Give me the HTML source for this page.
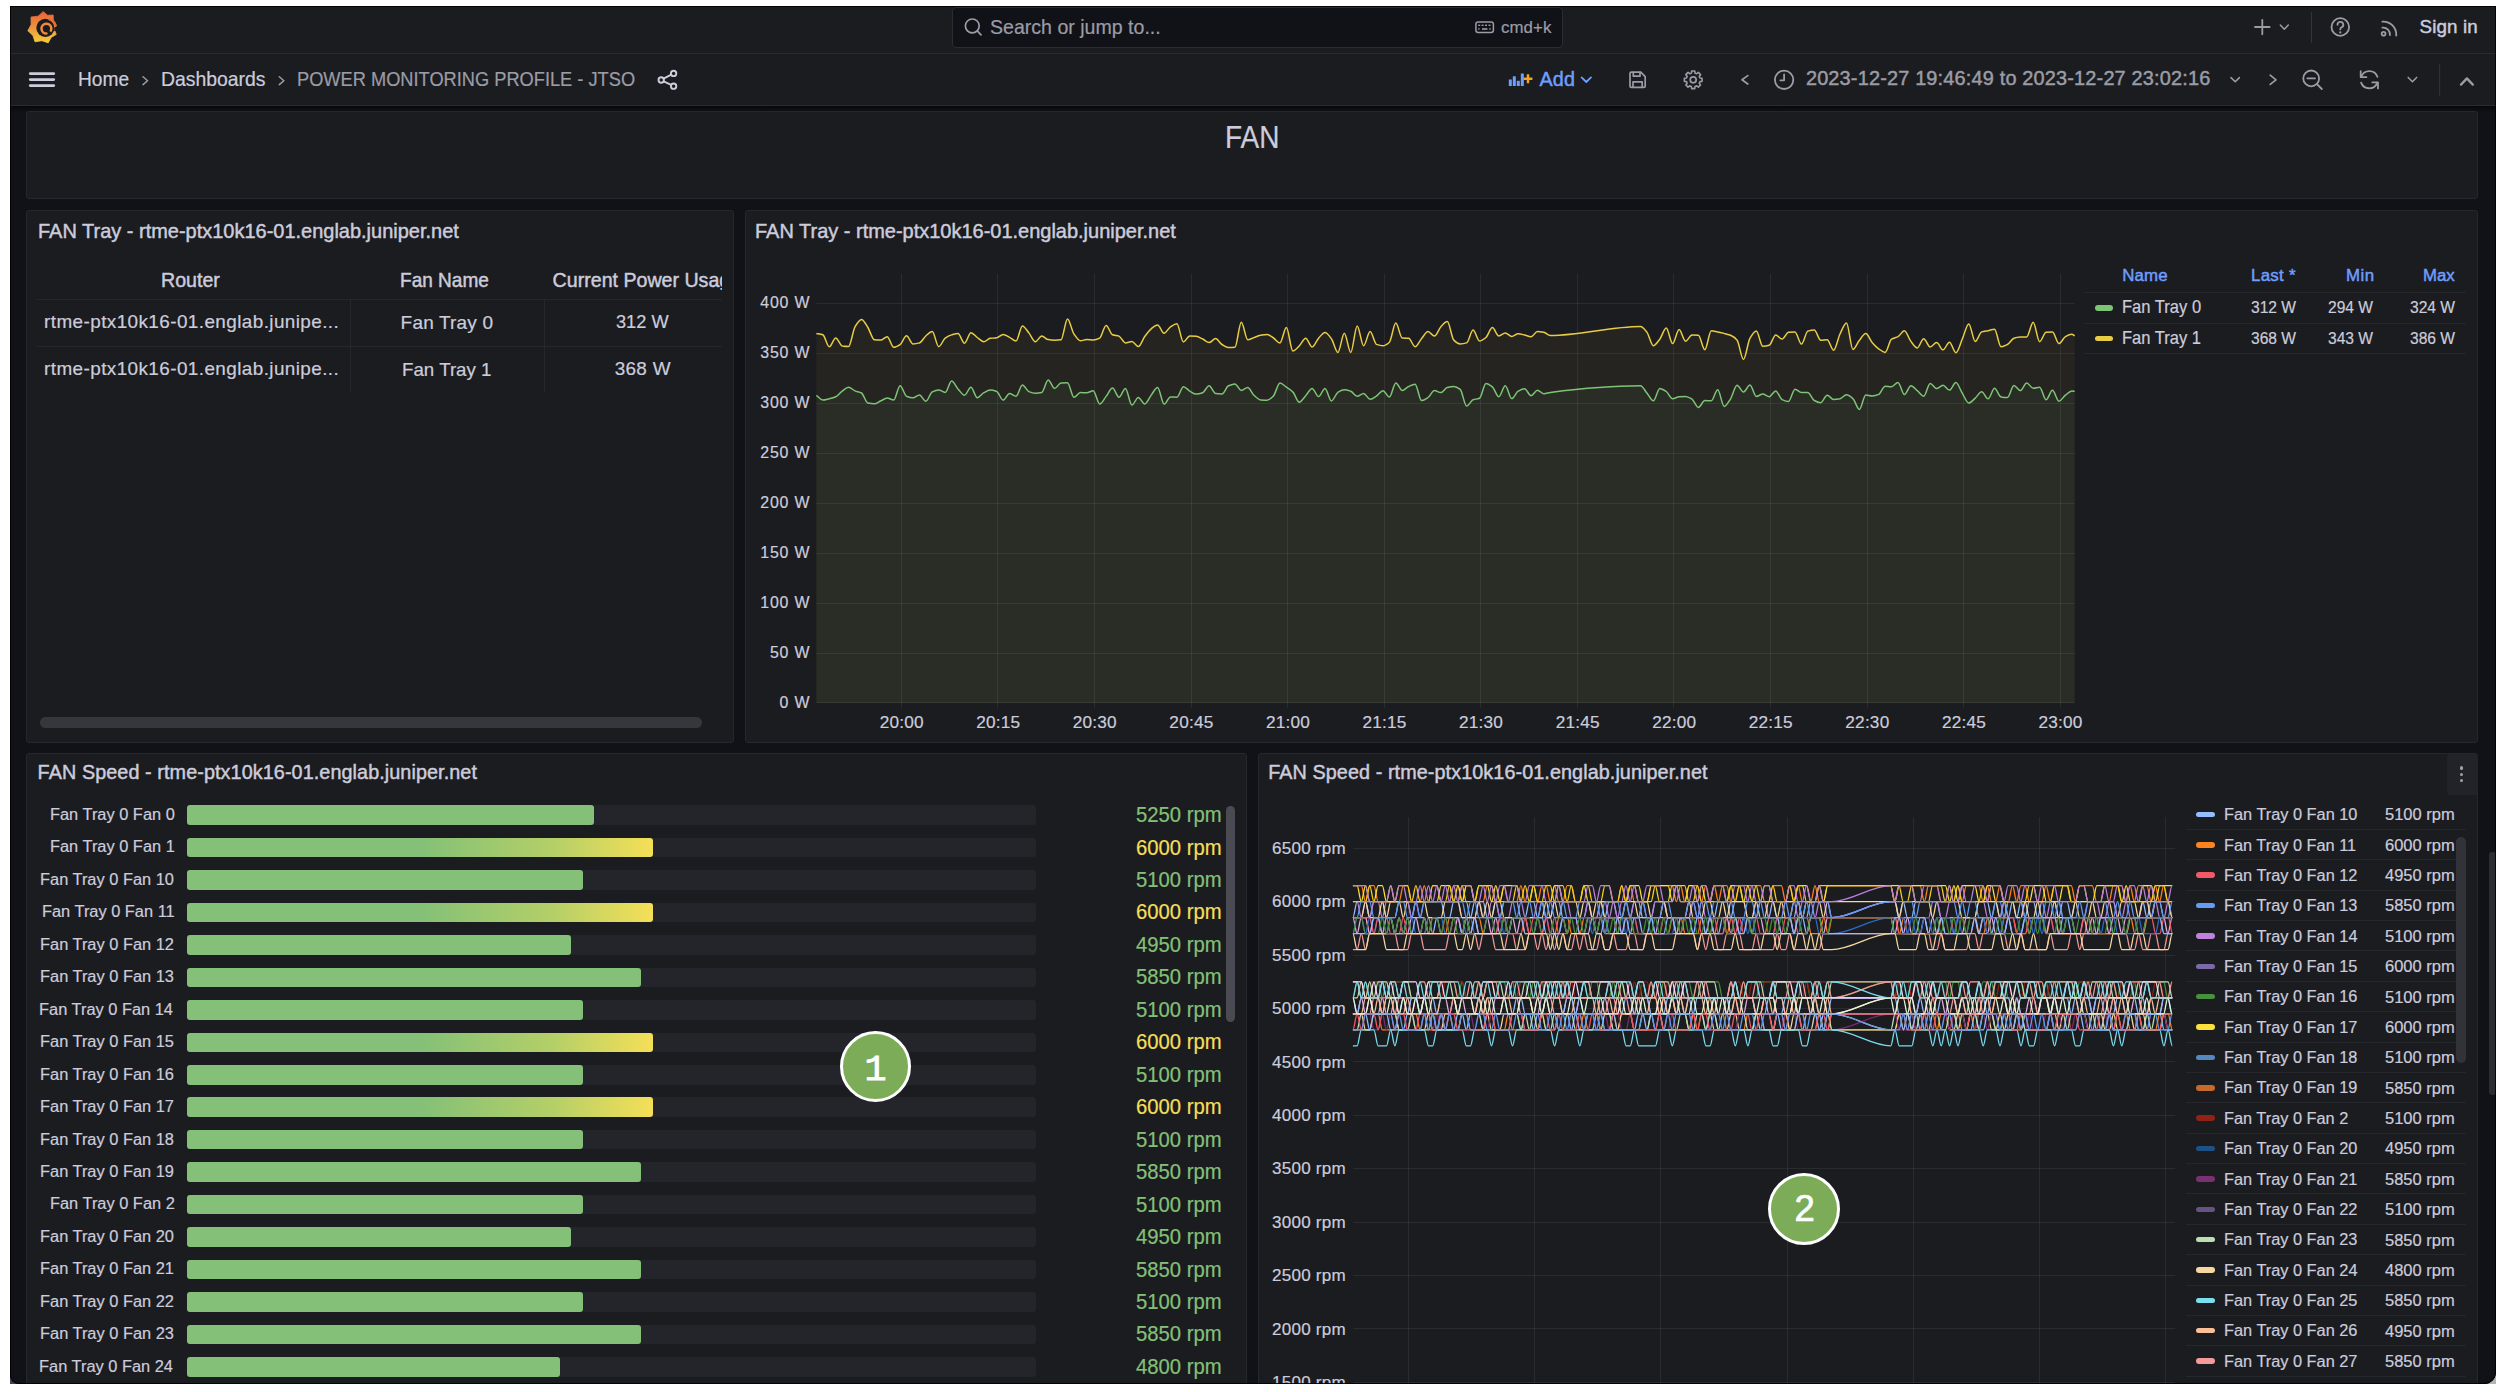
<!DOCTYPE html>
<html><head><meta charset="utf-8"><title>Grafana - FAN</title>
<style>
html,body{margin:0;padding:0;background:#fff;width:2507px;height:1392px;overflow:hidden}
body{position:relative;font-family:"Liberation Sans",sans-serif}
.t{position:absolute;white-space:nowrap;line-height:1}
svg{position:absolute;overflow:visible}
</style></head><body>
<div style="position:absolute;left:10px;top:1368px;width:16px;height:16px;background:#3b4055"></div><div style="position:absolute;left:2480px;top:1368px;width:16px;height:16px;background:#b4b4b4"></div>
<div style="position:absolute;left:10px;top:6px;width:2486px;height:1378px;overflow:hidden;border-radius:0 0 12px 9px"><div style="position:absolute;left:-10px;top:-6px;width:2507px;height:1392px">
<div style="position:absolute;left:10px;top:6px;width:2486px;height:1378px;background:#111217;border-radius:0 0 12px 9px;box-shadow:0 0 0 1px #000"></div>
<div style="position:absolute;left:10px;top:6px;width:2486px;height:47px;background:#1b1c20;"></div>
<div style="position:absolute;left:10px;top:53px;width:2486px;height:1px;background:#2a2b30;"></div>
<div style="position:absolute;left:10px;top:54px;width:2486px;height:51px;background:#1b1c20;"></div>
<div style="position:absolute;left:10px;top:105px;width:2486px;height:1px;background:#2a2b30;"></div>
<div style="position:absolute;left:10px;top:106px;width:2486px;height:6px;background:linear-gradient(#07080b,#111217)"></div>
<div style="position:absolute;left:952px;top:7px;width:611px;height:41px;box-sizing:border-box;background:#111217;border:1px solid #2b2c31;border-radius:4px"></div>
<div class="t" style="left:989.70px;top:17.98px;font-size:19.62px;color:#9b9ca6;transform:scaleX(0.9978);transform-origin:0 0;-webkit-text-stroke:0.2px #9b9ca6">Search or jump to...</div>
<div class="t" style="left:1501.00px;top:19.64px;font-size:16.84px;color:#9b9ca6;letter-spacing:0.095px;-webkit-text-stroke:0.2px #9b9ca6">cmd+k</div>
<div class="t" style="left:2419.50px;top:17.52px;font-size:18.75px;color:#ccccdc;letter-spacing:0.133px;-webkit-text-stroke:0.45px #ccccdc">Sign in</div>
<div class="t" style="left:78.05px;top:69.09px;font-size:20.20px;color:#ccccdc;transform:scaleX(0.9502);transform-origin:0 0;-webkit-text-stroke:0.2px #ccccdc">Home</div>
<div class="t" style="left:160.54px;top:69.09px;font-size:20.20px;color:#ccccdc;transform:scaleX(0.9605);transform-origin:0 0;-webkit-text-stroke:0.2px #ccccdc">Dashboards</div>
<div class="t" style="left:296.70px;top:69.16px;font-size:20.35px;color:#9b9ca6;transform:scaleX(0.8965);transform-origin:0 0;-webkit-text-stroke:0.2px #9b9ca6">POWER MONITORING PROFILE - JTSO</div>
<div class="t" style="left:1539.50px;top:69.56px;font-size:19.77px;color:#6e9fff;letter-spacing:0.171px;-webkit-text-stroke:0.45px #6e9fff">Add</div>
<div class="t" style="left:1805.90px;top:69.43px;font-size:19.91px;color:#9b9ca6;letter-spacing:0.171px;-webkit-text-stroke:0.45px #9b9ca6">2023-12-27 19:46:49 to 2023-12-27 23:02:16</div>
<div style="position:absolute;left:26px;top:111px;width:2452px;height:88px;box-sizing:border-box;background:#1b1c20;border:1px solid #26272c;border-radius:3px"></div>
<div class="t" style="left:1224.91px;top:121.63px;font-size:31.25px;color:#ccccdc;transform:scaleX(0.8967);transform-origin:0 0;-webkit-text-stroke:0.2px #ccccdc">FAN</div>
<div style="position:absolute;left:26px;top:210px;width:708px;height:533px;box-sizing:border-box;background:#1b1c20;border:1px solid #26272c;border-radius:3px"></div>
<div style="position:absolute;left:745px;top:210px;width:1733px;height:533px;box-sizing:border-box;background:#1b1c20;border:1px solid #26272c;border-radius:3px"></div>
<div style="position:absolute;left:26px;top:753px;width:1221px;height:700px;box-sizing:border-box;background:#1b1c20;border:1px solid #26272c;border-radius:3px"></div>
<div style="position:absolute;left:1258px;top:753px;width:1220px;height:700px;box-sizing:border-box;background:#1b1c20;border:1px solid #26272c;border-radius:3px"></div>
<div class="t" style="left:37.60px;top:221.21px;font-size:20.06px;color:#ccccdc;transform:scaleX(0.9964);transform-origin:0 0;-webkit-text-stroke:0.45px #ccccdc">FAN Tray - rtme-ptx10k16-01.englab.juniper.net</div>
<div class="t" style="left:754.80px;top:221.21px;font-size:20.06px;color:#ccccdc;transform:scaleX(0.9964);transform-origin:0 0;-webkit-text-stroke:0.45px #ccccdc">FAN Tray - rtme-ptx10k16-01.englab.juniper.net</div>
<div class="t" style="left:37.60px;top:763.16px;font-size:19.77px;color:#ccccdc;letter-spacing:0.092px;-webkit-text-stroke:0.45px #ccccdc">FAN Speed - rtme-ptx10k16-01.englab.juniper.net</div>
<div class="t" style="left:1268.20px;top:763.16px;font-size:19.77px;color:#ccccdc;letter-spacing:0.092px;-webkit-text-stroke:0.45px #ccccdc">FAN Speed - rtme-ptx10k16-01.englab.juniper.net</div>
<div class="t" style="left:161.21px;top:270.56px;font-size:19.77px;color:#ccccdc;transform:scaleX(0.9914);transform-origin:0 0;-webkit-text-stroke:0.45px #ccccdc">Router</div>
<div class="t" style="left:400.13px;top:270.58px;font-size:19.62px;color:#ccccdc;transform:scaleX(0.9709);transform-origin:0 0;-webkit-text-stroke:0.45px #ccccdc">Fan Name</div>
<div class="t" style="left:552.60px;top:270.58px;font-size:19.62px;color:#ccccdc;-webkit-text-stroke:0.45px #ccccdc;width:169.40px;overflow:hidden">Current Power Usage</div>
<div style="position:absolute;left:37px;top:299px;width:685px;height:1px;background:#26272c;"></div>
<div style="position:absolute;left:37px;top:346px;width:685px;height:1px;background:#26272c;"></div>
<div style="position:absolute;left:350px;top:299px;width:1px;height:93px;background:#26272c;"></div>
<div style="position:absolute;left:544px;top:299px;width:1px;height:93px;background:#26272c;"></div>
<div class="t" style="left:44.10px;top:312.98px;font-size:18.91px;color:#ccccdc;letter-spacing:0.406px;-webkit-text-stroke:0.2px #ccccdc">rtme-ptx10k16-01.englab.junipe...</div>
<div class="t" style="left:400.60px;top:312.97px;font-size:19.04px;color:#ccccdc;letter-spacing:0.164px;-webkit-text-stroke:0.2px #ccccdc">Fan Tray 0</div>
<div class="t" style="left:616.40px;top:313.08px;font-size:18.91px;color:#ccccdc;transform:scaleX(0.9617);transform-origin:0 0;-webkit-text-stroke:0.2px #ccccdc">312 W</div>
<div class="t" style="left:44.10px;top:359.98px;font-size:18.91px;color:#ccccdc;letter-spacing:0.406px;-webkit-text-stroke:0.2px #ccccdc">rtme-ptx10k16-01.englab.junipe...</div>
<div class="t" style="left:402.32px;top:359.87px;font-size:19.04px;color:#ccccdc;transform:scaleX(0.9841);transform-origin:0 0;-webkit-text-stroke:0.2px #ccccdc">Fan Tray 1</div>
<div class="t" style="left:614.70px;top:359.98px;font-size:18.91px;color:#ccccdc;letter-spacing:0.326px;-webkit-text-stroke:0.2px #ccccdc">368 W</div>
<div style="position:absolute;left:40px;top:717px;width:662px;height:11px;background:#36373c;border-radius:6px"></div>
<svg style="left:0;top:0" width="2507" height="1392" viewBox="0 0 2507 1392"><path d="M816.4,333.5C818.5,333.9 820.7,334.0 822.8,334.8C825.0,335.6 827.1,346.8 829.3,346.8C831.4,346.8 833.6,337.9 835.7,337.9C837.9,337.9 840.0,345.6 842.2,346.0C844.3,346.3 846.4,346.5 848.6,346.5C850.7,346.5 852.9,330.3 855.0,326.8C857.2,323.2 859.3,319.4 861.5,319.4C863.6,319.4 865.8,324.3 867.9,327.5C870.0,330.8 872.2,339.4 874.3,339.7C876.5,340.0 878.6,340.1 880.8,340.1C882.9,340.1 885.1,336.7 887.2,336.7C889.4,336.7 891.5,347.3 893.7,347.3C895.8,347.3 897.9,346.0 900.1,344.6C902.2,343.2 904.4,335.8 906.5,335.8C908.7,335.8 910.8,343.9 913.0,343.9C915.1,343.9 917.3,343.5 919.4,342.9C921.6,342.4 923.7,337.8 925.8,336.0C928.0,334.2 930.1,331.6 932.3,331.6C934.4,331.6 936.6,346.7 938.7,346.7C940.9,346.7 943.0,339.7 945.2,338.1C947.3,336.6 949.5,335.5 951.6,334.9C953.7,334.3 955.9,333.5 958.0,333.5C960.2,333.5 962.3,343.2 964.5,343.2C966.6,343.2 968.8,332.7 970.9,332.7C973.1,332.7 975.2,336.0 977.3,337.5C979.5,339.0 981.6,341.7 983.8,341.7C985.9,341.7 988.1,338.6 990.2,338.3C992.4,338.1 994.5,338.1 996.7,337.8C998.8,337.6 1001.0,334.5 1003.1,334.5C1005.2,334.5 1007.4,336.2 1009.5,337.3C1011.7,338.4 1013.8,341.0 1016.0,341.0C1018.1,341.0 1020.3,325.9 1022.4,325.9C1024.6,325.9 1026.7,330.3 1028.9,332.9C1031.0,335.5 1033.1,341.8 1035.3,341.8C1037.4,341.8 1039.6,336.0 1041.7,336.0C1043.9,336.0 1046.0,339.3 1048.2,339.6C1050.3,340.0 1052.5,340.2 1054.6,340.2C1056.8,340.2 1058.9,340.1 1061.0,339.8C1063.2,339.5 1065.3,319.0 1067.5,319.0C1069.6,319.0 1071.8,330.8 1073.9,333.9C1076.1,337.0 1078.2,340.7 1080.4,340.7C1082.5,340.7 1084.6,339.5 1086.8,339.5C1088.9,339.5 1091.1,340.0 1093.2,340.0C1095.4,340.0 1097.5,339.2 1099.7,338.1C1101.8,337.0 1104.0,325.5 1106.1,325.5C1108.3,325.5 1110.4,334.0 1112.5,334.8C1114.7,335.6 1116.8,335.4 1119.0,336.1C1121.1,336.9 1123.3,342.9 1125.4,342.9C1127.6,342.9 1129.7,341.5 1131.9,341.5C1134.0,341.5 1136.2,346.6 1138.3,346.6C1140.4,346.6 1142.6,339.5 1144.7,336.5C1146.9,333.6 1149.0,330.6 1151.2,328.8C1153.3,327.1 1155.5,324.9 1157.6,324.9C1159.8,324.9 1161.9,333.2 1164.1,333.2C1166.2,333.2 1168.3,328.2 1170.5,326.8C1172.6,325.4 1174.8,323.7 1176.9,323.7C1179.1,323.7 1181.2,341.9 1183.4,341.9C1185.5,341.9 1187.7,335.9 1189.8,335.9C1191.9,335.9 1194.1,336.1 1196.2,336.3C1198.4,336.5 1200.5,338.0 1202.7,339.0C1204.8,340.0 1207.0,342.6 1209.1,342.6C1211.3,342.6 1213.4,338.6 1215.6,338.6C1217.7,338.6 1219.8,343.1 1222.0,344.5C1224.1,345.8 1226.3,347.6 1228.4,347.6C1230.6,347.6 1232.7,347.5 1234.9,347.3C1237.0,347.2 1239.2,322.2 1241.3,322.2C1243.5,322.2 1245.6,339.8 1247.7,339.8C1249.9,339.8 1252.0,338.2 1254.2,337.5C1256.3,336.7 1258.5,335.7 1260.6,335.3C1262.8,334.9 1264.9,334.4 1267.1,334.4C1269.2,334.4 1271.3,336.6 1273.5,338.0C1275.6,339.4 1277.8,343.0 1279.9,343.0C1282.1,343.0 1284.2,327.6 1286.4,327.6C1288.5,327.6 1290.7,350.9 1292.8,350.9C1295.0,350.9 1297.1,348.0 1299.2,346.0C1301.4,344.0 1303.5,338.2 1305.7,338.2C1307.8,338.2 1310.0,347.0 1312.1,347.0C1314.3,347.0 1316.4,340.6 1318.6,338.2C1320.7,335.9 1322.9,332.4 1325.0,332.4C1327.1,332.4 1329.3,335.8 1331.4,338.7C1333.6,341.6 1335.7,352.4 1337.9,352.4C1340.0,352.4 1342.2,333.3 1344.3,333.3C1346.5,333.3 1348.6,352.4 1350.8,352.4C1352.9,352.4 1355.0,326.0 1357.2,326.0C1359.3,326.0 1361.5,345.7 1363.6,345.7C1365.8,345.7 1367.9,331.5 1370.1,331.5C1372.2,331.5 1374.4,343.5 1376.5,344.4C1378.6,345.2 1380.8,345.8 1382.9,345.8C1385.1,345.8 1387.2,344.2 1389.4,342.2C1391.5,340.2 1393.7,323.1 1395.8,323.1C1398.0,323.1 1400.1,337.9 1402.3,338.1C1404.4,338.3 1406.5,338.2 1408.7,338.3C1410.8,338.5 1413.0,346.7 1415.1,346.7C1417.3,346.7 1419.4,341.1 1421.6,338.6C1423.7,336.1 1425.9,331.6 1428.0,331.6C1430.2,331.6 1432.3,336.1 1434.4,336.1C1436.6,336.1 1438.7,329.0 1440.9,326.7C1443.0,324.5 1445.2,321.6 1447.3,321.6C1449.5,321.6 1451.6,337.9 1453.8,340.1C1455.9,342.2 1458.1,343.9 1460.2,343.9C1462.3,343.9 1464.5,343.5 1466.6,342.9C1468.8,342.3 1470.9,330.0 1473.1,330.0C1475.2,330.0 1477.4,341.0 1479.5,341.0C1481.7,341.0 1483.8,339.2 1485.9,337.5C1488.1,335.8 1490.2,327.6 1492.4,327.6C1494.5,327.6 1496.7,336.0 1498.8,336.0C1501.0,336.0 1503.1,332.9 1505.3,332.9C1507.4,332.9 1509.6,336.5 1511.7,336.5C1513.8,336.5 1516.0,333.8 1518.1,333.8C1520.3,333.8 1522.4,334.5 1524.6,335.0C1526.7,335.5 1528.9,336.8 1531.0,336.8C1533.2,336.8 1535.3,331.5 1537.5,331.5C1539.6,331.5 1541.7,331.9 1543.9,332.3C1546.0,332.8 1548.2,335.5 1550.3,335.5C1580.4,335.5 1610.4,326.5 1640.5,326.5C1642.6,326.5 1644.8,329.5 1646.9,332.1C1649.0,334.8 1651.2,345.7 1653.3,345.7C1655.5,345.7 1657.6,341.9 1659.8,339.2C1661.9,336.4 1664.1,328.1 1666.2,328.1C1668.4,328.1 1670.5,343.6 1672.6,343.6C1674.8,343.6 1676.9,329.4 1679.1,329.4C1681.2,329.4 1683.4,341.2 1685.5,341.2C1687.7,341.2 1689.8,334.9 1692.0,334.9C1694.1,334.9 1696.3,335.0 1698.4,335.2C1700.5,335.4 1702.7,349.7 1704.8,349.7C1707.0,349.7 1709.1,330.8 1711.3,330.8C1713.4,330.8 1715.6,331.6 1717.7,332.0C1719.9,332.4 1722.0,332.8 1724.2,333.4C1726.3,333.9 1728.4,334.4 1730.6,335.3C1732.7,336.2 1734.9,337.5 1737.0,340.1C1739.2,342.7 1741.3,359.4 1743.5,359.4C1745.6,359.4 1747.8,342.0 1749.9,338.4C1752.1,334.8 1754.2,331.1 1756.3,331.1C1758.5,331.1 1760.6,346.3 1762.8,346.3C1764.9,346.3 1767.1,345.9 1769.2,345.2C1771.4,344.6 1773.5,335.0 1775.7,335.0C1777.8,335.0 1779.9,339.1 1782.1,339.1C1784.2,339.1 1786.4,332.4 1788.5,332.2C1790.7,332.0 1792.8,331.9 1795.0,331.9C1797.1,331.9 1799.3,344.0 1801.4,344.0C1803.6,344.0 1805.7,331.8 1807.8,331.1C1810.0,330.5 1812.1,330.1 1814.3,330.1C1816.4,330.1 1818.6,340.2 1820.7,340.2C1822.9,340.2 1825.0,339.7 1827.2,339.7C1829.3,339.7 1831.5,350.2 1833.6,350.2C1835.7,350.2 1837.9,338.4 1840.0,334.0C1842.2,329.6 1844.3,322.9 1846.5,322.9C1848.6,322.9 1850.8,349.5 1852.9,349.5C1855.1,349.5 1857.2,342.9 1859.4,340.3C1861.5,337.7 1863.6,333.5 1865.8,333.5C1867.9,333.5 1870.1,340.1 1872.2,342.6C1874.4,345.0 1876.5,347.3 1878.7,348.8C1880.8,350.3 1883.0,352.4 1885.1,352.4C1887.2,352.4 1889.4,340.6 1891.5,339.2C1893.7,337.8 1895.8,337.8 1898.0,336.7C1900.1,335.5 1902.3,330.7 1904.4,330.7C1906.6,330.7 1908.7,338.7 1910.9,341.4C1913.0,344.1 1915.1,347.9 1917.3,347.9C1919.4,347.9 1921.6,338.7 1923.7,338.7C1925.9,338.7 1928.0,346.9 1930.2,346.9C1932.3,346.9 1934.5,342.6 1936.6,342.6C1938.8,342.6 1940.9,349.8 1943.0,349.8C1945.2,349.8 1947.3,342.2 1949.5,342.2C1951.6,342.2 1953.8,352.7 1955.9,352.7C1958.1,352.7 1960.2,343.6 1962.4,338.8C1964.5,334.1 1966.6,323.9 1968.8,323.9C1970.9,323.9 1973.1,341.4 1975.2,341.4C1977.4,341.4 1979.5,332.7 1981.7,331.9C1983.8,331.2 1986.0,331.1 1988.1,330.7C1990.3,330.2 1992.4,329.2 1994.5,329.2C1996.7,329.2 1998.8,346.8 2001.0,346.8C2003.1,346.8 2005.3,345.6 2007.4,344.5C2009.6,343.4 2011.7,338.9 2013.9,338.2C2016.0,337.5 2018.2,337.1 2020.3,337.0C2022.4,336.9 2024.6,336.9 2026.7,336.9C2028.9,336.8 2031.0,322.2 2033.2,322.2C2035.3,322.2 2037.5,341.7 2039.6,341.7C2041.8,341.7 2043.9,332.4 2046.1,332.3C2048.2,332.2 2050.3,332.1 2052.5,332.1C2054.6,332.1 2056.8,343.5 2058.9,343.5C2061.1,343.5 2063.2,337.8 2065.4,336.6C2067.5,335.4 2069.7,334.2 2071.8,334.2C2072.8,334.2 2073.7,335.3 2074.7,335.9 L2074.7,703 L816.4,703 Z" fill="#e8cc44" fill-opacity="0.05" stroke="none"/><path d="M816.4,395.4C818.5,396.9 820.7,400.0 822.8,400.0C825.0,400.0 827.1,399.2 829.3,398.7C831.4,398.1 833.6,397.8 835.7,396.8C837.9,395.9 840.0,392.6 842.2,391.1C844.3,389.6 846.4,387.3 848.6,387.3C850.7,387.3 852.9,390.0 855.0,390.9C857.2,391.8 859.3,391.8 861.5,393.0C863.6,394.2 865.8,402.7 867.9,403.1C870.0,403.5 872.2,403.8 874.3,403.8C876.5,403.8 878.6,401.8 880.8,400.8C882.9,399.9 885.1,398.1 887.2,398.1C889.4,398.1 891.5,400.0 893.7,400.0C895.8,400.0 897.9,385.7 900.1,385.7C902.2,385.7 904.4,395.2 906.5,396.2C908.7,397.1 910.8,397.8 913.0,397.8C915.1,397.8 917.3,395.0 919.4,395.0C921.6,395.0 923.7,401.2 925.8,401.2C928.0,401.2 930.1,392.9 932.3,391.8C934.4,390.8 936.6,390.0 938.7,390.0C940.9,390.0 943.0,392.4 945.2,392.4C947.3,392.4 949.5,381.0 951.6,381.0C953.7,381.0 955.9,386.5 958.0,388.9C960.2,391.2 962.3,395.2 964.5,395.2C966.6,395.2 968.8,387.3 970.9,387.3C973.1,387.3 975.2,397.8 977.3,397.8C979.5,397.8 981.6,393.9 983.8,392.7C985.9,391.6 988.1,390.1 990.2,390.1C992.4,390.1 994.5,390.7 996.7,391.5C998.8,392.3 1001.0,400.1 1003.1,400.1C1005.2,400.1 1007.4,393.5 1009.5,393.5C1011.7,393.5 1013.8,396.2 1016.0,396.2C1018.1,396.2 1020.3,385.1 1022.4,385.1C1024.6,385.1 1026.7,390.8 1028.9,391.6C1031.0,392.5 1033.1,393.3 1035.3,393.3C1037.4,393.3 1039.6,393.0 1041.7,392.5C1043.9,392.0 1046.0,379.9 1048.2,379.9C1050.3,379.9 1052.5,388.4 1054.6,388.4C1056.8,388.4 1058.9,383.0 1061.0,382.9C1063.2,382.8 1065.3,382.8 1067.5,382.8C1069.6,382.8 1071.8,397.3 1073.9,397.3C1076.1,397.3 1078.2,392.6 1080.4,392.6C1082.5,392.6 1084.6,392.8 1086.8,392.8C1088.9,392.8 1091.1,390.7 1093.2,390.7C1095.4,390.7 1097.5,404.0 1099.7,404.0C1101.8,404.0 1104.0,399.0 1106.1,396.4C1108.3,393.7 1110.4,388.1 1112.5,388.1C1114.7,388.1 1116.8,397.2 1119.0,397.2C1121.1,397.2 1123.3,388.4 1125.4,388.4C1127.6,388.4 1129.7,405.1 1131.9,405.1C1134.0,405.1 1136.2,397.4 1138.3,397.4C1140.4,397.4 1142.6,404.0 1144.7,404.0C1146.9,404.0 1149.0,397.9 1151.2,395.1C1153.3,392.4 1155.5,387.5 1157.6,387.5C1159.8,387.5 1161.9,404.1 1164.1,404.1C1166.2,404.1 1168.3,396.9 1170.5,396.9C1172.6,396.9 1174.8,397.2 1176.9,397.2C1179.1,397.2 1181.2,386.7 1183.4,386.7C1185.5,386.7 1187.7,389.9 1189.8,391.1C1191.9,392.3 1194.1,394.1 1196.2,394.1C1198.4,394.1 1200.5,393.5 1202.7,392.7C1204.8,391.9 1207.0,385.7 1209.1,385.7C1211.3,385.7 1213.4,393.2 1215.6,393.5C1217.7,393.8 1219.8,393.9 1222.0,393.9C1224.1,393.9 1226.3,386.8 1228.4,385.8C1230.6,384.9 1232.7,384.0 1234.9,384.0C1237.0,384.0 1239.2,390.4 1241.3,390.4C1243.5,390.4 1245.6,387.6 1247.7,387.6C1249.9,387.6 1252.0,393.7 1254.2,395.5C1256.3,397.4 1258.5,399.7 1260.6,399.9C1262.8,400.1 1264.9,400.3 1267.1,400.3C1269.2,400.3 1271.3,398.1 1273.5,395.9C1275.6,393.7 1277.8,382.9 1279.9,382.9C1282.1,382.9 1284.2,385.6 1286.4,387.1C1288.5,388.6 1290.7,389.7 1292.8,391.9C1295.0,394.1 1297.1,402.2 1299.2,402.2C1301.4,402.2 1303.5,398.1 1305.7,395.8C1307.8,393.5 1310.0,388.4 1312.1,388.4C1314.3,388.4 1316.4,396.6 1318.6,396.6C1320.7,396.6 1322.9,388.4 1325.0,388.4C1327.1,388.4 1329.3,400.9 1331.4,400.9C1333.6,400.9 1335.7,393.6 1337.9,392.3C1340.0,391.1 1342.2,389.8 1344.3,389.8C1346.5,389.8 1348.6,390.5 1350.8,391.2C1352.9,391.9 1355.0,396.3 1357.2,396.3C1359.3,396.3 1361.5,393.4 1363.6,393.4C1365.8,393.4 1367.9,399.3 1370.1,399.3C1372.2,399.3 1374.4,397.4 1376.5,396.0C1378.6,394.7 1380.8,390.7 1382.9,390.7C1385.1,390.7 1387.2,397.0 1389.4,397.0C1391.5,397.0 1393.7,382.9 1395.8,382.9C1398.0,382.9 1400.1,390.5 1402.3,390.5C1404.4,390.5 1406.5,387.4 1408.7,386.5C1410.8,385.5 1413.0,384.3 1415.1,384.3C1417.3,384.3 1419.4,400.6 1421.6,400.6C1423.7,400.6 1425.9,398.9 1428.0,397.5C1430.2,396.1 1432.3,390.5 1434.4,390.5C1436.6,390.5 1438.7,392.6 1440.9,392.6C1443.0,392.6 1445.2,388.0 1447.3,387.4C1449.5,386.9 1451.6,386.5 1453.8,386.5C1455.9,386.5 1458.1,387.8 1460.2,389.4C1462.3,391.0 1464.5,406.0 1466.6,406.0C1468.8,406.0 1470.9,400.6 1473.1,399.8C1475.2,399.0 1477.4,399.2 1479.5,398.2C1481.7,397.3 1483.8,383.5 1485.9,383.5C1488.1,383.5 1490.2,385.2 1492.4,386.9C1494.5,388.6 1496.7,396.8 1498.8,396.8C1501.0,396.8 1503.1,385.8 1505.3,385.8C1507.4,385.8 1509.6,398.6 1511.7,398.6C1513.8,398.6 1516.0,392.4 1518.1,391.2C1520.3,390.0 1522.4,388.8 1524.6,388.8C1526.7,388.8 1528.9,395.7 1531.0,395.7C1533.2,395.7 1535.3,390.3 1537.5,390.3C1539.6,390.3 1541.7,393.8 1543.9,393.8C1546.0,393.8 1548.2,392.7 1550.3,392.4C1580.4,388.6 1610.4,385.8 1640.5,385.8C1642.6,385.8 1644.8,390.5 1646.9,393.0C1649.0,395.5 1651.2,400.8 1653.3,400.8C1655.5,400.8 1657.6,388.5 1659.8,388.5C1661.9,388.5 1664.1,390.1 1666.2,391.5C1668.4,392.9 1670.5,398.7 1672.6,398.7C1674.8,398.7 1676.9,396.8 1679.1,396.7C1681.2,396.6 1683.4,396.5 1685.5,396.5C1687.7,396.5 1689.8,397.8 1692.0,399.1C1694.1,400.4 1696.3,407.4 1698.4,407.4C1700.5,407.4 1702.7,400.6 1704.8,400.6C1707.0,400.6 1709.1,400.8 1711.3,400.8C1713.4,400.8 1715.6,389.8 1717.7,389.8C1719.9,389.8 1722.0,406.4 1724.2,406.4C1726.3,406.4 1728.4,402.0 1730.6,398.8C1732.7,395.6 1734.9,385.3 1737.0,385.3C1739.2,385.3 1741.3,392.0 1743.5,392.0C1745.6,392.0 1747.8,385.0 1749.9,385.0C1752.1,385.0 1754.2,396.5 1756.3,396.5C1758.5,396.5 1760.6,394.0 1762.8,394.0C1764.9,394.0 1767.1,396.7 1769.2,396.7C1771.4,396.7 1773.5,390.9 1775.7,390.9C1777.8,390.9 1779.9,398.6 1782.1,399.6C1784.2,400.6 1786.4,401.5 1788.5,401.5C1790.7,401.5 1792.8,389.2 1795.0,389.2C1797.1,389.2 1799.3,392.5 1801.4,392.6C1803.6,392.6 1805.7,392.6 1807.8,392.6C1810.0,392.7 1812.1,399.4 1814.3,400.5C1816.4,401.7 1818.6,402.7 1820.7,402.7C1822.9,402.7 1825.0,395.2 1827.2,395.2C1829.3,395.2 1831.5,399.5 1833.6,399.5C1835.7,399.5 1837.9,399.1 1840.0,398.7C1842.2,398.2 1844.3,394.8 1846.5,394.8C1848.6,394.8 1850.8,396.7 1852.9,398.6C1855.1,400.4 1857.2,409.4 1859.4,409.4C1861.5,409.4 1863.6,394.9 1865.8,394.9C1867.9,394.9 1870.1,395.9 1872.2,395.9C1874.4,395.9 1876.5,395.3 1878.7,394.4C1880.8,393.5 1883.0,386.2 1885.1,386.2C1887.2,386.2 1889.4,386.7 1891.5,386.7C1893.7,386.7 1895.8,382.4 1898.0,382.4C1900.1,382.4 1902.3,394.5 1904.4,394.5C1906.6,394.5 1908.7,385.7 1910.9,385.7C1913.0,385.7 1915.1,388.8 1917.3,390.6C1919.4,392.3 1921.6,396.2 1923.7,396.2C1925.9,396.2 1928.0,383.4 1930.2,383.4C1932.3,383.4 1934.5,388.6 1936.6,388.6C1938.8,388.6 1940.9,385.2 1943.0,385.2C1945.2,385.2 1947.3,390.1 1949.5,390.1C1951.6,390.1 1953.8,382.5 1955.9,382.5C1958.1,382.5 1960.2,390.0 1962.4,393.4C1964.5,396.8 1966.6,403.0 1968.8,403.0C1970.9,403.0 1973.1,399.9 1975.2,398.1C1977.4,396.2 1979.5,391.8 1981.7,391.8C1983.8,391.8 1986.0,398.8 1988.1,398.8C1990.3,398.8 1992.4,388.3 1994.5,388.3C1996.7,388.3 1998.8,396.5 2001.0,396.9C2003.1,397.3 2005.3,397.5 2007.4,397.5C2009.6,397.5 2011.7,385.5 2013.9,385.5C2016.0,385.5 2018.2,390.6 2020.3,390.6C2022.4,390.6 2024.6,383.0 2026.7,383.0C2028.9,383.0 2031.0,388.3 2033.2,388.3C2035.3,388.3 2037.5,387.3 2039.6,387.3C2041.8,387.3 2043.9,399.8 2046.1,399.8C2048.2,399.8 2050.3,390.3 2052.5,390.3C2054.6,390.3 2056.8,401.2 2058.9,401.2C2061.1,401.2 2063.2,396.9 2065.4,395.2C2067.5,393.6 2069.7,390.9 2071.8,390.9C2072.8,390.9 2073.7,391.2 2074.7,391.4 L2074.7,703 L816.4,703 Z" fill="#7ec475" fill-opacity="0.06" stroke="none"/><line x1="816.4" y1="303.5" x2="2074.7" y2="303.5" stroke="rgba(204,204,220,0.085)" stroke-width="1"/><line x1="816.4" y1="353.5" x2="2074.7" y2="353.5" stroke="rgba(204,204,220,0.085)" stroke-width="1"/><line x1="816.4" y1="403.5" x2="2074.7" y2="403.5" stroke="rgba(204,204,220,0.085)" stroke-width="1"/><line x1="816.4" y1="453.5" x2="2074.7" y2="453.5" stroke="rgba(204,204,220,0.085)" stroke-width="1"/><line x1="816.4" y1="503.5" x2="2074.7" y2="503.5" stroke="rgba(204,204,220,0.085)" stroke-width="1"/><line x1="816.4" y1="553.5" x2="2074.7" y2="553.5" stroke="rgba(204,204,220,0.085)" stroke-width="1"/><line x1="816.4" y1="603.5" x2="2074.7" y2="603.5" stroke="rgba(204,204,220,0.085)" stroke-width="1"/><line x1="816.4" y1="653.5" x2="2074.7" y2="653.5" stroke="rgba(204,204,220,0.085)" stroke-width="1"/><line x1="816.4" y1="702.5" x2="2074.7" y2="702.5" stroke="rgba(204,204,220,0.085)" stroke-width="1"/><line x1="901.5" y1="273.8" x2="901.5" y2="708" stroke="rgba(204,204,220,0.085)" stroke-width="1"/><line x1="997.5" y1="273.8" x2="997.5" y2="708" stroke="rgba(204,204,220,0.085)" stroke-width="1"/><line x1="1094.5" y1="273.8" x2="1094.5" y2="708" stroke="rgba(204,204,220,0.085)" stroke-width="1"/><line x1="1191.5" y1="273.8" x2="1191.5" y2="708" stroke="rgba(204,204,220,0.085)" stroke-width="1"/><line x1="1287.5" y1="273.8" x2="1287.5" y2="708" stroke="rgba(204,204,220,0.085)" stroke-width="1"/><line x1="1384.5" y1="273.8" x2="1384.5" y2="708" stroke="rgba(204,204,220,0.085)" stroke-width="1"/><line x1="1480.5" y1="273.8" x2="1480.5" y2="708" stroke="rgba(204,204,220,0.085)" stroke-width="1"/><line x1="1577.5" y1="273.8" x2="1577.5" y2="708" stroke="rgba(204,204,220,0.085)" stroke-width="1"/><line x1="1673.5" y1="273.8" x2="1673.5" y2="708" stroke="rgba(204,204,220,0.085)" stroke-width="1"/><line x1="1770.5" y1="273.8" x2="1770.5" y2="708" stroke="rgba(204,204,220,0.085)" stroke-width="1"/><line x1="1867.5" y1="273.8" x2="1867.5" y2="708" stroke="rgba(204,204,220,0.085)" stroke-width="1"/><line x1="1963.5" y1="273.8" x2="1963.5" y2="708" stroke="rgba(204,204,220,0.085)" stroke-width="1"/><line x1="2060.5" y1="273.8" x2="2060.5" y2="708" stroke="rgba(204,204,220,0.085)" stroke-width="1"/><path d="M816.4,395.4C818.5,396.9 820.7,400.0 822.8,400.0C825.0,400.0 827.1,399.2 829.3,398.7C831.4,398.1 833.6,397.8 835.7,396.8C837.9,395.9 840.0,392.6 842.2,391.1C844.3,389.6 846.4,387.3 848.6,387.3C850.7,387.3 852.9,390.0 855.0,390.9C857.2,391.8 859.3,391.8 861.5,393.0C863.6,394.2 865.8,402.7 867.9,403.1C870.0,403.5 872.2,403.8 874.3,403.8C876.5,403.8 878.6,401.8 880.8,400.8C882.9,399.9 885.1,398.1 887.2,398.1C889.4,398.1 891.5,400.0 893.7,400.0C895.8,400.0 897.9,385.7 900.1,385.7C902.2,385.7 904.4,395.2 906.5,396.2C908.7,397.1 910.8,397.8 913.0,397.8C915.1,397.8 917.3,395.0 919.4,395.0C921.6,395.0 923.7,401.2 925.8,401.2C928.0,401.2 930.1,392.9 932.3,391.8C934.4,390.8 936.6,390.0 938.7,390.0C940.9,390.0 943.0,392.4 945.2,392.4C947.3,392.4 949.5,381.0 951.6,381.0C953.7,381.0 955.9,386.5 958.0,388.9C960.2,391.2 962.3,395.2 964.5,395.2C966.6,395.2 968.8,387.3 970.9,387.3C973.1,387.3 975.2,397.8 977.3,397.8C979.5,397.8 981.6,393.9 983.8,392.7C985.9,391.6 988.1,390.1 990.2,390.1C992.4,390.1 994.5,390.7 996.7,391.5C998.8,392.3 1001.0,400.1 1003.1,400.1C1005.2,400.1 1007.4,393.5 1009.5,393.5C1011.7,393.5 1013.8,396.2 1016.0,396.2C1018.1,396.2 1020.3,385.1 1022.4,385.1C1024.6,385.1 1026.7,390.8 1028.9,391.6C1031.0,392.5 1033.1,393.3 1035.3,393.3C1037.4,393.3 1039.6,393.0 1041.7,392.5C1043.9,392.0 1046.0,379.9 1048.2,379.9C1050.3,379.9 1052.5,388.4 1054.6,388.4C1056.8,388.4 1058.9,383.0 1061.0,382.9C1063.2,382.8 1065.3,382.8 1067.5,382.8C1069.6,382.8 1071.8,397.3 1073.9,397.3C1076.1,397.3 1078.2,392.6 1080.4,392.6C1082.5,392.6 1084.6,392.8 1086.8,392.8C1088.9,392.8 1091.1,390.7 1093.2,390.7C1095.4,390.7 1097.5,404.0 1099.7,404.0C1101.8,404.0 1104.0,399.0 1106.1,396.4C1108.3,393.7 1110.4,388.1 1112.5,388.1C1114.7,388.1 1116.8,397.2 1119.0,397.2C1121.1,397.2 1123.3,388.4 1125.4,388.4C1127.6,388.4 1129.7,405.1 1131.9,405.1C1134.0,405.1 1136.2,397.4 1138.3,397.4C1140.4,397.4 1142.6,404.0 1144.7,404.0C1146.9,404.0 1149.0,397.9 1151.2,395.1C1153.3,392.4 1155.5,387.5 1157.6,387.5C1159.8,387.5 1161.9,404.1 1164.1,404.1C1166.2,404.1 1168.3,396.9 1170.5,396.9C1172.6,396.9 1174.8,397.2 1176.9,397.2C1179.1,397.2 1181.2,386.7 1183.4,386.7C1185.5,386.7 1187.7,389.9 1189.8,391.1C1191.9,392.3 1194.1,394.1 1196.2,394.1C1198.4,394.1 1200.5,393.5 1202.7,392.7C1204.8,391.9 1207.0,385.7 1209.1,385.7C1211.3,385.7 1213.4,393.2 1215.6,393.5C1217.7,393.8 1219.8,393.9 1222.0,393.9C1224.1,393.9 1226.3,386.8 1228.4,385.8C1230.6,384.9 1232.7,384.0 1234.9,384.0C1237.0,384.0 1239.2,390.4 1241.3,390.4C1243.5,390.4 1245.6,387.6 1247.7,387.6C1249.9,387.6 1252.0,393.7 1254.2,395.5C1256.3,397.4 1258.5,399.7 1260.6,399.9C1262.8,400.1 1264.9,400.3 1267.1,400.3C1269.2,400.3 1271.3,398.1 1273.5,395.9C1275.6,393.7 1277.8,382.9 1279.9,382.9C1282.1,382.9 1284.2,385.6 1286.4,387.1C1288.5,388.6 1290.7,389.7 1292.8,391.9C1295.0,394.1 1297.1,402.2 1299.2,402.2C1301.4,402.2 1303.5,398.1 1305.7,395.8C1307.8,393.5 1310.0,388.4 1312.1,388.4C1314.3,388.4 1316.4,396.6 1318.6,396.6C1320.7,396.6 1322.9,388.4 1325.0,388.4C1327.1,388.4 1329.3,400.9 1331.4,400.9C1333.6,400.9 1335.7,393.6 1337.9,392.3C1340.0,391.1 1342.2,389.8 1344.3,389.8C1346.5,389.8 1348.6,390.5 1350.8,391.2C1352.9,391.9 1355.0,396.3 1357.2,396.3C1359.3,396.3 1361.5,393.4 1363.6,393.4C1365.8,393.4 1367.9,399.3 1370.1,399.3C1372.2,399.3 1374.4,397.4 1376.5,396.0C1378.6,394.7 1380.8,390.7 1382.9,390.7C1385.1,390.7 1387.2,397.0 1389.4,397.0C1391.5,397.0 1393.7,382.9 1395.8,382.9C1398.0,382.9 1400.1,390.5 1402.3,390.5C1404.4,390.5 1406.5,387.4 1408.7,386.5C1410.8,385.5 1413.0,384.3 1415.1,384.3C1417.3,384.3 1419.4,400.6 1421.6,400.6C1423.7,400.6 1425.9,398.9 1428.0,397.5C1430.2,396.1 1432.3,390.5 1434.4,390.5C1436.6,390.5 1438.7,392.6 1440.9,392.6C1443.0,392.6 1445.2,388.0 1447.3,387.4C1449.5,386.9 1451.6,386.5 1453.8,386.5C1455.9,386.5 1458.1,387.8 1460.2,389.4C1462.3,391.0 1464.5,406.0 1466.6,406.0C1468.8,406.0 1470.9,400.6 1473.1,399.8C1475.2,399.0 1477.4,399.2 1479.5,398.2C1481.7,397.3 1483.8,383.5 1485.9,383.5C1488.1,383.5 1490.2,385.2 1492.4,386.9C1494.5,388.6 1496.7,396.8 1498.8,396.8C1501.0,396.8 1503.1,385.8 1505.3,385.8C1507.4,385.8 1509.6,398.6 1511.7,398.6C1513.8,398.6 1516.0,392.4 1518.1,391.2C1520.3,390.0 1522.4,388.8 1524.6,388.8C1526.7,388.8 1528.9,395.7 1531.0,395.7C1533.2,395.7 1535.3,390.3 1537.5,390.3C1539.6,390.3 1541.7,393.8 1543.9,393.8C1546.0,393.8 1548.2,392.7 1550.3,392.4C1580.4,388.6 1610.4,385.8 1640.5,385.8C1642.6,385.8 1644.8,390.5 1646.9,393.0C1649.0,395.5 1651.2,400.8 1653.3,400.8C1655.5,400.8 1657.6,388.5 1659.8,388.5C1661.9,388.5 1664.1,390.1 1666.2,391.5C1668.4,392.9 1670.5,398.7 1672.6,398.7C1674.8,398.7 1676.9,396.8 1679.1,396.7C1681.2,396.6 1683.4,396.5 1685.5,396.5C1687.7,396.5 1689.8,397.8 1692.0,399.1C1694.1,400.4 1696.3,407.4 1698.4,407.4C1700.5,407.4 1702.7,400.6 1704.8,400.6C1707.0,400.6 1709.1,400.8 1711.3,400.8C1713.4,400.8 1715.6,389.8 1717.7,389.8C1719.9,389.8 1722.0,406.4 1724.2,406.4C1726.3,406.4 1728.4,402.0 1730.6,398.8C1732.7,395.6 1734.9,385.3 1737.0,385.3C1739.2,385.3 1741.3,392.0 1743.5,392.0C1745.6,392.0 1747.8,385.0 1749.9,385.0C1752.1,385.0 1754.2,396.5 1756.3,396.5C1758.5,396.5 1760.6,394.0 1762.8,394.0C1764.9,394.0 1767.1,396.7 1769.2,396.7C1771.4,396.7 1773.5,390.9 1775.7,390.9C1777.8,390.9 1779.9,398.6 1782.1,399.6C1784.2,400.6 1786.4,401.5 1788.5,401.5C1790.7,401.5 1792.8,389.2 1795.0,389.2C1797.1,389.2 1799.3,392.5 1801.4,392.6C1803.6,392.6 1805.7,392.6 1807.8,392.6C1810.0,392.7 1812.1,399.4 1814.3,400.5C1816.4,401.7 1818.6,402.7 1820.7,402.7C1822.9,402.7 1825.0,395.2 1827.2,395.2C1829.3,395.2 1831.5,399.5 1833.6,399.5C1835.7,399.5 1837.9,399.1 1840.0,398.7C1842.2,398.2 1844.3,394.8 1846.5,394.8C1848.6,394.8 1850.8,396.7 1852.9,398.6C1855.1,400.4 1857.2,409.4 1859.4,409.4C1861.5,409.4 1863.6,394.9 1865.8,394.9C1867.9,394.9 1870.1,395.9 1872.2,395.9C1874.4,395.9 1876.5,395.3 1878.7,394.4C1880.8,393.5 1883.0,386.2 1885.1,386.2C1887.2,386.2 1889.4,386.7 1891.5,386.7C1893.7,386.7 1895.8,382.4 1898.0,382.4C1900.1,382.4 1902.3,394.5 1904.4,394.5C1906.6,394.5 1908.7,385.7 1910.9,385.7C1913.0,385.7 1915.1,388.8 1917.3,390.6C1919.4,392.3 1921.6,396.2 1923.7,396.2C1925.9,396.2 1928.0,383.4 1930.2,383.4C1932.3,383.4 1934.5,388.6 1936.6,388.6C1938.8,388.6 1940.9,385.2 1943.0,385.2C1945.2,385.2 1947.3,390.1 1949.5,390.1C1951.6,390.1 1953.8,382.5 1955.9,382.5C1958.1,382.5 1960.2,390.0 1962.4,393.4C1964.5,396.8 1966.6,403.0 1968.8,403.0C1970.9,403.0 1973.1,399.9 1975.2,398.1C1977.4,396.2 1979.5,391.8 1981.7,391.8C1983.8,391.8 1986.0,398.8 1988.1,398.8C1990.3,398.8 1992.4,388.3 1994.5,388.3C1996.7,388.3 1998.8,396.5 2001.0,396.9C2003.1,397.3 2005.3,397.5 2007.4,397.5C2009.6,397.5 2011.7,385.5 2013.9,385.5C2016.0,385.5 2018.2,390.6 2020.3,390.6C2022.4,390.6 2024.6,383.0 2026.7,383.0C2028.9,383.0 2031.0,388.3 2033.2,388.3C2035.3,388.3 2037.5,387.3 2039.6,387.3C2041.8,387.3 2043.9,399.8 2046.1,399.8C2048.2,399.8 2050.3,390.3 2052.5,390.3C2054.6,390.3 2056.8,401.2 2058.9,401.2C2061.1,401.2 2063.2,396.9 2065.4,395.2C2067.5,393.6 2069.7,390.9 2071.8,390.9C2072.8,390.9 2073.7,391.2 2074.7,391.4" fill="none" stroke="#7ec475" stroke-width="1.5" stroke-linejoin="round"/><path d="M816.4,333.5C818.5,333.9 820.7,334.0 822.8,334.8C825.0,335.6 827.1,346.8 829.3,346.8C831.4,346.8 833.6,337.9 835.7,337.9C837.9,337.9 840.0,345.6 842.2,346.0C844.3,346.3 846.4,346.5 848.6,346.5C850.7,346.5 852.9,330.3 855.0,326.8C857.2,323.2 859.3,319.4 861.5,319.4C863.6,319.4 865.8,324.3 867.9,327.5C870.0,330.8 872.2,339.4 874.3,339.7C876.5,340.0 878.6,340.1 880.8,340.1C882.9,340.1 885.1,336.7 887.2,336.7C889.4,336.7 891.5,347.3 893.7,347.3C895.8,347.3 897.9,346.0 900.1,344.6C902.2,343.2 904.4,335.8 906.5,335.8C908.7,335.8 910.8,343.9 913.0,343.9C915.1,343.9 917.3,343.5 919.4,342.9C921.6,342.4 923.7,337.8 925.8,336.0C928.0,334.2 930.1,331.6 932.3,331.6C934.4,331.6 936.6,346.7 938.7,346.7C940.9,346.7 943.0,339.7 945.2,338.1C947.3,336.6 949.5,335.5 951.6,334.9C953.7,334.3 955.9,333.5 958.0,333.5C960.2,333.5 962.3,343.2 964.5,343.2C966.6,343.2 968.8,332.7 970.9,332.7C973.1,332.7 975.2,336.0 977.3,337.5C979.5,339.0 981.6,341.7 983.8,341.7C985.9,341.7 988.1,338.6 990.2,338.3C992.4,338.1 994.5,338.1 996.7,337.8C998.8,337.6 1001.0,334.5 1003.1,334.5C1005.2,334.5 1007.4,336.2 1009.5,337.3C1011.7,338.4 1013.8,341.0 1016.0,341.0C1018.1,341.0 1020.3,325.9 1022.4,325.9C1024.6,325.9 1026.7,330.3 1028.9,332.9C1031.0,335.5 1033.1,341.8 1035.3,341.8C1037.4,341.8 1039.6,336.0 1041.7,336.0C1043.9,336.0 1046.0,339.3 1048.2,339.6C1050.3,340.0 1052.5,340.2 1054.6,340.2C1056.8,340.2 1058.9,340.1 1061.0,339.8C1063.2,339.5 1065.3,319.0 1067.5,319.0C1069.6,319.0 1071.8,330.8 1073.9,333.9C1076.1,337.0 1078.2,340.7 1080.4,340.7C1082.5,340.7 1084.6,339.5 1086.8,339.5C1088.9,339.5 1091.1,340.0 1093.2,340.0C1095.4,340.0 1097.5,339.2 1099.7,338.1C1101.8,337.0 1104.0,325.5 1106.1,325.5C1108.3,325.5 1110.4,334.0 1112.5,334.8C1114.7,335.6 1116.8,335.4 1119.0,336.1C1121.1,336.9 1123.3,342.9 1125.4,342.9C1127.6,342.9 1129.7,341.5 1131.9,341.5C1134.0,341.5 1136.2,346.6 1138.3,346.6C1140.4,346.6 1142.6,339.5 1144.7,336.5C1146.9,333.6 1149.0,330.6 1151.2,328.8C1153.3,327.1 1155.5,324.9 1157.6,324.9C1159.8,324.9 1161.9,333.2 1164.1,333.2C1166.2,333.2 1168.3,328.2 1170.5,326.8C1172.6,325.4 1174.8,323.7 1176.9,323.7C1179.1,323.7 1181.2,341.9 1183.4,341.9C1185.5,341.9 1187.7,335.9 1189.8,335.9C1191.9,335.9 1194.1,336.1 1196.2,336.3C1198.4,336.5 1200.5,338.0 1202.7,339.0C1204.8,340.0 1207.0,342.6 1209.1,342.6C1211.3,342.6 1213.4,338.6 1215.6,338.6C1217.7,338.6 1219.8,343.1 1222.0,344.5C1224.1,345.8 1226.3,347.6 1228.4,347.6C1230.6,347.6 1232.7,347.5 1234.9,347.3C1237.0,347.2 1239.2,322.2 1241.3,322.2C1243.5,322.2 1245.6,339.8 1247.7,339.8C1249.9,339.8 1252.0,338.2 1254.2,337.5C1256.3,336.7 1258.5,335.7 1260.6,335.3C1262.8,334.9 1264.9,334.4 1267.1,334.4C1269.2,334.4 1271.3,336.6 1273.5,338.0C1275.6,339.4 1277.8,343.0 1279.9,343.0C1282.1,343.0 1284.2,327.6 1286.4,327.6C1288.5,327.6 1290.7,350.9 1292.8,350.9C1295.0,350.9 1297.1,348.0 1299.2,346.0C1301.4,344.0 1303.5,338.2 1305.7,338.2C1307.8,338.2 1310.0,347.0 1312.1,347.0C1314.3,347.0 1316.4,340.6 1318.6,338.2C1320.7,335.9 1322.9,332.4 1325.0,332.4C1327.1,332.4 1329.3,335.8 1331.4,338.7C1333.6,341.6 1335.7,352.4 1337.9,352.4C1340.0,352.4 1342.2,333.3 1344.3,333.3C1346.5,333.3 1348.6,352.4 1350.8,352.4C1352.9,352.4 1355.0,326.0 1357.2,326.0C1359.3,326.0 1361.5,345.7 1363.6,345.7C1365.8,345.7 1367.9,331.5 1370.1,331.5C1372.2,331.5 1374.4,343.5 1376.5,344.4C1378.6,345.2 1380.8,345.8 1382.9,345.8C1385.1,345.8 1387.2,344.2 1389.4,342.2C1391.5,340.2 1393.7,323.1 1395.8,323.1C1398.0,323.1 1400.1,337.9 1402.3,338.1C1404.4,338.3 1406.5,338.2 1408.7,338.3C1410.8,338.5 1413.0,346.7 1415.1,346.7C1417.3,346.7 1419.4,341.1 1421.6,338.6C1423.7,336.1 1425.9,331.6 1428.0,331.6C1430.2,331.6 1432.3,336.1 1434.4,336.1C1436.6,336.1 1438.7,329.0 1440.9,326.7C1443.0,324.5 1445.2,321.6 1447.3,321.6C1449.5,321.6 1451.6,337.9 1453.8,340.1C1455.9,342.2 1458.1,343.9 1460.2,343.9C1462.3,343.9 1464.5,343.5 1466.6,342.9C1468.8,342.3 1470.9,330.0 1473.1,330.0C1475.2,330.0 1477.4,341.0 1479.5,341.0C1481.7,341.0 1483.8,339.2 1485.9,337.5C1488.1,335.8 1490.2,327.6 1492.4,327.6C1494.5,327.6 1496.7,336.0 1498.8,336.0C1501.0,336.0 1503.1,332.9 1505.3,332.9C1507.4,332.9 1509.6,336.5 1511.7,336.5C1513.8,336.5 1516.0,333.8 1518.1,333.8C1520.3,333.8 1522.4,334.5 1524.6,335.0C1526.7,335.5 1528.9,336.8 1531.0,336.8C1533.2,336.8 1535.3,331.5 1537.5,331.5C1539.6,331.5 1541.7,331.9 1543.9,332.3C1546.0,332.8 1548.2,335.5 1550.3,335.5C1580.4,335.5 1610.4,326.5 1640.5,326.5C1642.6,326.5 1644.8,329.5 1646.9,332.1C1649.0,334.8 1651.2,345.7 1653.3,345.7C1655.5,345.7 1657.6,341.9 1659.8,339.2C1661.9,336.4 1664.1,328.1 1666.2,328.1C1668.4,328.1 1670.5,343.6 1672.6,343.6C1674.8,343.6 1676.9,329.4 1679.1,329.4C1681.2,329.4 1683.4,341.2 1685.5,341.2C1687.7,341.2 1689.8,334.9 1692.0,334.9C1694.1,334.9 1696.3,335.0 1698.4,335.2C1700.5,335.4 1702.7,349.7 1704.8,349.7C1707.0,349.7 1709.1,330.8 1711.3,330.8C1713.4,330.8 1715.6,331.6 1717.7,332.0C1719.9,332.4 1722.0,332.8 1724.2,333.4C1726.3,333.9 1728.4,334.4 1730.6,335.3C1732.7,336.2 1734.9,337.5 1737.0,340.1C1739.2,342.7 1741.3,359.4 1743.5,359.4C1745.6,359.4 1747.8,342.0 1749.9,338.4C1752.1,334.8 1754.2,331.1 1756.3,331.1C1758.5,331.1 1760.6,346.3 1762.8,346.3C1764.9,346.3 1767.1,345.9 1769.2,345.2C1771.4,344.6 1773.5,335.0 1775.7,335.0C1777.8,335.0 1779.9,339.1 1782.1,339.1C1784.2,339.1 1786.4,332.4 1788.5,332.2C1790.7,332.0 1792.8,331.9 1795.0,331.9C1797.1,331.9 1799.3,344.0 1801.4,344.0C1803.6,344.0 1805.7,331.8 1807.8,331.1C1810.0,330.5 1812.1,330.1 1814.3,330.1C1816.4,330.1 1818.6,340.2 1820.7,340.2C1822.9,340.2 1825.0,339.7 1827.2,339.7C1829.3,339.7 1831.5,350.2 1833.6,350.2C1835.7,350.2 1837.9,338.4 1840.0,334.0C1842.2,329.6 1844.3,322.9 1846.5,322.9C1848.6,322.9 1850.8,349.5 1852.9,349.5C1855.1,349.5 1857.2,342.9 1859.4,340.3C1861.5,337.7 1863.6,333.5 1865.8,333.5C1867.9,333.5 1870.1,340.1 1872.2,342.6C1874.4,345.0 1876.5,347.3 1878.7,348.8C1880.8,350.3 1883.0,352.4 1885.1,352.4C1887.2,352.4 1889.4,340.6 1891.5,339.2C1893.7,337.8 1895.8,337.8 1898.0,336.7C1900.1,335.5 1902.3,330.7 1904.4,330.7C1906.6,330.7 1908.7,338.7 1910.9,341.4C1913.0,344.1 1915.1,347.9 1917.3,347.9C1919.4,347.9 1921.6,338.7 1923.7,338.7C1925.9,338.7 1928.0,346.9 1930.2,346.9C1932.3,346.9 1934.5,342.6 1936.6,342.6C1938.8,342.6 1940.9,349.8 1943.0,349.8C1945.2,349.8 1947.3,342.2 1949.5,342.2C1951.6,342.2 1953.8,352.7 1955.9,352.7C1958.1,352.7 1960.2,343.6 1962.4,338.8C1964.5,334.1 1966.6,323.9 1968.8,323.9C1970.9,323.9 1973.1,341.4 1975.2,341.4C1977.4,341.4 1979.5,332.7 1981.7,331.9C1983.8,331.2 1986.0,331.1 1988.1,330.7C1990.3,330.2 1992.4,329.2 1994.5,329.2C1996.7,329.2 1998.8,346.8 2001.0,346.8C2003.1,346.8 2005.3,345.6 2007.4,344.5C2009.6,343.4 2011.7,338.9 2013.9,338.2C2016.0,337.5 2018.2,337.1 2020.3,337.0C2022.4,336.9 2024.6,336.9 2026.7,336.9C2028.9,336.8 2031.0,322.2 2033.2,322.2C2035.3,322.2 2037.5,341.7 2039.6,341.7C2041.8,341.7 2043.9,332.4 2046.1,332.3C2048.2,332.2 2050.3,332.1 2052.5,332.1C2054.6,332.1 2056.8,343.5 2058.9,343.5C2061.1,343.5 2063.2,337.8 2065.4,336.6C2067.5,335.4 2069.7,334.2 2071.8,334.2C2072.8,334.2 2073.7,335.3 2074.7,335.9" fill="none" stroke="#e8cc44" stroke-width="1.5" stroke-linejoin="round"/></svg>
<div class="t" style="left:760.20px;top:295.43px;font-size:15.90px;color:#ccccdc;letter-spacing:0.868px;-webkit-text-stroke:0.2px #ccccdc">400 W</div>
<div class="t" style="left:760.20px;top:345.39px;font-size:15.90px;color:#ccccdc;letter-spacing:0.868px;-webkit-text-stroke:0.2px #ccccdc">350 W</div>
<div class="t" style="left:760.20px;top:395.35px;font-size:15.90px;color:#ccccdc;letter-spacing:0.868px;-webkit-text-stroke:0.2px #ccccdc">300 W</div>
<div class="t" style="left:760.20px;top:445.31px;font-size:15.90px;color:#ccccdc;letter-spacing:0.868px;-webkit-text-stroke:0.2px #ccccdc">250 W</div>
<div class="t" style="left:760.20px;top:495.27px;font-size:15.90px;color:#ccccdc;letter-spacing:0.868px;-webkit-text-stroke:0.2px #ccccdc">200 W</div>
<div class="t" style="left:760.20px;top:545.23px;font-size:15.90px;color:#ccccdc;letter-spacing:0.868px;-webkit-text-stroke:0.2px #ccccdc">150 W</div>
<div class="t" style="left:760.20px;top:595.19px;font-size:15.90px;color:#ccccdc;letter-spacing:0.868px;-webkit-text-stroke:0.2px #ccccdc">100 W</div>
<div class="t" style="left:769.91px;top:645.15px;font-size:15.90px;color:#ccccdc;letter-spacing:0.868px;-webkit-text-stroke:0.2px #ccccdc">50 W</div>
<div class="t" style="left:779.61px;top:695.11px;font-size:15.90px;color:#ccccdc;letter-spacing:0.868px;-webkit-text-stroke:0.2px #ccccdc">0 W</div>
<div class="t" style="left:879.65px;top:713.64px;font-size:17.19px;color:#ccccdc;letter-spacing:0.212px;-webkit-text-stroke:0.2px #ccccdc">20:00</div>
<div class="t" style="left:976.22px;top:713.64px;font-size:17.19px;color:#ccccdc;letter-spacing:0.212px;-webkit-text-stroke:0.2px #ccccdc">20:15</div>
<div class="t" style="left:1072.79px;top:713.64px;font-size:17.19px;color:#ccccdc;letter-spacing:0.212px;-webkit-text-stroke:0.2px #ccccdc">20:30</div>
<div class="t" style="left:1169.36px;top:713.64px;font-size:17.19px;color:#ccccdc;letter-spacing:0.212px;-webkit-text-stroke:0.2px #ccccdc">20:45</div>
<div class="t" style="left:1265.93px;top:713.64px;font-size:17.19px;color:#ccccdc;letter-spacing:0.212px;-webkit-text-stroke:0.2px #ccccdc">21:00</div>
<div class="t" style="left:1362.50px;top:713.64px;font-size:17.19px;color:#ccccdc;letter-spacing:0.212px;-webkit-text-stroke:0.2px #ccccdc">21:15</div>
<div class="t" style="left:1459.07px;top:713.64px;font-size:17.19px;color:#ccccdc;letter-spacing:0.212px;-webkit-text-stroke:0.2px #ccccdc">21:30</div>
<div class="t" style="left:1555.64px;top:713.64px;font-size:17.19px;color:#ccccdc;letter-spacing:0.212px;-webkit-text-stroke:0.2px #ccccdc">21:45</div>
<div class="t" style="left:1652.21px;top:713.64px;font-size:17.19px;color:#ccccdc;letter-spacing:0.212px;-webkit-text-stroke:0.2px #ccccdc">22:00</div>
<div class="t" style="left:1748.78px;top:713.64px;font-size:17.19px;color:#ccccdc;letter-spacing:0.212px;-webkit-text-stroke:0.2px #ccccdc">22:15</div>
<div class="t" style="left:1845.35px;top:713.64px;font-size:17.19px;color:#ccccdc;letter-spacing:0.212px;-webkit-text-stroke:0.2px #ccccdc">22:30</div>
<div class="t" style="left:1941.92px;top:713.64px;font-size:17.19px;color:#ccccdc;letter-spacing:0.212px;-webkit-text-stroke:0.2px #ccccdc">22:45</div>
<div class="t" style="left:2038.49px;top:713.64px;font-size:17.19px;color:#ccccdc;letter-spacing:0.212px;-webkit-text-stroke:0.2px #ccccdc">23:00</div>
<div style="position:absolute;left:2084px;top:292px;width:382px;height:1px;background:#26272c;"></div>
<div style="position:absolute;left:2084px;top:323px;width:382px;height:1px;background:#26272c;"></div>
<div style="position:absolute;left:2084px;top:353px;width:382px;height:1px;background:#26272c;"></div>
<div class="t" style="left:2122.30px;top:268.42px;font-size:16.86px;color:#6e9fff;letter-spacing:0.101px;-webkit-text-stroke:0.45px #6e9fff">Name</div>
<div class="t" style="left:2251.00px;top:268.42px;font-size:16.86px;color:#6e9fff;letter-spacing:0.290px;-webkit-text-stroke:0.45px #6e9fff">Last *</div>
<div class="t" style="left:2346.00px;top:268.42px;font-size:16.86px;color:#6e9fff;letter-spacing:0.505px;-webkit-text-stroke:0.45px #6e9fff">Min</div>
<div class="t" style="left:2423.00px;top:268.42px;font-size:16.86px;color:#6e9fff;transform:scaleX(0.9962);transform-origin:0 0;-webkit-text-stroke:0.45px #6e9fff">Max</div>
<div style="position:absolute;left:2095px;top:305.1px;width:18px;height:5.5px;border-radius:3px;background:#7ec475"></div>
<div class="t" style="left:2122.36px;top:298.80px;font-size:17.59px;color:#ccccdc;transform:scaleX(0.9418);transform-origin:0 0;-webkit-text-stroke:0.2px #ccccdc">Fan Tray 0</div>
<div class="t" style="left:2251.20px;top:299.02px;font-size:17.34px;color:#ccccdc;transform:scaleX(0.8990);transform-origin:0 0;-webkit-text-stroke:0.2px #ccccdc">312 W</div>
<div class="t" style="left:2328.30px;top:299.02px;font-size:17.34px;color:#ccccdc;transform:scaleX(0.8990);transform-origin:0 0;-webkit-text-stroke:0.2px #ccccdc">294 W</div>
<div class="t" style="left:2409.70px;top:299.02px;font-size:17.34px;color:#ccccdc;transform:scaleX(0.8990);transform-origin:0 0;-webkit-text-stroke:0.2px #ccccdc">324 W</div>
<div style="position:absolute;left:2095px;top:335.8px;width:18px;height:5.5px;border-radius:3px;background:#e8cc44"></div>
<div class="t" style="left:2122.36px;top:329.50px;font-size:17.59px;color:#ccccdc;transform:scaleX(0.9411);transform-origin:0 0;-webkit-text-stroke:0.2px #ccccdc">Fan Tray 1</div>
<div class="t" style="left:2251.20px;top:329.72px;font-size:17.34px;color:#ccccdc;transform:scaleX(0.8990);transform-origin:0 0;-webkit-text-stroke:0.2px #ccccdc">368 W</div>
<div class="t" style="left:2328.30px;top:329.72px;font-size:17.34px;color:#ccccdc;transform:scaleX(0.8990);transform-origin:0 0;-webkit-text-stroke:0.2px #ccccdc">343 W</div>
<div class="t" style="left:2409.70px;top:329.72px;font-size:17.34px;color:#ccccdc;transform:scaleX(0.8990);transform-origin:0 0;-webkit-text-stroke:0.2px #ccccdc">386 W</div>
<div style="position:absolute;left:187.2px;top:805.3px;width:848.4px;height:19.5px;background:#24252a;border-radius:3px"></div>
<div style="position:absolute;left:187.2px;top:805.3px;width:407.3px;height:19.5px;background:#84c077;border-radius:3px"></div>
<div class="t" style="left:49.51px;top:805.95px;font-size:17.30px;color:#ccccdc;transform:scaleX(0.9482);transform-origin:0 0;-webkit-text-stroke:0.2px #ccccdc">Fan Tray 0 Fan 0</div>
<div class="t" style="left:1136.20px;top:805.10px;font-size:21.49px;color:#84c077;transform:scaleX(0.9436);transform-origin:0 0;-webkit-text-stroke:0.2px #84c077">5250 rpm</div>
<div style="position:absolute;left:187.2px;top:837.8px;width:848.4px;height:19.5px;background:#24252a;border-radius:3px"></div>
<div style="position:absolute;left:187.2px;top:837.8px;width:465.5px;height:19.5px;background:linear-gradient(90deg,#84c077 0%,#84c077 50%,#b3cf68 78%,#f5df57 100%);border-radius:3px"></div>
<div class="t" style="left:49.51px;top:838.41px;font-size:17.30px;color:#ccccdc;transform:scaleX(0.9482);transform-origin:0 0;-webkit-text-stroke:0.2px #ccccdc">Fan Tray 0 Fan 1</div>
<div class="t" style="left:1136.26px;top:837.56px;font-size:21.49px;color:#f5df57;transform:scaleX(0.9430);transform-origin:0 0;-webkit-text-stroke:0.2px #f5df57">6000 rpm</div>
<div style="position:absolute;left:187.2px;top:870.2px;width:848.4px;height:19.5px;background:#24252a;border-radius:3px"></div>
<div style="position:absolute;left:187.2px;top:870.2px;width:395.7px;height:19.5px;background:#84c077;border-radius:3px"></div>
<div class="t" style="left:40.35px;top:870.87px;font-size:17.30px;color:#ccccdc;transform:scaleX(0.9485);transform-origin:0 0;-webkit-text-stroke:0.2px #ccccdc">Fan Tray 0 Fan 10</div>
<div class="t" style="left:1136.20px;top:870.02px;font-size:21.49px;color:#84c077;transform:scaleX(0.9436);transform-origin:0 0;-webkit-text-stroke:0.2px #84c077">5100 rpm</div>
<div style="position:absolute;left:187.2px;top:902.7px;width:848.4px;height:19.5px;background:#24252a;border-radius:3px"></div>
<div style="position:absolute;left:187.2px;top:902.7px;width:465.5px;height:19.5px;background:linear-gradient(90deg,#84c077 0%,#84c077 50%,#b3cf68 78%,#f5df57 100%);border-radius:3px"></div>
<div class="t" style="left:41.64px;top:903.33px;font-size:17.30px;color:#ccccdc;transform:scaleX(0.9480);transform-origin:0 0;-webkit-text-stroke:0.2px #ccccdc">Fan Tray 0 Fan 11</div>
<div class="t" style="left:1136.26px;top:902.48px;font-size:21.49px;color:#f5df57;transform:scaleX(0.9430);transform-origin:0 0;-webkit-text-stroke:0.2px #f5df57">6000 rpm</div>
<div style="position:absolute;left:187.2px;top:935.1px;width:848.4px;height:19.5px;background:#24252a;border-radius:3px"></div>
<div style="position:absolute;left:187.2px;top:935.1px;width:384.0px;height:19.5px;background:#84c077;border-radius:3px"></div>
<div class="t" style="left:40.35px;top:935.79px;font-size:17.30px;color:#ccccdc;transform:scaleX(0.9485);transform-origin:0 0;-webkit-text-stroke:0.2px #ccccdc">Fan Tray 0 Fan 12</div>
<div class="t" style="left:1136.20px;top:934.94px;font-size:21.49px;color:#84c077;transform:scaleX(0.9436);transform-origin:0 0;-webkit-text-stroke:0.2px #84c077">4950 rpm</div>
<div style="position:absolute;left:187.2px;top:967.6px;width:848.4px;height:19.5px;background:#24252a;border-radius:3px"></div>
<div style="position:absolute;left:187.2px;top:967.6px;width:453.9px;height:19.5px;background:#84c077;border-radius:3px"></div>
<div class="t" style="left:40.35px;top:968.25px;font-size:17.30px;color:#ccccdc;transform:scaleX(0.9485);transform-origin:0 0;-webkit-text-stroke:0.2px #ccccdc">Fan Tray 0 Fan 13</div>
<div class="t" style="left:1136.20px;top:967.40px;font-size:21.49px;color:#84c077;transform:scaleX(0.9436);transform-origin:0 0;-webkit-text-stroke:0.2px #84c077">5850 rpm</div>
<div style="position:absolute;left:187.2px;top:1000.1px;width:848.4px;height:19.5px;background:#24252a;border-radius:3px"></div>
<div style="position:absolute;left:187.2px;top:1000.1px;width:395.7px;height:19.5px;background:#84c077;border-radius:3px"></div>
<div class="t" style="left:39.35px;top:1000.71px;font-size:17.30px;color:#ccccdc;transform:scaleX(0.9489);transform-origin:0 0;-webkit-text-stroke:0.2px #ccccdc">Fan Tray 0 Fan 14</div>
<div class="t" style="left:1136.20px;top:999.86px;font-size:21.49px;color:#84c077;transform:scaleX(0.9436);transform-origin:0 0;-webkit-text-stroke:0.2px #84c077">5100 rpm</div>
<div style="position:absolute;left:187.2px;top:1032.5px;width:848.4px;height:19.5px;background:#24252a;border-radius:3px"></div>
<div style="position:absolute;left:187.2px;top:1032.5px;width:465.5px;height:19.5px;background:linear-gradient(90deg,#84c077 0%,#84c077 50%,#b3cf68 78%,#f5df57 100%);border-radius:3px"></div>
<div class="t" style="left:40.35px;top:1033.17px;font-size:17.30px;color:#ccccdc;transform:scaleX(0.9485);transform-origin:0 0;-webkit-text-stroke:0.2px #ccccdc">Fan Tray 0 Fan 15</div>
<div class="t" style="left:1136.26px;top:1032.32px;font-size:21.49px;color:#f5df57;transform:scaleX(0.9430);transform-origin:0 0;-webkit-text-stroke:0.2px #f5df57">6000 rpm</div>
<div style="position:absolute;left:187.2px;top:1065.0px;width:848.4px;height:19.5px;background:#24252a;border-radius:3px"></div>
<div style="position:absolute;left:187.2px;top:1065.0px;width:395.7px;height:19.5px;background:#84c077;border-radius:3px"></div>
<div class="t" style="left:40.35px;top:1065.63px;font-size:17.30px;color:#ccccdc;transform:scaleX(0.9485);transform-origin:0 0;-webkit-text-stroke:0.2px #ccccdc">Fan Tray 0 Fan 16</div>
<div class="t" style="left:1136.20px;top:1064.78px;font-size:21.49px;color:#84c077;transform:scaleX(0.9436);transform-origin:0 0;-webkit-text-stroke:0.2px #84c077">5100 rpm</div>
<div style="position:absolute;left:187.2px;top:1097.4px;width:848.4px;height:19.5px;background:#24252a;border-radius:3px"></div>
<div style="position:absolute;left:187.2px;top:1097.4px;width:465.5px;height:19.5px;background:linear-gradient(90deg,#84c077 0%,#84c077 50%,#b3cf68 78%,#f5df57 100%);border-radius:3px"></div>
<div class="t" style="left:40.35px;top:1098.09px;font-size:17.30px;color:#ccccdc;transform:scaleX(0.9485);transform-origin:0 0;-webkit-text-stroke:0.2px #ccccdc">Fan Tray 0 Fan 17</div>
<div class="t" style="left:1136.26px;top:1097.24px;font-size:21.49px;color:#f5df57;transform:scaleX(0.9430);transform-origin:0 0;-webkit-text-stroke:0.2px #f5df57">6000 rpm</div>
<div style="position:absolute;left:187.2px;top:1129.9px;width:848.4px;height:19.5px;background:#24252a;border-radius:3px"></div>
<div style="position:absolute;left:187.2px;top:1129.9px;width:395.7px;height:19.5px;background:#84c077;border-radius:3px"></div>
<div class="t" style="left:40.35px;top:1130.55px;font-size:17.30px;color:#ccccdc;transform:scaleX(0.9485);transform-origin:0 0;-webkit-text-stroke:0.2px #ccccdc">Fan Tray 0 Fan 18</div>
<div class="t" style="left:1136.20px;top:1129.70px;font-size:21.49px;color:#84c077;transform:scaleX(0.9436);transform-origin:0 0;-webkit-text-stroke:0.2px #84c077">5100 rpm</div>
<div style="position:absolute;left:187.2px;top:1162.4px;width:848.4px;height:19.5px;background:#24252a;border-radius:3px"></div>
<div style="position:absolute;left:187.2px;top:1162.4px;width:453.9px;height:19.5px;background:#84c077;border-radius:3px"></div>
<div class="t" style="left:40.35px;top:1163.01px;font-size:17.30px;color:#ccccdc;transform:scaleX(0.9485);transform-origin:0 0;-webkit-text-stroke:0.2px #ccccdc">Fan Tray 0 Fan 19</div>
<div class="t" style="left:1136.20px;top:1162.16px;font-size:21.49px;color:#84c077;transform:scaleX(0.9436);transform-origin:0 0;-webkit-text-stroke:0.2px #84c077">5850 rpm</div>
<div style="position:absolute;left:187.2px;top:1194.8px;width:848.4px;height:19.5px;background:#24252a;border-radius:3px"></div>
<div style="position:absolute;left:187.2px;top:1194.8px;width:395.7px;height:19.5px;background:#84c077;border-radius:3px"></div>
<div class="t" style="left:49.51px;top:1195.47px;font-size:17.30px;color:#ccccdc;transform:scaleX(0.9482);transform-origin:0 0;-webkit-text-stroke:0.2px #ccccdc">Fan Tray 0 Fan 2</div>
<div class="t" style="left:1136.20px;top:1194.62px;font-size:21.49px;color:#84c077;transform:scaleX(0.9436);transform-origin:0 0;-webkit-text-stroke:0.2px #84c077">5100 rpm</div>
<div style="position:absolute;left:187.2px;top:1227.3px;width:848.4px;height:19.5px;background:#24252a;border-radius:3px"></div>
<div style="position:absolute;left:187.2px;top:1227.3px;width:384.0px;height:19.5px;background:#84c077;border-radius:3px"></div>
<div class="t" style="left:40.35px;top:1227.93px;font-size:17.30px;color:#ccccdc;transform:scaleX(0.9485);transform-origin:0 0;-webkit-text-stroke:0.2px #ccccdc">Fan Tray 0 Fan 20</div>
<div class="t" style="left:1136.20px;top:1227.08px;font-size:21.49px;color:#84c077;transform:scaleX(0.9436);transform-origin:0 0;-webkit-text-stroke:0.2px #84c077">4950 rpm</div>
<div style="position:absolute;left:187.2px;top:1259.7px;width:848.4px;height:19.5px;background:#24252a;border-radius:3px"></div>
<div style="position:absolute;left:187.2px;top:1259.7px;width:453.9px;height:19.5px;background:#84c077;border-radius:3px"></div>
<div class="t" style="left:40.35px;top:1260.39px;font-size:17.30px;color:#ccccdc;transform:scaleX(0.9485);transform-origin:0 0;-webkit-text-stroke:0.2px #ccccdc">Fan Tray 0 Fan 21</div>
<div class="t" style="left:1136.20px;top:1259.54px;font-size:21.49px;color:#84c077;transform:scaleX(0.9436);transform-origin:0 0;-webkit-text-stroke:0.2px #84c077">5850 rpm</div>
<div style="position:absolute;left:187.2px;top:1292.2px;width:848.4px;height:19.5px;background:#24252a;border-radius:3px"></div>
<div style="position:absolute;left:187.2px;top:1292.2px;width:395.7px;height:19.5px;background:#84c077;border-radius:3px"></div>
<div class="t" style="left:40.35px;top:1292.85px;font-size:17.30px;color:#ccccdc;transform:scaleX(0.9485);transform-origin:0 0;-webkit-text-stroke:0.2px #ccccdc">Fan Tray 0 Fan 22</div>
<div class="t" style="left:1136.20px;top:1292.00px;font-size:21.49px;color:#84c077;transform:scaleX(0.9436);transform-origin:0 0;-webkit-text-stroke:0.2px #84c077">5100 rpm</div>
<div style="position:absolute;left:187.2px;top:1324.7px;width:848.4px;height:19.5px;background:#24252a;border-radius:3px"></div>
<div style="position:absolute;left:187.2px;top:1324.7px;width:453.9px;height:19.5px;background:#84c077;border-radius:3px"></div>
<div class="t" style="left:40.35px;top:1325.31px;font-size:17.30px;color:#ccccdc;transform:scaleX(0.9485);transform-origin:0 0;-webkit-text-stroke:0.2px #ccccdc">Fan Tray 0 Fan 23</div>
<div class="t" style="left:1136.20px;top:1324.46px;font-size:21.49px;color:#84c077;transform:scaleX(0.9436);transform-origin:0 0;-webkit-text-stroke:0.2px #84c077">5850 rpm</div>
<div style="position:absolute;left:187.2px;top:1357.1px;width:848.4px;height:19.5px;background:#24252a;border-radius:3px"></div>
<div style="position:absolute;left:187.2px;top:1357.1px;width:372.4px;height:19.5px;background:#84c077;border-radius:3px"></div>
<div class="t" style="left:39.35px;top:1357.77px;font-size:17.30px;color:#ccccdc;transform:scaleX(0.9489);transform-origin:0 0;-webkit-text-stroke:0.2px #ccccdc">Fan Tray 0 Fan 24</div>
<div class="t" style="left:1136.20px;top:1356.92px;font-size:21.49px;color:#84c077;transform:scaleX(0.9436);transform-origin:0 0;-webkit-text-stroke:0.2px #84c077">4800 rpm</div>
<div style="position:absolute;left:1226px;top:806px;width:9px;height:216px;background:#4a4b52;border-radius:5px"></div>
<svg style="left:0;top:0" width="2507" height="1392" viewBox="0 0 2507 1392"><line x1="1352.9" y1="848.5" x2="2175.2" y2="848.5" stroke="rgba(204,204,220,0.085)" stroke-width="1"/><line x1="1352.9" y1="901.5" x2="2175.2" y2="901.5" stroke="rgba(204,204,220,0.085)" stroke-width="1"/><line x1="1352.9" y1="955.5" x2="2175.2" y2="955.5" stroke="rgba(204,204,220,0.085)" stroke-width="1"/><line x1="1352.9" y1="1008.5" x2="2175.2" y2="1008.5" stroke="rgba(204,204,220,0.085)" stroke-width="1"/><line x1="1352.9" y1="1061.5" x2="2175.2" y2="1061.5" stroke="rgba(204,204,220,0.085)" stroke-width="1"/><line x1="1352.9" y1="1115.5" x2="2175.2" y2="1115.5" stroke="rgba(204,204,220,0.085)" stroke-width="1"/><line x1="1352.9" y1="1168.5" x2="2175.2" y2="1168.5" stroke="rgba(204,204,220,0.085)" stroke-width="1"/><line x1="1352.9" y1="1222.5" x2="2175.2" y2="1222.5" stroke="rgba(204,204,220,0.085)" stroke-width="1"/><line x1="1352.9" y1="1275.5" x2="2175.2" y2="1275.5" stroke="rgba(204,204,220,0.085)" stroke-width="1"/><line x1="1352.9" y1="1328.5" x2="2175.2" y2="1328.5" stroke="rgba(204,204,220,0.085)" stroke-width="1"/><line x1="1352.9" y1="1382.5" x2="2175.2" y2="1382.5" stroke="rgba(204,204,220,0.085)" stroke-width="1"/><line x1="1408.5" y1="816.9" x2="1408.5" y2="1400" stroke="rgba(204,204,220,0.085)" stroke-width="1"/><line x1="1534.5" y1="816.9" x2="1534.5" y2="1400" stroke="rgba(204,204,220,0.085)" stroke-width="1"/><line x1="1660.5" y1="816.9" x2="1660.5" y2="1400" stroke="rgba(204,204,220,0.085)" stroke-width="1"/><line x1="1787.5" y1="816.9" x2="1787.5" y2="1400" stroke="rgba(204,204,220,0.085)" stroke-width="1"/><line x1="1913.5" y1="816.9" x2="1913.5" y2="1400" stroke="rgba(204,204,220,0.085)" stroke-width="1"/><line x1="2039.5" y1="816.9" x2="2039.5" y2="1400" stroke="rgba(204,204,220,0.085)" stroke-width="1"/><line x1="2165.5" y1="816.9" x2="2165.5" y2="1400" stroke="rgba(204,204,220,0.085)" stroke-width="1"/><path d="M1352.9,949.7h4.2c1.4,0 2.8,-16.0 4.2,-16.0c1.4,0 2.8,16.0 4.2,16.0c1.4,0 2.8,-16.0 4.2,-16.0h25.2c1.4,0 2.8,16.0 4.2,16.0h8.4c1.4,0 2.8,-16.0 4.2,-16.0h8.4c1.4,0 2.8,16.0 4.2,16.0h21.0c1.4,0 2.8,-16.0 4.2,-16.0h25.2c1.4,0 2.8,16.0 4.2,16.0c1.4,0 2.8,-16.0 4.2,-16.0h8.4c1.4,0 2.8,16.0 4.2,16.0h8.4c1.4,0 2.8,-16.0 4.2,-16.0h4.2c1.4,0 2.8,16.0 4.2,16.0h8.4c1.4,0 2.8,-16.0 4.2,-16.0h4.2c1.4,0 2.8,16.0 4.2,16.0c1.4,0 2.8,-16.0 4.2,-16.0c1.4,0 2.8,16.0 4.2,16.0c1.4,0 2.8,-16.0 4.2,-16.0c1.4,0 2.8,16.0 4.2,16.0c1.4,0 2.8,-16.0 4.2,-16.0h4.2c1.4,0 2.8,16.0 4.2,16.0h4.2c1.4,0 2.8,-16.0 4.2,-16.0c1.4,0 2.8,16.0 4.2,16.0c1.4,0 2.8,-16.0 4.2,-16.0c1.4,0 2.8,16.0 4.2,16.0h8.4c1.4,0 2.8,-16.0 4.2,-16.0c1.4,0 2.8,16.0 4.2,16.0h4.2c1.4,0 2.8,-16.0 4.2,-16.0c1.4,0 2.8,16.0 4.2,16.0h8.4c1.4,0 2.8,-16.0 4.2,-16.0h4.2c1.4,0 2.8,16.0 4.2,16.0h4.2c1.4,0 2.8,-16.0 4.2,-16.0h46.3c1.4,0 2.8,16.0 4.2,16.0c1.4,0 2.8,-16.0 4.2,-16.0c1.4,0 2.8,16.0 4.2,16.0c1.4,0 2.8,-16.0 4.2,-16.0h4.2c1.4,0 2.8,16.0 4.2,16.0h4.2c1.4,0 2.8,-16.0 4.2,-16.0h12.6c1.4,0 2.8,16.0 4.2,16.0h8.4c1.4,0 2.8,-16.0 4.2,-16.0c1.4,0 2.8,16.0 4.2,16.0h12.6c1.4,0 2.8,-16.0 4.2,-16.0c1.4,0 2.8,16.0 4.2,16.0h4.2c1.4,0 2.8,-16.0 4.2,-16.0c1.4,0 2.8,16.0 4.2,16.0h25.2c1.4,0 2.8,-16.0 4.2,-16.0h105.2c1.4,0 2.8,16.0 4.2,16.0h4.2c1.4,0 2.8,-16.0 4.2,-16.0c1.4,0 2.8,16.0 4.2,16.0h21.0c1.4,0 2.8,-16.0 4.2,-16.0h4.2c1.4,0 2.8,16.0 4.2,16.0c1.4,0 2.8,-16.0 4.2,-16.0h21.0c1.4,0 2.8,16.0 4.2,16.0h8.4c1.4,0 2.8,-16.0 4.2,-16.0c1.4,0 2.8,16.0 4.2,16.0h21.0c1.4,0 2.8,-16.0 4.2,-16.0c1.4,0 2.8,16.0 4.2,16.0h12.6c1.4,0 2.8,-16.0 4.2,-16.0h4.2c1.4,0 2.8,16.0 4.2,16.0c1.4,0 2.8,-16.0 4.2,-16.0h42.1c1.4,0 2.8,16.0 4.2,16.0h4.2c1.4,0 2.8,-16.0 4.2,-16.0c1.4,0 2.8,16.0 4.2,16.0h4.2c1.4,0 2.8,-16.0 4.2,-16.0h4.2c1.4,0 2.8,16.0 4.2,16.0h4.2c1.4,0 2.8,-16.0 4.2,-16.0h4.2" fill="none" stroke="#f39898" stroke-width="1.3"/><path d="M1352.9,885.6h8.4c1.4,0 2.8,16.0 4.2,16.0c1.4,0 2.8,-16.0 4.2,-16.0h4.2c1.4,0 2.8,16.0 4.2,16.0h21.0c1.4,0 2.8,-16.0 4.2,-16.0h4.2c1.4,0 2.8,16.0 4.2,16.0h8.4c1.4,0 2.8,-16.0 4.2,-16.0c1.4,0 2.8,16.0 4.2,16.0c1.4,0 2.8,-16.0 4.2,-16.0h4.2c1.4,0 2.8,16.0 4.2,16.0h8.4c1.4,0 2.8,-16.0 4.2,-16.0h4.2c1.4,0 2.8,16.0 4.2,16.0c1.4,0 2.8,-16.0 4.2,-16.0h4.2c1.4,0 2.8,16.0 4.2,16.0h8.4c1.4,0 2.8,-16.0 4.2,-16.0h4.2c1.4,0 2.8,16.0 4.2,16.0h4.2c1.4,0 2.8,-16.0 4.2,-16.0c1.4,0 2.8,16.0 4.2,16.0h8.4c1.4,0 2.8,-16.0 4.2,-16.0c1.4,0 2.8,16.0 4.2,16.0h12.6c1.4,0 2.8,-16.0 4.2,-16.0h4.2c1.4,0 2.8,16.0 4.2,16.0c1.4,0 2.8,-16.0 4.2,-16.0c1.4,0 2.8,16.0 4.2,16.0h4.2c1.4,0 2.8,-16.0 4.2,-16.0h4.2c1.4,0 2.8,16.0 4.2,16.0h42.1c1.4,0 2.8,-16.0 4.2,-16.0c1.4,0 2.8,16.0 4.2,16.0c1.4,0 2.8,-16.0 4.2,-16.0c1.4,0 2.8,16.0 4.2,16.0h12.6c1.4,0 2.8,-16.0 4.2,-16.0h21.0c1.4,0 2.8,16.0 4.2,16.0c1.4,0 2.8,-16.0 4.2,-16.0c1.4,0 2.8,16.0 4.2,16.0c1.4,0 2.8,-16.0 4.2,-16.0h8.4c1.4,0 2.8,16.0 4.2,16.0c1.4,0 2.8,-16.0 4.2,-16.0c1.4,0 2.8,16.0 4.2,16.0c1.4,0 2.8,-16.0 4.2,-16.0c1.4,0 2.8,16.0 4.2,16.0c1.4,0 2.8,-16.0 4.2,-16.0h4.2c1.4,0 2.8,16.0 4.2,16.0h4.2c1.4,0 2.8,-16.0 4.2,-16.0h21.0c1.4,0 2.8,16.0 4.2,16.0h4.2c1.4,0 2.8,-16.0 4.2,-16.0h8.4c1.4,0 2.8,16.0 4.2,16.0c1.4,0 2.8,-16.0 4.2,-16.0c1.4,0 2.8,16.0 4.2,16.0c1.4,0 2.8,-16.0 4.2,-16.0c1.4,0 2.8,16.0 4.2,16.0h8.4c1.4,0 2.8,-16.0 4.2,-16.0c1.4,0 2.8,16.0 4.2,16.0h4.2c1.4,0 2.8,-16.0 4.2,-16.0h63.1c1.4,0 2.8,16.0 4.2,16.0c1.4,0 2.8,-16.0 4.2,-16.0h21.0c1.4,0 2.8,16.0 4.2,16.0c1.4,0 2.8,-16.0 4.2,-16.0h8.4c1.4,0 2.8,16.0 4.2,16.0h12.6c1.4,0 2.8,-16.0 4.2,-16.0c1.4,0 2.8,16.0 4.2,16.0c1.4,0 2.8,-16.0 4.2,-16.0h12.6c1.4,0 2.8,16.0 4.2,16.0c1.4,0 2.8,-16.0 4.2,-16.0c1.4,0 2.8,16.0 4.2,16.0h4.2c1.4,0 2.8,-16.0 4.2,-16.0c1.4,0 2.8,16.0 4.2,16.0h4.2c1.4,0 2.8,-16.0 4.2,-16.0c1.4,0 2.8,16.0 4.2,16.0c1.4,0 2.8,-16.0 4.2,-16.0h4.2c1.4,0 2.8,16.0 4.2,16.0h12.6c1.4,0 2.8,-16.0 4.2,-16.0c1.4,0 2.8,16.0 4.2,16.0c1.4,0 2.8,-16.0 4.2,-16.0h16.8c1.4,0 2.8,16.0 4.2,16.0c1.4,0 2.8,-16.0 4.2,-16.0h12.6c1.4,0 2.8,16.0 4.2,16.0h12.6c1.4,0 2.8,-16.0 4.2,-16.0h8.4c1.4,0 2.8,16.0 4.2,16.0c1.4,0 2.8,-16.0 4.2,-16.0c1.4,0 2.8,16.0 4.2,16.0c1.4,0 2.8,-16.0 4.2,-16.0h8.4c1.4,0 2.8,16.0 4.2,16.0c1.4,0 2.8,-16.0 4.2,-16.0c1.4,0 2.8,16.0 4.2,16.0c1.4,0 2.8,-16.0 4.2,-16.0c1.4,0 2.8,16.0 4.2,16.0h4.2" fill="none" stroke="#ff8019" stroke-width="1.3"/><path d="M1352.9,1013.8h4.2c1.4,0 2.8,-16.0 4.2,-16.0c1.4,0 2.8,16.0 4.2,16.0c1.4,0 2.8,-16.0 4.2,-16.0c1.4,0 2.8,16.0 4.2,16.0h4.2c1.4,0 2.8,-16.0 4.2,-16.0c1.4,0 2.8,16.0 4.2,16.0h4.2c1.4,0 2.8,-16.0 4.2,-16.0c1.4,0 2.8,16.0 4.2,16.0h8.4c1.4,0 2.8,-16.0 4.2,-16.0h4.2c1.4,0 2.8,16.0 4.2,16.0c1.4,0 2.8,-16.0 4.2,-16.0h21.0c1.4,0 2.8,16.0 4.2,16.0c1.4,0 2.8,-16.0 4.2,-16.0h8.4c1.4,0 2.8,16.0 4.2,16.0h25.2c1.4,0 2.8,-16.0 4.2,-16.0h21.0c1.4,0 2.8,16.0 4.2,16.0h16.8c1.4,0 2.8,-16.0 4.2,-16.0h8.4c1.4,0 2.8,16.0 4.2,16.0h8.4c1.4,0 2.8,-16.0 4.2,-16.0h4.2c1.4,0 2.8,16.0 4.2,16.0c1.4,0 2.8,-16.0 4.2,-16.0h16.8c1.4,0 2.8,16.0 4.2,16.0c1.4,0 2.8,-16.0 4.2,-16.0c1.4,0 2.8,16.0 4.2,16.0h4.2c1.4,0 2.8,-16.0 4.2,-16.0h12.6c1.4,0 2.8,16.0 4.2,16.0c1.4,0 2.8,-16.0 4.2,-16.0h8.4c1.4,0 2.8,16.0 4.2,16.0h4.2c1.4,0 2.8,-16.0 4.2,-16.0h4.2c1.4,0 2.8,16.0 4.2,16.0c1.4,0 2.8,-16.0 4.2,-16.0c1.4,0 2.8,16.0 4.2,16.0c1.4,0 2.8,-16.0 4.2,-16.0h33.7c1.4,0 2.8,16.0 4.2,16.0h4.2c1.4,0 2.8,-16.0 4.2,-16.0c1.4,0 2.8,16.0 4.2,16.0h12.6c1.4,0 2.8,-16.0 4.2,-16.0h4.2c1.4,0 2.8,16.0 4.2,16.0h4.2c1.4,0 2.8,-16.0 4.2,-16.0c1.4,0 2.8,16.0 4.2,16.0h4.2c1.4,0 2.8,-16.0 4.2,-16.0h4.2c1.4,0 2.8,16.0 4.2,16.0h4.2c1.4,0 2.8,-16.0 4.2,-16.0c1.4,0 2.8,16.0 4.2,16.0h12.6c1.4,0 2.8,-16.0 4.2,-16.0h96.8c1.4,0 2.8,16.0 4.2,16.0c1.4,0 2.8,-16.0 4.2,-16.0h4.2c1.4,0 2.8,16.0 4.2,16.0c1.4,0 2.8,-16.0 4.2,-16.0h8.4c1.4,0 2.8,16.0 4.2,16.0c1.4,0 2.8,-16.0 4.2,-16.0h21.0c1.4,0 2.8,16.0 4.2,16.0c1.4,0 2.8,-16.0 4.2,-16.0h29.5c1.4,0 2.8,16.0 4.2,16.0c1.4,0 2.8,-16.0 4.2,-16.0c1.4,0 2.8,16.0 4.2,16.0h4.2c1.4,0 2.8,-16.0 4.2,-16.0h4.2c1.4,0 2.8,16.0 4.2,16.0c1.4,0 2.8,-16.0 4.2,-16.0h4.2c1.4,0 2.8,16.0 4.2,16.0c1.4,0 2.8,-16.0 4.2,-16.0c1.4,0 2.8,16.0 4.2,16.0h21.0c1.4,0 2.8,-16.0 4.2,-16.0h4.2c1.4,0 2.8,16.0 4.2,16.0c1.4,0 2.8,-16.0 4.2,-16.0h8.4c1.4,0 2.8,16.0 4.2,16.0c1.4,0 2.8,-16.0 4.2,-16.0c1.4,0 2.8,16.0 4.2,16.0h12.6c1.4,0 2.8,-16.0 4.2,-16.0h4.2c1.4,0 2.8,16.0 4.2,16.0h16.8c1.4,0 2.8,-16.0 4.2,-16.0h8.4" fill="none" stroke="#e7ade4" stroke-width="1.3"/><path d="M1352.9,917.6h12.6c1.4,0 2.8,16.0 4.2,16.0h33.7c1.4,0 2.8,-16.0 4.2,-16.0c1.4,0 2.8,16.0 4.2,16.0h12.6c1.4,0 2.8,-16.0 4.2,-16.0c1.4,0 2.8,16.0 4.2,16.0h12.6c1.4,0 2.8,-16.0 4.2,-16.0h29.5c1.4,0 2.8,16.0 4.2,16.0h12.6c1.4,0 2.8,-16.0 4.2,-16.0h21.0c1.4,0 2.8,16.0 4.2,16.0h29.5c1.4,0 2.8,-16.0 4.2,-16.0h8.4c1.4,0 2.8,16.0 4.2,16.0h8.4c1.4,0 2.8,-16.0 4.2,-16.0h16.8c1.4,0 2.8,16.0 4.2,16.0h8.4c1.4,0 2.8,-16.0 4.2,-16.0h12.6c1.4,0 2.8,16.0 4.2,16.0h33.7c1.4,0 2.8,-16.0 4.2,-16.0c1.4,0 2.8,16.0 4.2,16.0c1.4,0 2.8,-16.0 4.2,-16.0c1.4,0 2.8,16.0 4.2,16.0h12.6c1.4,0 2.8,-16.0 4.2,-16.0h8.4c1.4,0 2.8,16.0 4.2,16.0c1.4,0 2.8,-16.0 4.2,-16.0h4.2c1.4,0 2.8,16.0 4.2,16.0c1.4,0 2.8,-16.0 4.2,-16.0h4.2c1.4,0 2.8,16.0 4.2,16.0c1.4,0 2.8,-16.0 4.2,-16.0h4.2c1.4,0 2.8,16.0 4.2,16.0h12.6c1.4,0 2.8,-16.0 4.2,-16.0h37.9c1.4,0 2.8,16.0 4.2,16.0h8.4c1.4,0 2.8,-16.0 4.2,-16.0c1.4,0 2.8,16.0 4.2,16.0c1.4,0 2.8,-16.0 4.2,-16.0h63.1c1.4,0 2.8,16.0 4.2,16.0c1.4,0 2.8,-16.0 4.2,-16.0c1.4,0 2.8,16.0 4.2,16.0h29.5c1.4,0 2.8,-16.0 4.2,-16.0h8.4c1.4,0 2.8,16.0 4.2,16.0c1.4,0 2.8,-16.0 4.2,-16.0h16.8c1.4,0 2.8,16.0 4.2,16.0h4.2c1.4,0 2.8,-16.0 4.2,-16.0c1.4,0 2.8,16.0 4.2,16.0h8.4c1.4,0 2.8,-16.0 4.2,-16.0h8.4c1.4,0 2.8,16.0 4.2,16.0h8.4c1.4,0 2.8,-16.0 4.2,-16.0h12.6c1.4,0 2.8,16.0 4.2,16.0c1.4,0 2.8,-16.0 4.2,-16.0h4.2c1.4,0 2.8,16.0 4.2,16.0h25.2c1.4,0 2.8,-16.0 4.2,-16.0c1.4,0 2.8,16.0 4.2,16.0h33.7c1.4,0 2.8,-16.0 4.2,-16.0c1.4,0 2.8,16.0 4.2,16.0h8.4c1.4,0 2.8,-16.0 4.2,-16.0h25.2" fill="none" stroke="#ff8019" stroke-width="1.3"/><path d="M1352.9,997.8c1.4,0 2.8,-16.0 4.2,-16.0c1.4,0 2.8,16.0 4.2,16.0c1.4,0 2.8,-16.0 4.2,-16.0c1.4,0 2.8,16.0 4.2,16.0c1.4,0 2.8,-16.0 4.2,-16.0h4.2c1.4,0 2.8,16.0 4.2,16.0c1.4,0 2.8,-16.0 4.2,-16.0c1.4,0 2.8,16.0 4.2,16.0c1.4,0 2.8,-16.0 4.2,-16.0h12.6c1.4,0 2.8,16.0 4.2,16.0h4.2c1.4,0 2.8,-16.0 4.2,-16.0h4.2c1.4,0 2.8,16.0 4.2,16.0c1.4,0 2.8,-16.0 4.2,-16.0h4.2c1.4,0 2.8,16.0 4.2,16.0h4.2c1.4,0 2.8,-16.0 4.2,-16.0h4.2c1.4,0 2.8,16.0 4.2,16.0c1.4,0 2.8,-16.0 4.2,-16.0c1.4,0 2.8,16.0 4.2,16.0h8.4c1.4,0 2.8,-16.0 4.2,-16.0c1.4,0 2.8,16.0 4.2,16.0c1.4,0 2.8,-16.0 4.2,-16.0h4.2c1.4,0 2.8,16.0 4.2,16.0c1.4,0 2.8,-16.0 4.2,-16.0h4.2c1.4,0 2.8,16.0 4.2,16.0c1.4,0 2.8,-16.0 4.2,-16.0c1.4,0 2.8,16.0 4.2,16.0c1.4,0 2.8,-16.0 4.2,-16.0h4.2c1.4,0 2.8,16.0 4.2,16.0c1.4,0 2.8,-16.0 4.2,-16.0h8.4c1.4,0 2.8,16.0 4.2,16.0c1.4,0 2.8,-16.0 4.2,-16.0c1.4,0 2.8,16.0 4.2,16.0c1.4,0 2.8,-16.0 4.2,-16.0h8.4c1.4,0 2.8,16.0 4.2,16.0h8.4c1.4,0 2.8,-16.0 4.2,-16.0c1.4,0 2.8,16.0 4.2,16.0c1.4,0 2.8,-16.0 4.2,-16.0h4.2c1.4,0 2.8,16.0 4.2,16.0h8.4c1.4,0 2.8,-16.0 4.2,-16.0c1.4,0 2.8,16.0 4.2,16.0c1.4,0 2.8,-16.0 4.2,-16.0c1.4,0 2.8,16.0 4.2,16.0h8.4c1.4,0 2.8,-16.0 4.2,-16.0c1.4,0 2.8,16.0 4.2,16.0h4.2c1.4,0 2.8,-16.0 4.2,-16.0c1.4,0 2.8,16.0 4.2,16.0h4.2c1.4,0 2.8,-16.0 4.2,-16.0c1.4,0 2.8,16.0 4.2,16.0h8.4c1.4,0 2.8,-16.0 4.2,-16.0h8.4c1.4,0 2.8,16.0 4.2,16.0c1.4,0 2.8,-16.0 4.2,-16.0c1.4,0 2.8,16.0 4.2,16.0c1.4,0 2.8,-16.0 4.2,-16.0h12.6c1.4,0 2.8,16.0 4.2,16.0h8.4c1.4,0 2.8,-16.0 4.2,-16.0c1.4,0 2.8,16.0 4.2,16.0c1.4,0 2.8,-16.0 4.2,-16.0c1.4,0 2.8,16.0 4.2,16.0h8.4c1.4,0 2.8,-16.0 4.2,-16.0h25.2c1.4,0 2.8,16.0 4.2,16.0h8.4c1.4,0 2.8,-16.0 4.2,-16.0h4.2c1.4,0 2.8,16.0 4.2,16.0h12.6c1.4,0 2.8,-16.0 4.2,-16.0c1.4,0 2.8,16.0 4.2,16.0c19.6,0 39.3,-16.0 58.9,-16.0c1.4,0 2.8,16.0 4.2,16.0c1.4,0 2.8,-16.0 4.2,-16.0c1.4,0 2.8,16.0 4.2,16.0h4.2c1.4,0 2.8,-16.0 4.2,-16.0h8.4c1.4,0 2.8,16.0 4.2,16.0c1.4,0 2.8,-16.0 4.2,-16.0h4.2c1.4,0 2.8,16.0 4.2,16.0c1.4,0 2.8,-16.0 4.2,-16.0h4.2c1.4,0 2.8,16.0 4.2,16.0c1.4,0 2.8,-16.0 4.2,-16.0h4.2c1.4,0 2.8,16.0 4.2,16.0h16.8c1.4,0 2.8,-16.0 4.2,-16.0h8.4c1.4,0 2.8,16.0 4.2,16.0h4.2c1.4,0 2.8,-16.0 4.2,-16.0c1.4,0 2.8,16.0 4.2,16.0h4.2c1.4,0 2.8,-16.0 4.2,-16.0h4.2c1.4,0 2.8,16.0 4.2,16.0c1.4,0 2.8,-16.0 4.2,-16.0c1.4,0 2.8,16.0 4.2,16.0h8.4c1.4,0 2.8,-16.0 4.2,-16.0c1.4,0 2.8,16.0 4.2,16.0h4.2c1.4,0 2.8,-16.0 4.2,-16.0h12.6c1.4,0 2.8,16.0 4.2,16.0c1.4,0 2.8,-16.0 4.2,-16.0h21.0c1.4,0 2.8,16.0 4.2,16.0h4.2c1.4,0 2.8,-16.0 4.2,-16.0c1.4,0 2.8,16.0 4.2,16.0c1.4,0 2.8,-16.0 4.2,-16.0c1.4,0 2.8,16.0 4.2,16.0h4.2c1.4,0 2.8,-16.0 4.2,-16.0c1.4,0 2.8,16.0 4.2,16.0h4.2c1.4,0 2.8,-16.0 4.2,-16.0h16.8c1.4,0 2.8,16.0 4.2,16.0h4.2" fill="none" stroke="#438e3a" stroke-width="1.3"/><path d="M1352.9,1029.8h16.8c1.4,0 2.8,-16.0 4.2,-16.0h4.2c1.4,0 2.8,16.0 4.2,16.0h12.6c1.4,0 2.8,-16.0 4.2,-16.0h16.8c1.4,0 2.8,16.0 4.2,16.0c1.4,0 2.8,-16.0 4.2,-16.0c1.4,0 2.8,16.0 4.2,16.0h16.8c1.4,0 2.8,-16.0 4.2,-16.0c1.4,0 2.8,16.0 4.2,16.0h4.2c1.4,0 2.8,-16.0 4.2,-16.0h29.5c1.4,0 2.8,16.0 4.2,16.0h8.4c1.4,0 2.8,-16.0 4.2,-16.0c1.4,0 2.8,16.0 4.2,16.0h25.2c1.4,0 2.8,-16.0 4.2,-16.0c1.4,0 2.8,16.0 4.2,16.0h8.4c1.4,0 2.8,-16.0 4.2,-16.0h16.8c1.4,0 2.8,16.0 4.2,16.0c1.4,0 2.8,-16.0 4.2,-16.0c1.4,0 2.8,16.0 4.2,16.0h4.2c1.4,0 2.8,-16.0 4.2,-16.0c1.4,0 2.8,16.0 4.2,16.0h8.4c1.4,0 2.8,-16.0 4.2,-16.0c1.4,0 2.8,16.0 4.2,16.0c1.4,0 2.8,-16.0 4.2,-16.0h8.4c1.4,0 2.8,16.0 4.2,16.0h54.7c1.4,0 2.8,-16.0 4.2,-16.0c1.4,0 2.8,16.0 4.2,16.0c1.4,0 2.8,-16.0 4.2,-16.0h21.0c1.4,0 2.8,16.0 4.2,16.0h16.8c1.4,0 2.8,-16.0 4.2,-16.0h12.6c1.4,0 2.8,16.0 4.2,16.0h16.8c1.4,0 2.8,-16.0 4.2,-16.0c1.4,0 2.8,16.0 4.2,16.0h4.2c1.4,0 2.8,-16.0 4.2,-16.0h4.2c1.4,0 2.8,16.0 4.2,16.0h8.4c1.4,0 2.8,-16.0 4.2,-16.0c1.4,0 2.8,16.0 4.2,16.0c1.4,0 2.8,-16.0 4.2,-16.0c1.4,0 2.8,16.0 4.2,16.0h63.1c1.4,0 2.8,-16.0 4.2,-16.0c1.4,0 2.8,16.0 4.2,16.0c1.4,0 2.8,-16.0 4.2,-16.0h4.2c1.4,0 2.8,16.0 4.2,16.0h8.4c1.4,0 2.8,-16.0 4.2,-16.0h4.2c1.4,0 2.8,16.0 4.2,16.0c1.4,0 2.8,-16.0 4.2,-16.0h4.2c1.4,0 2.8,16.0 4.2,16.0c1.4,0 2.8,-16.0 4.2,-16.0h4.2c1.4,0 2.8,16.0 4.2,16.0h4.2c1.4,0 2.8,-16.0 4.2,-16.0c1.4,0 2.8,16.0 4.2,16.0c1.4,0 2.8,-16.0 4.2,-16.0h12.6c1.4,0 2.8,16.0 4.2,16.0h25.2c1.4,0 2.8,-16.0 4.2,-16.0h42.1c1.4,0 2.8,16.0 4.2,16.0h4.2c1.4,0 2.8,-16.0 4.2,-16.0h4.2c1.4,0 2.8,16.0 4.2,16.0c1.4,0 2.8,-16.0 4.2,-16.0h4.2c1.4,0 2.8,16.0 4.2,16.0c1.4,0 2.8,-16.0 4.2,-16.0h12.6c1.4,0 2.8,16.0 4.2,16.0c1.4,0 2.8,-16.0 4.2,-16.0c1.4,0 2.8,16.0 4.2,16.0h25.2c1.4,0 2.8,-16.0 4.2,-16.0h8.4c1.4,0 2.8,16.0 4.2,16.0" fill="none" stroke="#ff8019" stroke-width="1.3"/><path d="M1352.9,1013.8h8.4c1.4,0 2.8,16.0 4.2,16.0h4.2c1.4,0 2.8,-16.0 4.2,-16.0h21.0c1.4,0 2.8,16.0 4.2,16.0h8.4c1.4,0 2.8,-16.0 4.2,-16.0c1.4,0 2.8,16.0 4.2,16.0h8.4c1.4,0 2.8,-16.0 4.2,-16.0c1.4,0 2.8,16.0 4.2,16.0h8.4c1.4,0 2.8,-16.0 4.2,-16.0h21.0c1.4,0 2.8,16.0 4.2,16.0h12.6c1.4,0 2.8,-16.0 4.2,-16.0c1.4,0 2.8,16.0 4.2,16.0h8.4c1.4,0 2.8,-16.0 4.2,-16.0h16.8c1.4,0 2.8,16.0 4.2,16.0h12.6c1.4,0 2.8,-16.0 4.2,-16.0h67.3c1.4,0 2.8,16.0 4.2,16.0h4.2c1.4,0 2.8,-16.0 4.2,-16.0h8.4c1.4,0 2.8,16.0 4.2,16.0h4.2c1.4,0 2.8,-16.0 4.2,-16.0h42.1c1.4,0 2.8,16.0 4.2,16.0c1.4,0 2.8,-16.0 4.2,-16.0h16.8c1.4,0 2.8,16.0 4.2,16.0h12.6c1.4,0 2.8,-16.0 4.2,-16.0h4.2c1.4,0 2.8,16.0 4.2,16.0h12.6c1.4,0 2.8,-16.0 4.2,-16.0h12.6c1.4,0 2.8,16.0 4.2,16.0c1.4,0 2.8,-16.0 4.2,-16.0h8.4c1.4,0 2.8,16.0 4.2,16.0c1.4,0 2.8,-16.0 4.2,-16.0h25.2c1.4,0 2.8,16.0 4.2,16.0h4.2c1.4,0 2.8,-16.0 4.2,-16.0c19.6,0 39.3,16.0 58.9,16.0h4.2c1.4,0 2.8,-16.0 4.2,-16.0h8.4c1.4,0 2.8,16.0 4.2,16.0c1.4,0 2.8,-16.0 4.2,-16.0h29.5c1.4,0 2.8,16.0 4.2,16.0h4.2c1.4,0 2.8,-16.0 4.2,-16.0h4.2c1.4,0 2.8,16.0 4.2,16.0c1.4,0 2.8,-16.0 4.2,-16.0h16.8c1.4,0 2.8,16.0 4.2,16.0h4.2c1.4,0 2.8,-16.0 4.2,-16.0c1.4,0 2.8,16.0 4.2,16.0c1.4,0 2.8,-16.0 4.2,-16.0c1.4,0 2.8,16.0 4.2,16.0c1.4,0 2.8,-16.0 4.2,-16.0c1.4,0 2.8,16.0 4.2,16.0c1.4,0 2.8,-16.0 4.2,-16.0h29.5c1.4,0 2.8,16.0 4.2,16.0c1.4,0 2.8,-16.0 4.2,-16.0h21.0c1.4,0 2.8,16.0 4.2,16.0c1.4,0 2.8,-16.0 4.2,-16.0h8.4c1.4,0 2.8,16.0 4.2,16.0h4.2c1.4,0 2.8,-16.0 4.2,-16.0c1.4,0 2.8,16.0 4.2,16.0h8.4c1.4,0 2.8,-16.0 4.2,-16.0c1.4,0 2.8,16.0 4.2,16.0c1.4,0 2.8,-16.0 4.2,-16.0h4.2c1.4,0 2.8,16.0 4.2,16.0h12.6c1.4,0 2.8,-16.0 4.2,-16.0c1.4,0 2.8,16.0 4.2,16.0h4.2" fill="none" stroke="#f5d89e" stroke-width="1.3"/><path d="M1352.9,997.8h4.2c1.4,0 2.8,-16.0 4.2,-16.0c1.4,0 2.8,16.0 4.2,16.0c1.4,0 2.8,-16.0 4.2,-16.0h33.7c1.4,0 2.8,16.0 4.2,16.0h8.4c1.4,0 2.8,-16.0 4.2,-16.0h4.2c1.4,0 2.8,16.0 4.2,16.0h12.6c1.4,0 2.8,-16.0 4.2,-16.0h16.8c1.4,0 2.8,16.0 4.2,16.0h12.6c1.4,0 2.8,-16.0 4.2,-16.0h8.4c1.4,0 2.8,16.0 4.2,16.0h8.4c1.4,0 2.8,-16.0 4.2,-16.0c1.4,0 2.8,16.0 4.2,16.0h4.2c1.4,0 2.8,-16.0 4.2,-16.0h8.4c1.4,0 2.8,16.0 4.2,16.0c1.4,0 2.8,-16.0 4.2,-16.0h8.4c1.4,0 2.8,16.0 4.2,16.0h12.6c1.4,0 2.8,-16.0 4.2,-16.0h4.2c1.4,0 2.8,16.0 4.2,16.0h29.5c1.4,0 2.8,-16.0 4.2,-16.0h8.4c1.4,0 2.8,16.0 4.2,16.0h8.4c1.4,0 2.8,-16.0 4.2,-16.0c1.4,0 2.8,16.0 4.2,16.0c1.4,0 2.8,-16.0 4.2,-16.0h4.2c1.4,0 2.8,16.0 4.2,16.0h12.6c1.4,0 2.8,-16.0 4.2,-16.0h4.2c1.4,0 2.8,16.0 4.2,16.0c1.4,0 2.8,-16.0 4.2,-16.0h4.2c1.4,0 2.8,16.0 4.2,16.0h37.9c1.4,0 2.8,-16.0 4.2,-16.0h8.4c1.4,0 2.8,16.0 4.2,16.0h4.2c1.4,0 2.8,-16.0 4.2,-16.0h4.2c1.4,0 2.8,16.0 4.2,16.0c1.4,0 2.8,-16.0 4.2,-16.0h25.2c1.4,0 2.8,16.0 4.2,16.0h8.4c1.4,0 2.8,-16.0 4.2,-16.0c1.4,0 2.8,16.0 4.2,16.0h4.2c1.4,0 2.8,-16.0 4.2,-16.0h71.5c1.4,0 2.8,16.0 4.2,16.0c1.4,0 2.8,-16.0 4.2,-16.0h8.4c1.4,0 2.8,16.0 4.2,16.0c1.4,0 2.8,-16.0 4.2,-16.0c1.4,0 2.8,16.0 4.2,16.0h4.2c1.4,0 2.8,-16.0 4.2,-16.0c1.4,0 2.8,16.0 4.2,16.0h4.2c1.4,0 2.8,-16.0 4.2,-16.0c1.4,0 2.8,16.0 4.2,16.0h21.0c1.4,0 2.8,-16.0 4.2,-16.0h8.4c1.4,0 2.8,16.0 4.2,16.0h12.6c1.4,0 2.8,-16.0 4.2,-16.0h8.4c1.4,0 2.8,16.0 4.2,16.0h8.4c1.4,0 2.8,-16.0 4.2,-16.0h16.8c1.4,0 2.8,16.0 4.2,16.0c1.4,0 2.8,-16.0 4.2,-16.0h46.3c1.4,0 2.8,16.0 4.2,16.0h16.8c1.4,0 2.8,-16.0 4.2,-16.0c1.4,0 2.8,16.0 4.2,16.0h4.2c1.4,0 2.8,-16.0 4.2,-16.0h12.6c1.4,0 2.8,16.0 4.2,16.0c1.4,0 2.8,-16.0 4.2,-16.0h4.2c1.4,0 2.8,16.0 4.2,16.0h4.2c1.4,0 2.8,-16.0 4.2,-16.0" fill="none" stroke="#901d11" stroke-width="1.3"/><path d="M1352.9,1029.8h4.2c1.4,0 2.8,-16.0 4.2,-16.0h8.4c1.4,0 2.8,16.0 4.2,16.0h4.2c1.4,0 2.8,-16.0 4.2,-16.0c1.4,0 2.8,16.0 4.2,16.0c1.4,0 2.8,-16.0 4.2,-16.0h12.6c1.4,0 2.8,16.0 4.2,16.0c1.4,0 2.8,-16.0 4.2,-16.0c1.4,0 2.8,16.0 4.2,16.0h4.2c1.4,0 2.8,-16.0 4.2,-16.0h4.2c1.4,0 2.8,16.0 4.2,16.0c1.4,0 2.8,-16.0 4.2,-16.0c1.4,0 2.8,16.0 4.2,16.0h4.2c1.4,0 2.8,-16.0 4.2,-16.0h4.2c1.4,0 2.8,16.0 4.2,16.0h8.4c1.4,0 2.8,-16.0 4.2,-16.0c1.4,0 2.8,16.0 4.2,16.0c1.4,0 2.8,-16.0 4.2,-16.0h4.2c1.4,0 2.8,16.0 4.2,16.0c1.4,0 2.8,-16.0 4.2,-16.0h29.5c1.4,0 2.8,16.0 4.2,16.0h29.5c1.4,0 2.8,-16.0 4.2,-16.0h8.4c1.4,0 2.8,16.0 4.2,16.0c1.4,0 2.8,-16.0 4.2,-16.0c1.4,0 2.8,16.0 4.2,16.0h4.2c1.4,0 2.8,-16.0 4.2,-16.0h4.2c1.4,0 2.8,16.0 4.2,16.0h4.2c1.4,0 2.8,-16.0 4.2,-16.0c1.4,0 2.8,16.0 4.2,16.0c1.4,0 2.8,-16.0 4.2,-16.0h4.2c1.4,0 2.8,16.0 4.2,16.0h4.2c1.4,0 2.8,-16.0 4.2,-16.0c1.4,0 2.8,16.0 4.2,16.0h12.6c1.4,0 2.8,-16.0 4.2,-16.0h8.4c1.4,0 2.8,16.0 4.2,16.0h4.2c1.4,0 2.8,-16.0 4.2,-16.0h16.8c1.4,0 2.8,16.0 4.2,16.0c1.4,0 2.8,-16.0 4.2,-16.0h8.4c1.4,0 2.8,16.0 4.2,16.0c1.4,0 2.8,-16.0 4.2,-16.0h12.6c1.4,0 2.8,16.0 4.2,16.0h4.2c1.4,0 2.8,-16.0 4.2,-16.0h21.0c1.4,0 2.8,16.0 4.2,16.0h16.8c1.4,0 2.8,-16.0 4.2,-16.0h8.4c1.4,0 2.8,16.0 4.2,16.0h12.6c1.4,0 2.8,-16.0 4.2,-16.0c1.4,0 2.8,16.0 4.2,16.0h12.6c19.6,0 39.3,-16.0 58.9,-16.0h4.2c1.4,0 2.8,16.0 4.2,16.0h8.4c1.4,0 2.8,-16.0 4.2,-16.0c1.4,0 2.8,16.0 4.2,16.0c1.4,0 2.8,-16.0 4.2,-16.0h4.2c1.4,0 2.8,16.0 4.2,16.0h12.6c1.4,0 2.8,-16.0 4.2,-16.0c1.4,0 2.8,16.0 4.2,16.0c1.4,0 2.8,-16.0 4.2,-16.0c1.4,0 2.8,16.0 4.2,16.0c1.4,0 2.8,-16.0 4.2,-16.0c1.4,0 2.8,16.0 4.2,16.0h8.4c1.4,0 2.8,-16.0 4.2,-16.0h4.2c1.4,0 2.8,16.0 4.2,16.0c1.4,0 2.8,-16.0 4.2,-16.0h4.2c1.4,0 2.8,16.0 4.2,16.0h16.8c1.4,0 2.8,-16.0 4.2,-16.0c1.4,0 2.8,16.0 4.2,16.0c1.4,0 2.8,-16.0 4.2,-16.0c1.4,0 2.8,16.0 4.2,16.0h8.4c1.4,0 2.8,-16.0 4.2,-16.0h12.6c1.4,0 2.8,16.0 4.2,16.0c1.4,0 2.8,-16.0 4.2,-16.0c1.4,0 2.8,16.0 4.2,16.0c1.4,0 2.8,-16.0 4.2,-16.0h8.4c1.4,0 2.8,16.0 4.2,16.0h4.2c1.4,0 2.8,-16.0 4.2,-16.0c1.4,0 2.8,16.0 4.2,16.0c1.4,0 2.8,-16.0 4.2,-16.0c1.4,0 2.8,16.0 4.2,16.0h37.9c1.4,0 2.8,-16.0 4.2,-16.0h12.6c1.4,0 2.8,16.0 4.2,16.0h4.2" fill="none" stroke="#762c6b" stroke-width="1.3"/><path d="M1352.9,1013.8h12.6c1.4,0 2.8,16.0 4.2,16.0c1.4,0 2.8,-16.0 4.2,-16.0h12.6c1.4,0 2.8,16.0 4.2,16.0h12.6c1.4,0 2.8,-16.0 4.2,-16.0h21.0c1.4,0 2.8,16.0 4.2,16.0h21.0c1.4,0 2.8,-16.0 4.2,-16.0h4.2c1.4,0 2.8,16.0 4.2,16.0c1.4,0 2.8,-16.0 4.2,-16.0h8.4c1.4,0 2.8,16.0 4.2,16.0c1.4,0 2.8,-16.0 4.2,-16.0h29.5c1.4,0 2.8,16.0 4.2,16.0c1.4,0 2.8,-16.0 4.2,-16.0h4.2c1.4,0 2.8,16.0 4.2,16.0c1.4,0 2.8,-16.0 4.2,-16.0h12.6c1.4,0 2.8,16.0 4.2,16.0c1.4,0 2.8,-16.0 4.2,-16.0h8.4c1.4,0 2.8,16.0 4.2,16.0c1.4,0 2.8,-16.0 4.2,-16.0c1.4,0 2.8,16.0 4.2,16.0h12.6c1.4,0 2.8,-16.0 4.2,-16.0h4.2c1.4,0 2.8,16.0 4.2,16.0h4.2c1.4,0 2.8,-16.0 4.2,-16.0c1.4,0 2.8,16.0 4.2,16.0h16.8c1.4,0 2.8,-16.0 4.2,-16.0h4.2c1.4,0 2.8,16.0 4.2,16.0c1.4,0 2.8,-16.0 4.2,-16.0c1.4,0 2.8,16.0 4.2,16.0c1.4,0 2.8,-16.0 4.2,-16.0h42.1c1.4,0 2.8,16.0 4.2,16.0c1.4,0 2.8,-16.0 4.2,-16.0h4.2c1.4,0 2.8,16.0 4.2,16.0h33.7c1.4,0 2.8,-16.0 4.2,-16.0h4.2c1.4,0 2.8,16.0 4.2,16.0h8.4c1.4,0 2.8,-16.0 4.2,-16.0c1.4,0 2.8,16.0 4.2,16.0h12.6c1.4,0 2.8,-16.0 4.2,-16.0c1.4,0 2.8,16.0 4.2,16.0c1.4,0 2.8,-16.0 4.2,-16.0h8.4c1.4,0 2.8,16.0 4.2,16.0c1.4,0 2.8,-16.0 4.2,-16.0h75.7c1.4,0 2.8,16.0 4.2,16.0c1.4,0 2.8,-16.0 4.2,-16.0c1.4,0 2.8,16.0 4.2,16.0c1.4,0 2.8,-16.0 4.2,-16.0c1.4,0 2.8,16.0 4.2,16.0c1.4,0 2.8,-16.0 4.2,-16.0h29.5c1.4,0 2.8,16.0 4.2,16.0h12.6c1.4,0 2.8,-16.0 4.2,-16.0c1.4,0 2.8,16.0 4.2,16.0h4.2c1.4,0 2.8,-16.0 4.2,-16.0h4.2c1.4,0 2.8,16.0 4.2,16.0h16.8c1.4,0 2.8,-16.0 4.2,-16.0h4.2c1.4,0 2.8,16.0 4.2,16.0h37.9c1.4,0 2.8,-16.0 4.2,-16.0h12.6c1.4,0 2.8,16.0 4.2,16.0h8.4c1.4,0 2.8,-16.0 4.2,-16.0c1.4,0 2.8,16.0 4.2,16.0h4.2c1.4,0 2.8,-16.0 4.2,-16.0c1.4,0 2.8,16.0 4.2,16.0h12.6c1.4,0 2.8,-16.0 4.2,-16.0h4.2c1.4,0 2.8,16.0 4.2,16.0h4.2c1.4,0 2.8,-16.0 4.2,-16.0h12.6c1.4,0 2.8,16.0 4.2,16.0h8.4" fill="none" stroke="#91bcff" stroke-width="1.3"/><path d="M1352.9,1029.8h4.2c1.4,0 2.8,-16.0 4.2,-16.0h33.7c1.4,0 2.8,16.0 4.2,16.0h8.4c1.4,0 2.8,-16.0 4.2,-16.0c1.4,0 2.8,16.0 4.2,16.0h12.6c1.4,0 2.8,-16.0 4.2,-16.0c1.4,0 2.8,16.0 4.2,16.0c1.4,0 2.8,-16.0 4.2,-16.0c1.4,0 2.8,16.0 4.2,16.0h12.6c1.4,0 2.8,-16.0 4.2,-16.0h16.8c1.4,0 2.8,16.0 4.2,16.0h25.2c1.4,0 2.8,-16.0 4.2,-16.0h4.2c1.4,0 2.8,16.0 4.2,16.0c1.4,0 2.8,-16.0 4.2,-16.0c1.4,0 2.8,16.0 4.2,16.0c1.4,0 2.8,-16.0 4.2,-16.0c1.4,0 2.8,16.0 4.2,16.0c1.4,0 2.8,-16.0 4.2,-16.0c1.4,0 2.8,16.0 4.2,16.0h4.2c1.4,0 2.8,-16.0 4.2,-16.0c1.4,0 2.8,16.0 4.2,16.0h4.2c1.4,0 2.8,-16.0 4.2,-16.0h4.2c1.4,0 2.8,16.0 4.2,16.0h8.4c1.4,0 2.8,-16.0 4.2,-16.0h8.4c1.4,0 2.8,16.0 4.2,16.0c1.4,0 2.8,-16.0 4.2,-16.0h4.2c1.4,0 2.8,16.0 4.2,16.0h33.7c1.4,0 2.8,-16.0 4.2,-16.0h8.4c1.4,0 2.8,16.0 4.2,16.0h12.6c1.4,0 2.8,-16.0 4.2,-16.0h4.2c1.4,0 2.8,16.0 4.2,16.0h4.2c1.4,0 2.8,-16.0 4.2,-16.0h4.2c1.4,0 2.8,16.0 4.2,16.0c1.4,0 2.8,-16.0 4.2,-16.0h4.2c1.4,0 2.8,16.0 4.2,16.0c1.4,0 2.8,-16.0 4.2,-16.0h21.0c1.4,0 2.8,16.0 4.2,16.0h4.2c1.4,0 2.8,-16.0 4.2,-16.0c1.4,0 2.8,16.0 4.2,16.0h50.5c1.4,0 2.8,-16.0 4.2,-16.0h4.2c1.4,0 2.8,16.0 4.2,16.0c1.4,0 2.8,-16.0 4.2,-16.0c1.4,0 2.8,16.0 4.2,16.0h58.9c1.4,0 2.8,-16.0 4.2,-16.0h12.6c1.4,0 2.8,16.0 4.2,16.0h4.2c1.4,0 2.8,-16.0 4.2,-16.0c1.4,0 2.8,16.0 4.2,16.0h4.2c1.4,0 2.8,-16.0 4.2,-16.0h4.2c1.4,0 2.8,16.0 4.2,16.0h4.2c1.4,0 2.8,-16.0 4.2,-16.0h4.2c1.4,0 2.8,16.0 4.2,16.0c1.4,0 2.8,-16.0 4.2,-16.0h12.6c1.4,0 2.8,16.0 4.2,16.0c1.4,0 2.8,-16.0 4.2,-16.0h8.4c1.4,0 2.8,16.0 4.2,16.0h4.2c1.4,0 2.8,-16.0 4.2,-16.0h16.8c1.4,0 2.8,16.0 4.2,16.0h21.0c1.4,0 2.8,-16.0 4.2,-16.0c1.4,0 2.8,16.0 4.2,16.0c1.4,0 2.8,-16.0 4.2,-16.0h4.2c1.4,0 2.8,16.0 4.2,16.0c1.4,0 2.8,-16.0 4.2,-16.0h21.0c1.4,0 2.8,16.0 4.2,16.0h4.2c1.4,0 2.8,-16.0 4.2,-16.0h4.2c1.4,0 2.8,16.0 4.2,16.0c1.4,0 2.8,-16.0 4.2,-16.0h21.0c1.4,0 2.8,16.0 4.2,16.0c1.4,0 2.8,-16.0 4.2,-16.0c1.4,0 2.8,16.0 4.2,16.0c1.4,0 2.8,-16.0 4.2,-16.0h16.8" fill="none" stroke="#bbddb0" stroke-width="1.3"/><path d="M1352.9,917.6c1.4,0 2.8,-16.0 4.2,-16.0h8.4c1.4,0 2.8,16.0 4.2,16.0c1.4,0 2.8,-16.0 4.2,-16.0h8.4c1.4,0 2.8,16.0 4.2,16.0h8.4c1.4,0 2.8,-16.0 4.2,-16.0h8.4c1.4,0 2.8,16.0 4.2,16.0c1.4,0 2.8,-16.0 4.2,-16.0h25.2c1.4,0 2.8,16.0 4.2,16.0h4.2c1.4,0 2.8,-16.0 4.2,-16.0h12.6c1.4,0 2.8,16.0 4.2,16.0c1.4,0 2.8,-16.0 4.2,-16.0h8.4c1.4,0 2.8,16.0 4.2,16.0h4.2c1.4,0 2.8,-16.0 4.2,-16.0c1.4,0 2.8,16.0 4.2,16.0c1.4,0 2.8,-16.0 4.2,-16.0h12.6c1.4,0 2.8,16.0 4.2,16.0h4.2c1.4,0 2.8,-16.0 4.2,-16.0h4.2c1.4,0 2.8,16.0 4.2,16.0c1.4,0 2.8,-16.0 4.2,-16.0c1.4,0 2.8,16.0 4.2,16.0h4.2c1.4,0 2.8,-16.0 4.2,-16.0h4.2c1.4,0 2.8,16.0 4.2,16.0h21.0c1.4,0 2.8,-16.0 4.2,-16.0c1.4,0 2.8,16.0 4.2,16.0h4.2c1.4,0 2.8,-16.0 4.2,-16.0c1.4,0 2.8,16.0 4.2,16.0c1.4,0 2.8,-16.0 4.2,-16.0h4.2c1.4,0 2.8,16.0 4.2,16.0h12.6c1.4,0 2.8,-16.0 4.2,-16.0h4.2c1.4,0 2.8,16.0 4.2,16.0h8.4c1.4,0 2.8,-16.0 4.2,-16.0h8.4c1.4,0 2.8,16.0 4.2,16.0h21.0c1.4,0 2.8,-16.0 4.2,-16.0h4.2c1.4,0 2.8,16.0 4.2,16.0h12.6c1.4,0 2.8,-16.0 4.2,-16.0h8.4c1.4,0 2.8,16.0 4.2,16.0c1.4,0 2.8,-16.0 4.2,-16.0h8.4c1.4,0 2.8,16.0 4.2,16.0h8.4c1.4,0 2.8,-16.0 4.2,-16.0h4.2c1.4,0 2.8,16.0 4.2,16.0c1.4,0 2.8,-16.0 4.2,-16.0c1.4,0 2.8,16.0 4.2,16.0h16.8c1.4,0 2.8,-16.0 4.2,-16.0c1.4,0 2.8,16.0 4.2,16.0h4.2c1.4,0 2.8,-16.0 4.2,-16.0h16.8c1.4,0 2.8,16.0 4.2,16.0c19.6,0 39.3,-16.0 58.9,-16.0h4.2c1.4,0 2.8,16.0 4.2,16.0c1.4,0 2.8,-16.0 4.2,-16.0c1.4,0 2.8,16.0 4.2,16.0h4.2c1.4,0 2.8,-16.0 4.2,-16.0h21.0c1.4,0 2.8,16.0 4.2,16.0h33.7c1.4,0 2.8,-16.0 4.2,-16.0h8.4c1.4,0 2.8,16.0 4.2,16.0c1.4,0 2.8,-16.0 4.2,-16.0c1.4,0 2.8,16.0 4.2,16.0c1.4,0 2.8,-16.0 4.2,-16.0c1.4,0 2.8,16.0 4.2,16.0c1.4,0 2.8,-16.0 4.2,-16.0c1.4,0 2.8,16.0 4.2,16.0c1.4,0 2.8,-16.0 4.2,-16.0c1.4,0 2.8,16.0 4.2,16.0c1.4,0 2.8,-16.0 4.2,-16.0h4.2c1.4,0 2.8,16.0 4.2,16.0c1.4,0 2.8,-16.0 4.2,-16.0h12.6c1.4,0 2.8,16.0 4.2,16.0c1.4,0 2.8,-16.0 4.2,-16.0h4.2c1.4,0 2.8,16.0 4.2,16.0c1.4,0 2.8,-16.0 4.2,-16.0h37.9c1.4,0 2.8,16.0 4.2,16.0h21.0c1.4,0 2.8,-16.0 4.2,-16.0c1.4,0 2.8,16.0 4.2,16.0c1.4,0 2.8,-16.0 4.2,-16.0h8.4c1.4,0 2.8,16.0 4.2,16.0h8.4" fill="none" stroke="#91bcff" stroke-width="1.3"/><path d="M1352.9,901.6h4.2c1.4,0 2.8,16.0 4.2,16.0c1.4,0 2.8,-16.0 4.2,-16.0c1.4,0 2.8,16.0 4.2,16.0c1.4,0 2.8,-16.0 4.2,-16.0h4.2c1.4,0 2.8,16.0 4.2,16.0c1.4,0 2.8,-16.0 4.2,-16.0h21.0c1.4,0 2.8,16.0 4.2,16.0c1.4,0 2.8,-16.0 4.2,-16.0c1.4,0 2.8,16.0 4.2,16.0c1.4,0 2.8,-16.0 4.2,-16.0h33.7c1.4,0 2.8,16.0 4.2,16.0h12.6c1.4,0 2.8,-16.0 4.2,-16.0c1.4,0 2.8,16.0 4.2,16.0h4.2c1.4,0 2.8,-16.0 4.2,-16.0h4.2c1.4,0 2.8,16.0 4.2,16.0h8.4c1.4,0 2.8,-16.0 4.2,-16.0h8.4c1.4,0 2.8,16.0 4.2,16.0h8.4c1.4,0 2.8,-16.0 4.2,-16.0h4.2c1.4,0 2.8,16.0 4.2,16.0h4.2c1.4,0 2.8,-16.0 4.2,-16.0h12.6c1.4,0 2.8,16.0 4.2,16.0h12.6c1.4,0 2.8,-16.0 4.2,-16.0c1.4,0 2.8,16.0 4.2,16.0h4.2c1.4,0 2.8,-16.0 4.2,-16.0h4.2c1.4,0 2.8,16.0 4.2,16.0c1.4,0 2.8,-16.0 4.2,-16.0c1.4,0 2.8,16.0 4.2,16.0c1.4,0 2.8,-16.0 4.2,-16.0h4.2c1.4,0 2.8,16.0 4.2,16.0c1.4,0 2.8,-16.0 4.2,-16.0h8.4c1.4,0 2.8,16.0 4.2,16.0h4.2c1.4,0 2.8,-16.0 4.2,-16.0h8.4c1.4,0 2.8,16.0 4.2,16.0h21.0c1.4,0 2.8,-16.0 4.2,-16.0c1.4,0 2.8,16.0 4.2,16.0c1.4,0 2.8,-16.0 4.2,-16.0c1.4,0 2.8,16.0 4.2,16.0h46.3c1.4,0 2.8,-16.0 4.2,-16.0h8.4c1.4,0 2.8,16.0 4.2,16.0h12.6c1.4,0 2.8,-16.0 4.2,-16.0h8.4c1.4,0 2.8,16.0 4.2,16.0c1.4,0 2.8,-16.0 4.2,-16.0h8.4c1.4,0 2.8,16.0 4.2,16.0c1.4,0 2.8,-16.0 4.2,-16.0h4.2c1.4,0 2.8,16.0 4.2,16.0h4.2c19.6,0 39.3,-16.0 58.9,-16.0h4.2c1.4,0 2.8,16.0 4.2,16.0h29.5c1.4,0 2.8,-16.0 4.2,-16.0h4.2c1.4,0 2.8,16.0 4.2,16.0h4.2c1.4,0 2.8,-16.0 4.2,-16.0h33.7c1.4,0 2.8,16.0 4.2,16.0h12.6c1.4,0 2.8,-16.0 4.2,-16.0c1.4,0 2.8,16.0 4.2,16.0h12.6c1.4,0 2.8,-16.0 4.2,-16.0h16.8c1.4,0 2.8,16.0 4.2,16.0c1.4,0 2.8,-16.0 4.2,-16.0h8.4c1.4,0 2.8,16.0 4.2,16.0h21.0c1.4,0 2.8,-16.0 4.2,-16.0h8.4c1.4,0 2.8,16.0 4.2,16.0h4.2c1.4,0 2.8,-16.0 4.2,-16.0h4.2c1.4,0 2.8,16.0 4.2,16.0h4.2c1.4,0 2.8,-16.0 4.2,-16.0c1.4,0 2.8,16.0 4.2,16.0h8.4c1.4,0 2.8,-16.0 4.2,-16.0h4.2c1.4,0 2.8,16.0 4.2,16.0c1.4,0 2.8,-16.0 4.2,-16.0c1.4,0 2.8,16.0 4.2,16.0h4.2c1.4,0 2.8,-16.0 4.2,-16.0c1.4,0 2.8,16.0 4.2,16.0" fill="none" stroke="#bc7fdb" stroke-width="1.3"/><path d="M1352.9,917.6c1.4,0 2.8,16.0 4.2,16.0c1.4,0 2.8,-16.0 4.2,-16.0h4.2c1.4,0 2.8,16.0 4.2,16.0c1.4,0 2.8,-16.0 4.2,-16.0h4.2c1.4,0 2.8,16.0 4.2,16.0h4.2c1.4,0 2.8,-16.0 4.2,-16.0c1.4,0 2.8,16.0 4.2,16.0c1.4,0 2.8,-16.0 4.2,-16.0c1.4,0 2.8,16.0 4.2,16.0h4.2c1.4,0 2.8,-16.0 4.2,-16.0h4.2c1.4,0 2.8,16.0 4.2,16.0c1.4,0 2.8,-16.0 4.2,-16.0c1.4,0 2.8,16.0 4.2,16.0c1.4,0 2.8,-16.0 4.2,-16.0h4.2c1.4,0 2.8,16.0 4.2,16.0h12.6c1.4,0 2.8,-16.0 4.2,-16.0c1.4,0 2.8,16.0 4.2,16.0c1.4,0 2.8,-16.0 4.2,-16.0c1.4,0 2.8,16.0 4.2,16.0c1.4,0 2.8,-16.0 4.2,-16.0c1.4,0 2.8,16.0 4.2,16.0h4.2c1.4,0 2.8,-16.0 4.2,-16.0c1.4,0 2.8,16.0 4.2,16.0c1.4,0 2.8,-16.0 4.2,-16.0c1.4,0 2.8,16.0 4.2,16.0c1.4,0 2.8,-16.0 4.2,-16.0c1.4,0 2.8,16.0 4.2,16.0c1.4,0 2.8,-16.0 4.2,-16.0c1.4,0 2.8,16.0 4.2,16.0c1.4,0 2.8,-16.0 4.2,-16.0h4.2c1.4,0 2.8,16.0 4.2,16.0h12.6c1.4,0 2.8,-16.0 4.2,-16.0h4.2c1.4,0 2.8,16.0 4.2,16.0h4.2c1.4,0 2.8,-16.0 4.2,-16.0c1.4,0 2.8,16.0 4.2,16.0c1.4,0 2.8,-16.0 4.2,-16.0h4.2c1.4,0 2.8,16.0 4.2,16.0h8.4c1.4,0 2.8,-16.0 4.2,-16.0c1.4,0 2.8,16.0 4.2,16.0c1.4,0 2.8,-16.0 4.2,-16.0c1.4,0 2.8,16.0 4.2,16.0c1.4,0 2.8,-16.0 4.2,-16.0h4.2c1.4,0 2.8,16.0 4.2,16.0c1.4,0 2.8,-16.0 4.2,-16.0h29.5c1.4,0 2.8,16.0 4.2,16.0c1.4,0 2.8,-16.0 4.2,-16.0h12.6c1.4,0 2.8,16.0 4.2,16.0h4.2c1.4,0 2.8,-16.0 4.2,-16.0h16.8c1.4,0 2.8,16.0 4.2,16.0c1.4,0 2.8,-16.0 4.2,-16.0c1.4,0 2.8,16.0 4.2,16.0h8.4c1.4,0 2.8,-16.0 4.2,-16.0c1.4,0 2.8,16.0 4.2,16.0c1.4,0 2.8,-16.0 4.2,-16.0c1.4,0 2.8,16.0 4.2,16.0c1.4,0 2.8,-16.0 4.2,-16.0h4.2c1.4,0 2.8,16.0 4.2,16.0c1.4,0 2.8,-16.0 4.2,-16.0h4.2c1.4,0 2.8,16.0 4.2,16.0h21.0c1.4,0 2.8,-16.0 4.2,-16.0c1.4,0 2.8,16.0 4.2,16.0c1.4,0 2.8,-16.0 4.2,-16.0c1.4,0 2.8,16.0 4.2,16.0h4.2c1.4,0 2.8,-16.0 4.2,-16.0h8.4c1.4,0 2.8,16.0 4.2,16.0c1.4,0 2.8,-16.0 4.2,-16.0h63.1c1.4,0 2.8,16.0 4.2,16.0c1.4,0 2.8,-16.0 4.2,-16.0c1.4,0 2.8,16.0 4.2,16.0c1.4,0 2.8,-16.0 4.2,-16.0c1.4,0 2.8,16.0 4.2,16.0h8.4c1.4,0 2.8,-16.0 4.2,-16.0c1.4,0 2.8,16.0 4.2,16.0c1.4,0 2.8,-16.0 4.2,-16.0c1.4,0 2.8,16.0 4.2,16.0c1.4,0 2.8,-16.0 4.2,-16.0c1.4,0 2.8,16.0 4.2,16.0h16.8c1.4,0 2.8,-16.0 4.2,-16.0h8.4c1.4,0 2.8,16.0 4.2,16.0c1.4,0 2.8,-16.0 4.2,-16.0c1.4,0 2.8,16.0 4.2,16.0c1.4,0 2.8,-16.0 4.2,-16.0c1.4,0 2.8,16.0 4.2,16.0h8.4c1.4,0 2.8,-16.0 4.2,-16.0c1.4,0 2.8,16.0 4.2,16.0h8.4c1.4,0 2.8,-16.0 4.2,-16.0c1.4,0 2.8,16.0 4.2,16.0c1.4,0 2.8,-16.0 4.2,-16.0h8.4c1.4,0 2.8,16.0 4.2,16.0c1.4,0 2.8,-16.0 4.2,-16.0h8.4c1.4,0 2.8,16.0 4.2,16.0c1.4,0 2.8,-16.0 4.2,-16.0h4.2c1.4,0 2.8,16.0 4.2,16.0h4.2c1.4,0 2.8,-16.0 4.2,-16.0c1.4,0 2.8,16.0 4.2,16.0c1.4,0 2.8,-16.0 4.2,-16.0c1.4,0 2.8,16.0 4.2,16.0c1.4,0 2.8,-16.0 4.2,-16.0h4.2c1.4,0 2.8,16.0 4.2,16.0c1.4,0 2.8,-16.0 4.2,-16.0h4.2c1.4,0 2.8,16.0 4.2,16.0c1.4,0 2.8,-16.0 4.2,-16.0h8.4c1.4,0 2.8,16.0 4.2,16.0h4.2c1.4,0 2.8,-16.0 4.2,-16.0h16.8c1.4,0 2.8,16.0 4.2,16.0c1.4,0 2.8,-16.0 4.2,-16.0" fill="none" stroke="#e7ade4" stroke-width="1.3"/><path d="M1352.9,997.8h4.2c1.4,0 2.8,-16.0 4.2,-16.0c1.4,0 2.8,16.0 4.2,16.0c1.4,0 2.8,-16.0 4.2,-16.0c1.4,0 2.8,16.0 4.2,16.0c1.4,0 2.8,-16.0 4.2,-16.0h8.4c1.4,0 2.8,16.0 4.2,16.0h8.4c1.4,0 2.8,-16.0 4.2,-16.0h4.2c1.4,0 2.8,16.0 4.2,16.0h12.6c1.4,0 2.8,-16.0 4.2,-16.0c1.4,0 2.8,16.0 4.2,16.0h4.2c1.4,0 2.8,-16.0 4.2,-16.0h8.4c1.4,0 2.8,16.0 4.2,16.0h16.8c1.4,0 2.8,-16.0 4.2,-16.0h4.2c1.4,0 2.8,16.0 4.2,16.0c1.4,0 2.8,-16.0 4.2,-16.0h12.6c1.4,0 2.8,16.0 4.2,16.0h16.8c1.4,0 2.8,-16.0 4.2,-16.0h8.4c1.4,0 2.8,16.0 4.2,16.0h4.2c1.4,0 2.8,-16.0 4.2,-16.0h42.1c1.4,0 2.8,16.0 4.2,16.0h4.2c1.4,0 2.8,-16.0 4.2,-16.0h8.4c1.4,0 2.8,16.0 4.2,16.0h4.2c1.4,0 2.8,-16.0 4.2,-16.0c1.4,0 2.8,16.0 4.2,16.0h25.2c1.4,0 2.8,-16.0 4.2,-16.0h12.6c1.4,0 2.8,16.0 4.2,16.0c1.4,0 2.8,-16.0 4.2,-16.0h4.2c1.4,0 2.8,16.0 4.2,16.0h12.6c1.4,0 2.8,-16.0 4.2,-16.0h12.6c1.4,0 2.8,16.0 4.2,16.0h8.4c1.4,0 2.8,-16.0 4.2,-16.0c1.4,0 2.8,16.0 4.2,16.0h8.4c1.4,0 2.8,-16.0 4.2,-16.0h12.6c1.4,0 2.8,16.0 4.2,16.0h8.4c1.4,0 2.8,-16.0 4.2,-16.0h8.4c1.4,0 2.8,16.0 4.2,16.0h21.0c1.4,0 2.8,-16.0 4.2,-16.0h4.2c1.4,0 2.8,16.0 4.2,16.0h4.2c1.4,0 2.8,-16.0 4.2,-16.0h92.6c1.4,0 2.8,16.0 4.2,16.0c1.4,0 2.8,-16.0 4.2,-16.0h33.7c1.4,0 2.8,16.0 4.2,16.0h12.6c1.4,0 2.8,-16.0 4.2,-16.0c1.4,0 2.8,16.0 4.2,16.0c1.4,0 2.8,-16.0 4.2,-16.0h25.2c1.4,0 2.8,16.0 4.2,16.0c1.4,0 2.8,-16.0 4.2,-16.0h8.4c1.4,0 2.8,16.0 4.2,16.0c1.4,0 2.8,-16.0 4.2,-16.0h25.2c1.4,0 2.8,16.0 4.2,16.0h4.2c1.4,0 2.8,-16.0 4.2,-16.0c1.4,0 2.8,16.0 4.2,16.0c1.4,0 2.8,-16.0 4.2,-16.0h16.8c1.4,0 2.8,16.0 4.2,16.0h21.0c1.4,0 2.8,-16.0 4.2,-16.0h8.4c1.4,0 2.8,16.0 4.2,16.0h4.2c1.4,0 2.8,-16.0 4.2,-16.0h8.4c1.4,0 2.8,16.0 4.2,16.0" fill="none" stroke="#bbddb0" stroke-width="1.3"/><path d="M1352.9,933.7c1.4,0 2.8,-16.0 4.2,-16.0h4.2c1.4,0 2.8,16.0 4.2,16.0c1.4,0 2.8,-16.0 4.2,-16.0c1.4,0 2.8,16.0 4.2,16.0c1.4,0 2.8,-16.0 4.2,-16.0h4.2c1.4,0 2.8,16.0 4.2,16.0h16.8c1.4,0 2.8,-16.0 4.2,-16.0h4.2c1.4,0 2.8,16.0 4.2,16.0h8.4c1.4,0 2.8,-16.0 4.2,-16.0h12.6c1.4,0 2.8,16.0 4.2,16.0h4.2c1.4,0 2.8,-16.0 4.2,-16.0h8.4c1.4,0 2.8,16.0 4.2,16.0c1.4,0 2.8,-16.0 4.2,-16.0c1.4,0 2.8,16.0 4.2,16.0h21.0c1.4,0 2.8,-16.0 4.2,-16.0c1.4,0 2.8,16.0 4.2,16.0c1.4,0 2.8,-16.0 4.2,-16.0h37.9c1.4,0 2.8,16.0 4.2,16.0h8.4c1.4,0 2.8,-16.0 4.2,-16.0h25.2c1.4,0 2.8,16.0 4.2,16.0c1.4,0 2.8,-16.0 4.2,-16.0h4.2c1.4,0 2.8,16.0 4.2,16.0c1.4,0 2.8,-16.0 4.2,-16.0h12.6c1.4,0 2.8,16.0 4.2,16.0c1.4,0 2.8,-16.0 4.2,-16.0h4.2c1.4,0 2.8,16.0 4.2,16.0h8.4c1.4,0 2.8,-16.0 4.2,-16.0c1.4,0 2.8,16.0 4.2,16.0h16.8c1.4,0 2.8,-16.0 4.2,-16.0h12.6c1.4,0 2.8,16.0 4.2,16.0c1.4,0 2.8,-16.0 4.2,-16.0h33.7c1.4,0 2.8,16.0 4.2,16.0h4.2c1.4,0 2.8,-16.0 4.2,-16.0c1.4,0 2.8,16.0 4.2,16.0c1.4,0 2.8,-16.0 4.2,-16.0c1.4,0 2.8,16.0 4.2,16.0h16.8c1.4,0 2.8,-16.0 4.2,-16.0c1.4,0 2.8,16.0 4.2,16.0h16.8c1.4,0 2.8,-16.0 4.2,-16.0h12.6c1.4,0 2.8,16.0 4.2,16.0h12.6c19.6,0 39.3,-16.0 58.9,-16.0h12.6c1.4,0 2.8,16.0 4.2,16.0c1.4,0 2.8,-16.0 4.2,-16.0c1.4,0 2.8,16.0 4.2,16.0h4.2c1.4,0 2.8,-16.0 4.2,-16.0h4.2c1.4,0 2.8,16.0 4.2,16.0c1.4,0 2.8,-16.0 4.2,-16.0h12.6c1.4,0 2.8,16.0 4.2,16.0c1.4,0 2.8,-16.0 4.2,-16.0c1.4,0 2.8,16.0 4.2,16.0h4.2c1.4,0 2.8,-16.0 4.2,-16.0h12.6c1.4,0 2.8,16.0 4.2,16.0h12.6c1.4,0 2.8,-16.0 4.2,-16.0h12.6c1.4,0 2.8,16.0 4.2,16.0c1.4,0 2.8,-16.0 4.2,-16.0h4.2c1.4,0 2.8,16.0 4.2,16.0c1.4,0 2.8,-16.0 4.2,-16.0c1.4,0 2.8,16.0 4.2,16.0c1.4,0 2.8,-16.0 4.2,-16.0h4.2c1.4,0 2.8,16.0 4.2,16.0h8.4c1.4,0 2.8,-16.0 4.2,-16.0h29.5c1.4,0 2.8,16.0 4.2,16.0c1.4,0 2.8,-16.0 4.2,-16.0h8.4c1.4,0 2.8,16.0 4.2,16.0h16.8c1.4,0 2.8,-16.0 4.2,-16.0c1.4,0 2.8,16.0 4.2,16.0h12.6c1.4,0 2.8,-16.0 4.2,-16.0c1.4,0 2.8,16.0 4.2,16.0h8.4" fill="none" stroke="#2c6ac8" stroke-width="1.3"/><path d="M1352.9,997.8c1.4,0 2.8,16.0 4.2,16.0c1.4,0 2.8,-16.0 4.2,-16.0h16.8c1.4,0 2.8,16.0 4.2,16.0h16.8c1.4,0 2.8,-16.0 4.2,-16.0c1.4,0 2.8,16.0 4.2,16.0c1.4,0 2.8,-16.0 4.2,-16.0h4.2c1.4,0 2.8,16.0 4.2,16.0c1.4,0 2.8,-16.0 4.2,-16.0h8.4c1.4,0 2.8,16.0 4.2,16.0c1.4,0 2.8,-16.0 4.2,-16.0h12.6c1.4,0 2.8,16.0 4.2,16.0h16.8c1.4,0 2.8,-16.0 4.2,-16.0c1.4,0 2.8,16.0 4.2,16.0c1.4,0 2.8,-16.0 4.2,-16.0h16.8c1.4,0 2.8,16.0 4.2,16.0h4.2c1.4,0 2.8,-16.0 4.2,-16.0h4.2c1.4,0 2.8,16.0 4.2,16.0h16.8c1.4,0 2.8,-16.0 4.2,-16.0h12.6c1.4,0 2.8,16.0 4.2,16.0c1.4,0 2.8,-16.0 4.2,-16.0h4.2c1.4,0 2.8,16.0 4.2,16.0c1.4,0 2.8,-16.0 4.2,-16.0c1.4,0 2.8,16.0 4.2,16.0h8.4c1.4,0 2.8,-16.0 4.2,-16.0h21.0c1.4,0 2.8,16.0 4.2,16.0c1.4,0 2.8,-16.0 4.2,-16.0h4.2c1.4,0 2.8,16.0 4.2,16.0h4.2c1.4,0 2.8,-16.0 4.2,-16.0h4.2c1.4,0 2.8,16.0 4.2,16.0h12.6c1.4,0 2.8,-16.0 4.2,-16.0h4.2c1.4,0 2.8,16.0 4.2,16.0c1.4,0 2.8,-16.0 4.2,-16.0c1.4,0 2.8,16.0 4.2,16.0c1.4,0 2.8,-16.0 4.2,-16.0c1.4,0 2.8,16.0 4.2,16.0c1.4,0 2.8,-16.0 4.2,-16.0h29.5c1.4,0 2.8,16.0 4.2,16.0h8.4c1.4,0 2.8,-16.0 4.2,-16.0h8.4c1.4,0 2.8,16.0 4.2,16.0h8.4c1.4,0 2.8,-16.0 4.2,-16.0h4.2c1.4,0 2.8,16.0 4.2,16.0h4.2c1.4,0 2.8,-16.0 4.2,-16.0h8.4c1.4,0 2.8,16.0 4.2,16.0c1.4,0 2.8,-16.0 4.2,-16.0h4.2c1.4,0 2.8,16.0 4.2,16.0c1.4,0 2.8,-16.0 4.2,-16.0c1.4,0 2.8,16.0 4.2,16.0h8.4c1.4,0 2.8,-16.0 4.2,-16.0h63.1c1.4,0 2.8,16.0 4.2,16.0h16.8c1.4,0 2.8,-16.0 4.2,-16.0c1.4,0 2.8,16.0 4.2,16.0h12.6c1.4,0 2.8,-16.0 4.2,-16.0h12.6c1.4,0 2.8,16.0 4.2,16.0c1.4,0 2.8,-16.0 4.2,-16.0c1.4,0 2.8,16.0 4.2,16.0h12.6c1.4,0 2.8,-16.0 4.2,-16.0c1.4,0 2.8,16.0 4.2,16.0c1.4,0 2.8,-16.0 4.2,-16.0h16.8c1.4,0 2.8,16.0 4.2,16.0c1.4,0 2.8,-16.0 4.2,-16.0c1.4,0 2.8,16.0 4.2,16.0h16.8c1.4,0 2.8,-16.0 4.2,-16.0h4.2c1.4,0 2.8,16.0 4.2,16.0c1.4,0 2.8,-16.0 4.2,-16.0h12.6c1.4,0 2.8,16.0 4.2,16.0c1.4,0 2.8,-16.0 4.2,-16.0c1.4,0 2.8,16.0 4.2,16.0c1.4,0 2.8,-16.0 4.2,-16.0h4.2c1.4,0 2.8,16.0 4.2,16.0c1.4,0 2.8,-16.0 4.2,-16.0h4.2c1.4,0 2.8,16.0 4.2,16.0h8.4c1.4,0 2.8,-16.0 4.2,-16.0h4.2c1.4,0 2.8,16.0 4.2,16.0c1.4,0 2.8,-16.0 4.2,-16.0h4.2c1.4,0 2.8,16.0 4.2,16.0c1.4,0 2.8,-16.0 4.2,-16.0c1.4,0 2.8,16.0 4.2,16.0h12.6c1.4,0 2.8,-16.0 4.2,-16.0h4.2c1.4,0 2.8,16.0 4.2,16.0" fill="none" stroke="#91bcff" stroke-width="1.3"/><path d="M1352.9,1013.8h16.8c1.4,0 2.8,-16.0 4.2,-16.0h4.2c1.4,0 2.8,16.0 4.2,16.0c1.4,0 2.8,-16.0 4.2,-16.0h4.2c1.4,0 2.8,16.0 4.2,16.0c1.4,0 2.8,-16.0 4.2,-16.0h4.2c1.4,0 2.8,16.0 4.2,16.0h4.2c1.4,0 2.8,-16.0 4.2,-16.0h12.6c1.4,0 2.8,16.0 4.2,16.0h16.8c1.4,0 2.8,-16.0 4.2,-16.0c1.4,0 2.8,16.0 4.2,16.0c1.4,0 2.8,-16.0 4.2,-16.0h8.4c1.4,0 2.8,16.0 4.2,16.0c1.4,0 2.8,-16.0 4.2,-16.0c1.4,0 2.8,16.0 4.2,16.0c1.4,0 2.8,-16.0 4.2,-16.0h42.1c1.4,0 2.8,16.0 4.2,16.0c1.4,0 2.8,-16.0 4.2,-16.0h58.9c1.4,0 2.8,16.0 4.2,16.0h4.2c1.4,0 2.8,-16.0 4.2,-16.0h4.2c1.4,0 2.8,16.0 4.2,16.0c1.4,0 2.8,-16.0 4.2,-16.0h4.2c1.4,0 2.8,16.0 4.2,16.0h4.2c1.4,0 2.8,-16.0 4.2,-16.0h16.8c1.4,0 2.8,16.0 4.2,16.0c1.4,0 2.8,-16.0 4.2,-16.0h8.4c1.4,0 2.8,16.0 4.2,16.0c1.4,0 2.8,-16.0 4.2,-16.0h25.2c1.4,0 2.8,16.0 4.2,16.0c1.4,0 2.8,-16.0 4.2,-16.0h8.4c1.4,0 2.8,16.0 4.2,16.0h4.2c1.4,0 2.8,-16.0 4.2,-16.0c1.4,0 2.8,16.0 4.2,16.0h21.0c1.4,0 2.8,-16.0 4.2,-16.0h8.4c1.4,0 2.8,16.0 4.2,16.0h12.6c1.4,0 2.8,-16.0 4.2,-16.0c1.4,0 2.8,16.0 4.2,16.0h12.6c1.4,0 2.8,-16.0 4.2,-16.0h8.4c1.4,0 2.8,16.0 4.2,16.0h67.3c1.4,0 2.8,-16.0 4.2,-16.0h8.4c1.4,0 2.8,16.0 4.2,16.0h16.8c1.4,0 2.8,-16.0 4.2,-16.0c1.4,0 2.8,16.0 4.2,16.0h12.6c1.4,0 2.8,-16.0 4.2,-16.0c1.4,0 2.8,16.0 4.2,16.0h16.8c1.4,0 2.8,-16.0 4.2,-16.0c1.4,0 2.8,16.0 4.2,16.0c1.4,0 2.8,-16.0 4.2,-16.0c1.4,0 2.8,16.0 4.2,16.0c1.4,0 2.8,-16.0 4.2,-16.0h8.4c1.4,0 2.8,16.0 4.2,16.0h21.0c1.4,0 2.8,-16.0 4.2,-16.0c1.4,0 2.8,16.0 4.2,16.0h63.1c1.4,0 2.8,-16.0 4.2,-16.0c1.4,0 2.8,16.0 4.2,16.0c1.4,0 2.8,-16.0 4.2,-16.0h25.2c1.4,0 2.8,16.0 4.2,16.0h4.2c1.4,0 2.8,-16.0 4.2,-16.0h21.0" fill="none" stroke="#f39898" stroke-width="1.3"/><path d="M1352.9,917.6h8.4c1.4,0 2.8,-16.0 4.2,-16.0c1.4,0 2.8,16.0 4.2,16.0h8.4c1.4,0 2.8,-16.0 4.2,-16.0c1.4,0 2.8,16.0 4.2,16.0c1.4,0 2.8,-16.0 4.2,-16.0h8.4c1.4,0 2.8,16.0 4.2,16.0c1.4,0 2.8,-16.0 4.2,-16.0h16.8c1.4,0 2.8,16.0 4.2,16.0h12.6c1.4,0 2.8,-16.0 4.2,-16.0h12.6c1.4,0 2.8,16.0 4.2,16.0h12.6c1.4,0 2.8,-16.0 4.2,-16.0c1.4,0 2.8,16.0 4.2,16.0c1.4,0 2.8,-16.0 4.2,-16.0c1.4,0 2.8,16.0 4.2,16.0c1.4,0 2.8,-16.0 4.2,-16.0h4.2c1.4,0 2.8,16.0 4.2,16.0h37.9c1.4,0 2.8,-16.0 4.2,-16.0c1.4,0 2.8,16.0 4.2,16.0c1.4,0 2.8,-16.0 4.2,-16.0c1.4,0 2.8,16.0 4.2,16.0c1.4,0 2.8,-16.0 4.2,-16.0h12.6c1.4,0 2.8,16.0 4.2,16.0c1.4,0 2.8,-16.0 4.2,-16.0h4.2c1.4,0 2.8,16.0 4.2,16.0c1.4,0 2.8,-16.0 4.2,-16.0h4.2c1.4,0 2.8,16.0 4.2,16.0h16.8c1.4,0 2.8,-16.0 4.2,-16.0h8.4c1.4,0 2.8,16.0 4.2,16.0c1.4,0 2.8,-16.0 4.2,-16.0h4.2c1.4,0 2.8,16.0 4.2,16.0h8.4c1.4,0 2.8,-16.0 4.2,-16.0c1.4,0 2.8,16.0 4.2,16.0h16.8c1.4,0 2.8,-16.0 4.2,-16.0c1.4,0 2.8,16.0 4.2,16.0h8.4c1.4,0 2.8,-16.0 4.2,-16.0h4.2c1.4,0 2.8,16.0 4.2,16.0h4.2c1.4,0 2.8,-16.0 4.2,-16.0c1.4,0 2.8,16.0 4.2,16.0c1.4,0 2.8,-16.0 4.2,-16.0h12.6c1.4,0 2.8,16.0 4.2,16.0h4.2c1.4,0 2.8,-16.0 4.2,-16.0c1.4,0 2.8,16.0 4.2,16.0h4.2c1.4,0 2.8,-16.0 4.2,-16.0h4.2c1.4,0 2.8,16.0 4.2,16.0c1.4,0 2.8,-16.0 4.2,-16.0c1.4,0 2.8,16.0 4.2,16.0h4.2c1.4,0 2.8,-16.0 4.2,-16.0h4.2c1.4,0 2.8,16.0 4.2,16.0c1.4,0 2.8,-16.0 4.2,-16.0h12.6c1.4,0 2.8,16.0 4.2,16.0c1.4,0 2.8,-16.0 4.2,-16.0h67.3c1.4,0 2.8,16.0 4.2,16.0c1.4,0 2.8,-16.0 4.2,-16.0h25.2c1.4,0 2.8,16.0 4.2,16.0c1.4,0 2.8,-16.0 4.2,-16.0h21.0c1.4,0 2.8,16.0 4.2,16.0h12.6c1.4,0 2.8,-16.0 4.2,-16.0h16.8c1.4,0 2.8,16.0 4.2,16.0h4.2c1.4,0 2.8,-16.0 4.2,-16.0h4.2c1.4,0 2.8,16.0 4.2,16.0h4.2c1.4,0 2.8,-16.0 4.2,-16.0c1.4,0 2.8,16.0 4.2,16.0h4.2c1.4,0 2.8,-16.0 4.2,-16.0c1.4,0 2.8,16.0 4.2,16.0h8.4c1.4,0 2.8,-16.0 4.2,-16.0c1.4,0 2.8,16.0 4.2,16.0h12.6c1.4,0 2.8,-16.0 4.2,-16.0c1.4,0 2.8,16.0 4.2,16.0h8.4c1.4,0 2.8,-16.0 4.2,-16.0c1.4,0 2.8,16.0 4.2,16.0h4.2c1.4,0 2.8,-16.0 4.2,-16.0h4.2c1.4,0 2.8,16.0 4.2,16.0h4.2c1.4,0 2.8,-16.0 4.2,-16.0h12.6c1.4,0 2.8,16.0 4.2,16.0c1.4,0 2.8,-16.0 4.2,-16.0h4.2c1.4,0 2.8,16.0 4.2,16.0c1.4,0 2.8,-16.0 4.2,-16.0h12.6c1.4,0 2.8,16.0 4.2,16.0" fill="none" stroke="#f5d89e" stroke-width="1.3"/><path d="M1352.9,885.6h4.2c1.4,0 2.8,16.0 4.2,16.0c1.4,0 2.8,-16.0 4.2,-16.0c1.4,0 2.8,16.0 4.2,16.0h4.2c1.4,0 2.8,-16.0 4.2,-16.0h4.2c1.4,0 2.8,16.0 4.2,16.0h50.5c1.4,0 2.8,-16.0 4.2,-16.0h8.4c1.4,0 2.8,16.0 4.2,16.0c1.4,0 2.8,-16.0 4.2,-16.0c1.4,0 2.8,16.0 4.2,16.0c1.4,0 2.8,-16.0 4.2,-16.0h4.2c1.4,0 2.8,16.0 4.2,16.0c1.4,0 2.8,-16.0 4.2,-16.0h8.4c1.4,0 2.8,16.0 4.2,16.0c1.4,0 2.8,-16.0 4.2,-16.0c1.4,0 2.8,16.0 4.2,16.0c1.4,0 2.8,-16.0 4.2,-16.0h12.6c1.4,0 2.8,16.0 4.2,16.0h8.4c1.4,0 2.8,-16.0 4.2,-16.0c1.4,0 2.8,16.0 4.2,16.0h12.6c1.4,0 2.8,-16.0 4.2,-16.0h4.2c1.4,0 2.8,16.0 4.2,16.0h16.8c1.4,0 2.8,-16.0 4.2,-16.0c1.4,0 2.8,16.0 4.2,16.0h37.9c1.4,0 2.8,-16.0 4.2,-16.0h8.4c1.4,0 2.8,16.0 4.2,16.0h4.2c1.4,0 2.8,-16.0 4.2,-16.0h16.8c1.4,0 2.8,16.0 4.2,16.0c1.4,0 2.8,-16.0 4.2,-16.0c1.4,0 2.8,16.0 4.2,16.0h4.2c1.4,0 2.8,-16.0 4.2,-16.0h4.2c1.4,0 2.8,16.0 4.2,16.0c1.4,0 2.8,-16.0 4.2,-16.0c1.4,0 2.8,16.0 4.2,16.0h21.0c1.4,0 2.8,-16.0 4.2,-16.0h8.4c1.4,0 2.8,16.0 4.2,16.0c1.4,0 2.8,-16.0 4.2,-16.0c1.4,0 2.8,16.0 4.2,16.0h8.4c1.4,0 2.8,-16.0 4.2,-16.0h4.2c1.4,0 2.8,16.0 4.2,16.0h21.0c1.4,0 2.8,-16.0 4.2,-16.0h8.4c1.4,0 2.8,16.0 4.2,16.0h4.2c1.4,0 2.8,-16.0 4.2,-16.0c1.4,0 2.8,16.0 4.2,16.0c1.4,0 2.8,-16.0 4.2,-16.0h117.8c1.4,0 2.8,16.0 4.2,16.0c1.4,0 2.8,-16.0 4.2,-16.0c1.4,0 2.8,16.0 4.2,16.0c1.4,0 2.8,-16.0 4.2,-16.0h12.6c1.4,0 2.8,16.0 4.2,16.0h4.2c1.4,0 2.8,-16.0 4.2,-16.0h4.2c1.4,0 2.8,16.0 4.2,16.0h33.7c1.4,0 2.8,-16.0 4.2,-16.0h8.4c1.4,0 2.8,16.0 4.2,16.0h12.6c1.4,0 2.8,-16.0 4.2,-16.0h4.2c1.4,0 2.8,16.0 4.2,16.0h21.0c1.4,0 2.8,-16.0 4.2,-16.0h21.0c1.4,0 2.8,16.0 4.2,16.0c1.4,0 2.8,-16.0 4.2,-16.0c1.4,0 2.8,16.0 4.2,16.0h8.4c1.4,0 2.8,-16.0 4.2,-16.0h8.4c1.4,0 2.8,16.0 4.2,16.0c1.4,0 2.8,-16.0 4.2,-16.0h12.6" fill="none" stroke="#fae037" stroke-width="1.3"/><path d="M1352.9,917.6h16.8c1.4,0 2.8,16.0 4.2,16.0c1.4,0 2.8,-16.0 4.2,-16.0c1.4,0 2.8,16.0 4.2,16.0c1.4,0 2.8,-16.0 4.2,-16.0c1.4,0 2.8,16.0 4.2,16.0h8.4c1.4,0 2.8,-16.0 4.2,-16.0c1.4,0 2.8,16.0 4.2,16.0h33.7c1.4,0 2.8,-16.0 4.2,-16.0c1.4,0 2.8,16.0 4.2,16.0c1.4,0 2.8,-16.0 4.2,-16.0h4.2c1.4,0 2.8,16.0 4.2,16.0c1.4,0 2.8,-16.0 4.2,-16.0c1.4,0 2.8,16.0 4.2,16.0h25.2c1.4,0 2.8,-16.0 4.2,-16.0h4.2c1.4,0 2.8,16.0 4.2,16.0h12.6c1.4,0 2.8,-16.0 4.2,-16.0c1.4,0 2.8,16.0 4.2,16.0c1.4,0 2.8,-16.0 4.2,-16.0h4.2c1.4,0 2.8,16.0 4.2,16.0c1.4,0 2.8,-16.0 4.2,-16.0c1.4,0 2.8,16.0 4.2,16.0c1.4,0 2.8,-16.0 4.2,-16.0c1.4,0 2.8,16.0 4.2,16.0h8.4c1.4,0 2.8,-16.0 4.2,-16.0h4.2c1.4,0 2.8,16.0 4.2,16.0h4.2c1.4,0 2.8,-16.0 4.2,-16.0h29.5c1.4,0 2.8,16.0 4.2,16.0c1.4,0 2.8,-16.0 4.2,-16.0h8.4c1.4,0 2.8,16.0 4.2,16.0h21.0c1.4,0 2.8,-16.0 4.2,-16.0h12.6c1.4,0 2.8,16.0 4.2,16.0c1.4,0 2.8,-16.0 4.2,-16.0h12.6c1.4,0 2.8,16.0 4.2,16.0h8.4c1.4,0 2.8,-16.0 4.2,-16.0c1.4,0 2.8,16.0 4.2,16.0h4.2c1.4,0 2.8,-16.0 4.2,-16.0h4.2c1.4,0 2.8,16.0 4.2,16.0c1.4,0 2.8,-16.0 4.2,-16.0c1.4,0 2.8,16.0 4.2,16.0c1.4,0 2.8,-16.0 4.2,-16.0h8.4c1.4,0 2.8,16.0 4.2,16.0h12.6c1.4,0 2.8,-16.0 4.2,-16.0c1.4,0 2.8,16.0 4.2,16.0c1.4,0 2.8,-16.0 4.2,-16.0h8.4c1.4,0 2.8,16.0 4.2,16.0h8.4c1.4,0 2.8,-16.0 4.2,-16.0h84.1c1.4,0 2.8,16.0 4.2,16.0h50.5c1.4,0 2.8,-16.0 4.2,-16.0h8.4c1.4,0 2.8,16.0 4.2,16.0h4.2c1.4,0 2.8,-16.0 4.2,-16.0h37.9c1.4,0 2.8,16.0 4.2,16.0h8.4c1.4,0 2.8,-16.0 4.2,-16.0h21.0c1.4,0 2.8,16.0 4.2,16.0h25.2c1.4,0 2.8,-16.0 4.2,-16.0h67.3c1.4,0 2.8,16.0 4.2,16.0h4.2c1.4,0 2.8,-16.0 4.2,-16.0h4.2c1.4,0 2.8,16.0 4.2,16.0" fill="none" stroke="#f35466" stroke-width="1.3"/><path d="M1352.9,981.8h4.2c1.4,0 2.8,16.0 4.2,16.0h25.2c1.4,0 2.8,-16.0 4.2,-16.0h4.2c1.4,0 2.8,16.0 4.2,16.0h16.8c1.4,0 2.8,-16.0 4.2,-16.0h4.2c1.4,0 2.8,16.0 4.2,16.0h8.4c1.4,0 2.8,-16.0 4.2,-16.0h12.6c1.4,0 2.8,16.0 4.2,16.0h8.4c1.4,0 2.8,-16.0 4.2,-16.0c1.4,0 2.8,16.0 4.2,16.0c1.4,0 2.8,-16.0 4.2,-16.0c1.4,0 2.8,16.0 4.2,16.0c1.4,0 2.8,-16.0 4.2,-16.0h8.4c1.4,0 2.8,16.0 4.2,16.0h8.4c1.4,0 2.8,-16.0 4.2,-16.0h4.2c1.4,0 2.8,16.0 4.2,16.0h16.8c1.4,0 2.8,-16.0 4.2,-16.0h12.6c1.4,0 2.8,16.0 4.2,16.0c1.4,0 2.8,-16.0 4.2,-16.0c1.4,0 2.8,16.0 4.2,16.0c1.4,0 2.8,-16.0 4.2,-16.0h16.8c1.4,0 2.8,16.0 4.2,16.0h12.6c1.4,0 2.8,-16.0 4.2,-16.0c1.4,0 2.8,16.0 4.2,16.0c1.4,0 2.8,-16.0 4.2,-16.0c1.4,0 2.8,16.0 4.2,16.0h4.2c1.4,0 2.8,-16.0 4.2,-16.0c1.4,0 2.8,16.0 4.2,16.0h12.6c1.4,0 2.8,-16.0 4.2,-16.0c1.4,0 2.8,16.0 4.2,16.0c1.4,0 2.8,-16.0 4.2,-16.0h4.2c1.4,0 2.8,16.0 4.2,16.0c1.4,0 2.8,-16.0 4.2,-16.0h4.2c1.4,0 2.8,16.0 4.2,16.0c1.4,0 2.8,-16.0 4.2,-16.0c1.4,0 2.8,16.0 4.2,16.0h4.2c1.4,0 2.8,-16.0 4.2,-16.0c1.4,0 2.8,16.0 4.2,16.0c1.4,0 2.8,-16.0 4.2,-16.0c1.4,0 2.8,16.0 4.2,16.0h16.8c1.4,0 2.8,-16.0 4.2,-16.0c1.4,0 2.8,16.0 4.2,16.0h4.2c1.4,0 2.8,-16.0 4.2,-16.0c1.4,0 2.8,16.0 4.2,16.0h4.2c1.4,0 2.8,-16.0 4.2,-16.0c1.4,0 2.8,16.0 4.2,16.0h8.4c1.4,0 2.8,-16.0 4.2,-16.0c1.4,0 2.8,16.0 4.2,16.0h8.4c1.4,0 2.8,-16.0 4.2,-16.0h12.6c1.4,0 2.8,16.0 4.2,16.0h4.2c1.4,0 2.8,-16.0 4.2,-16.0c1.4,0 2.8,16.0 4.2,16.0h4.2c1.4,0 2.8,-16.0 4.2,-16.0c1.4,0 2.8,16.0 4.2,16.0c19.6,0 39.3,-16.0 58.9,-16.0c1.4,0 2.8,16.0 4.2,16.0h16.8c1.4,0 2.8,-16.0 4.2,-16.0c1.4,0 2.8,16.0 4.2,16.0c1.4,0 2.8,-16.0 4.2,-16.0h4.2c1.4,0 2.8,16.0 4.2,16.0h12.6c1.4,0 2.8,-16.0 4.2,-16.0c1.4,0 2.8,16.0 4.2,16.0h4.2c1.4,0 2.8,-16.0 4.2,-16.0c1.4,0 2.8,16.0 4.2,16.0c1.4,0 2.8,-16.0 4.2,-16.0h8.4c1.4,0 2.8,16.0 4.2,16.0c1.4,0 2.8,-16.0 4.2,-16.0c1.4,0 2.8,16.0 4.2,16.0c1.4,0 2.8,-16.0 4.2,-16.0h4.2c1.4,0 2.8,16.0 4.2,16.0c1.4,0 2.8,-16.0 4.2,-16.0h8.4c1.4,0 2.8,16.0 4.2,16.0h4.2c1.4,0 2.8,-16.0 4.2,-16.0c1.4,0 2.8,16.0 4.2,16.0c1.4,0 2.8,-16.0 4.2,-16.0h4.2c1.4,0 2.8,16.0 4.2,16.0h4.2c1.4,0 2.8,-16.0 4.2,-16.0c1.4,0 2.8,16.0 4.2,16.0h4.2c1.4,0 2.8,-16.0 4.2,-16.0h8.4c1.4,0 2.8,16.0 4.2,16.0h4.2c1.4,0 2.8,-16.0 4.2,-16.0c1.4,0 2.8,16.0 4.2,16.0c1.4,0 2.8,-16.0 4.2,-16.0c1.4,0 2.8,16.0 4.2,16.0c1.4,0 2.8,-16.0 4.2,-16.0c1.4,0 2.8,16.0 4.2,16.0c1.4,0 2.8,-16.0 4.2,-16.0c1.4,0 2.8,16.0 4.2,16.0h8.4c1.4,0 2.8,-16.0 4.2,-16.0h8.4c1.4,0 2.8,16.0 4.2,16.0c1.4,0 2.8,-16.0 4.2,-16.0h12.6c1.4,0 2.8,16.0 4.2,16.0h4.2c1.4,0 2.8,-16.0 4.2,-16.0" fill="none" stroke="#f39898" stroke-width="1.3"/><path d="M1352.9,1045.9h4.2c1.4,0 2.8,-16.0 4.2,-16.0h12.6c1.4,0 2.8,16.0 4.2,16.0h8.4c1.4,0 2.8,-16.0 4.2,-16.0c1.4,0 2.8,16.0 4.2,16.0c1.4,0 2.8,-16.0 4.2,-16.0h25.2c1.4,0 2.8,16.0 4.2,16.0h4.2c1.4,0 2.8,-16.0 4.2,-16.0h25.2c1.4,0 2.8,16.0 4.2,16.0h4.2c1.4,0 2.8,-16.0 4.2,-16.0h12.6c1.4,0 2.8,16.0 4.2,16.0c1.4,0 2.8,-16.0 4.2,-16.0h12.6c1.4,0 2.8,16.0 4.2,16.0c1.4,0 2.8,-16.0 4.2,-16.0h33.7c1.4,0 2.8,16.0 4.2,16.0c1.4,0 2.8,-16.0 4.2,-16.0h16.8c1.4,0 2.8,16.0 4.2,16.0c1.4,0 2.8,-16.0 4.2,-16.0h37.9c1.4,0 2.8,16.0 4.2,16.0h4.2c1.4,0 2.8,-16.0 4.2,-16.0c1.4,0 2.8,16.0 4.2,16.0h16.8c1.4,0 2.8,-16.0 4.2,-16.0h8.4c1.4,0 2.8,16.0 4.2,16.0c1.4,0 2.8,-16.0 4.2,-16.0h25.2c1.4,0 2.8,16.0 4.2,16.0h4.2c1.4,0 2.8,-16.0 4.2,-16.0h16.8c1.4,0 2.8,16.0 4.2,16.0c1.4,0 2.8,-16.0 4.2,-16.0h4.2c1.4,0 2.8,16.0 4.2,16.0c1.4,0 2.8,-16.0 4.2,-16.0h16.8c1.4,0 2.8,16.0 4.2,16.0h4.2c1.4,0 2.8,-16.0 4.2,-16.0h16.8c1.4,0 2.8,16.0 4.2,16.0h4.2c1.4,0 2.8,-16.0 4.2,-16.0h21.0c19.6,0 39.3,16.0 58.9,16.0c1.4,0 2.8,-16.0 4.2,-16.0c1.4,0 2.8,16.0 4.2,16.0h12.6c1.4,0 2.8,-16.0 4.2,-16.0h12.6c1.4,0 2.8,16.0 4.2,16.0c1.4,0 2.8,-16.0 4.2,-16.0c1.4,0 2.8,16.0 4.2,16.0c1.4,0 2.8,-16.0 4.2,-16.0c1.4,0 2.8,16.0 4.2,16.0c1.4,0 2.8,-16.0 4.2,-16.0c1.4,0 2.8,16.0 4.2,16.0c1.4,0 2.8,-16.0 4.2,-16.0h16.8c1.4,0 2.8,16.0 4.2,16.0c1.4,0 2.8,-16.0 4.2,-16.0h8.4c1.4,0 2.8,16.0 4.2,16.0c1.4,0 2.8,-16.0 4.2,-16.0h12.6c1.4,0 2.8,16.0 4.2,16.0c1.4,0 2.8,-16.0 4.2,-16.0c1.4,0 2.8,16.0 4.2,16.0h4.2c1.4,0 2.8,-16.0 4.2,-16.0h12.6c1.4,0 2.8,16.0 4.2,16.0c1.4,0 2.8,-16.0 4.2,-16.0h12.6c1.4,0 2.8,16.0 4.2,16.0h4.2c1.4,0 2.8,-16.0 4.2,-16.0h25.2c1.4,0 2.8,16.0 4.2,16.0c1.4,0 2.8,-16.0 4.2,-16.0c1.4,0 2.8,16.0 4.2,16.0c1.4,0 2.8,-16.0 4.2,-16.0h33.7c1.4,0 2.8,16.0 4.2,16.0c1.4,0 2.8,-16.0 4.2,-16.0c1.4,0 2.8,16.0 4.2,16.0" fill="none" stroke="#79ddee" stroke-width="1.3"/><path d="M1352.9,901.6h12.6c1.4,0 2.8,-16.0 4.2,-16.0c1.4,0 2.8,16.0 4.2,16.0h12.6c1.4,0 2.8,-16.0 4.2,-16.0c1.4,0 2.8,16.0 4.2,16.0c1.4,0 2.8,-16.0 4.2,-16.0h8.4c1.4,0 2.8,16.0 4.2,16.0c1.4,0 2.8,-16.0 4.2,-16.0c1.4,0 2.8,16.0 4.2,16.0h8.4c1.4,0 2.8,-16.0 4.2,-16.0h4.2c1.4,0 2.8,16.0 4.2,16.0h4.2c1.4,0 2.8,-16.0 4.2,-16.0c1.4,0 2.8,16.0 4.2,16.0h4.2c1.4,0 2.8,-16.0 4.2,-16.0c1.4,0 2.8,16.0 4.2,16.0h8.4c1.4,0 2.8,-16.0 4.2,-16.0h12.6c1.4,0 2.8,16.0 4.2,16.0h16.8c1.4,0 2.8,-16.0 4.2,-16.0c1.4,0 2.8,16.0 4.2,16.0c1.4,0 2.8,-16.0 4.2,-16.0c1.4,0 2.8,16.0 4.2,16.0c1.4,0 2.8,-16.0 4.2,-16.0c1.4,0 2.8,16.0 4.2,16.0h4.2c1.4,0 2.8,-16.0 4.2,-16.0h4.2c1.4,0 2.8,16.0 4.2,16.0c1.4,0 2.8,-16.0 4.2,-16.0h4.2c1.4,0 2.8,16.0 4.2,16.0c1.4,0 2.8,-16.0 4.2,-16.0c1.4,0 2.8,16.0 4.2,16.0h4.2c1.4,0 2.8,-16.0 4.2,-16.0h4.2c1.4,0 2.8,16.0 4.2,16.0h8.4c1.4,0 2.8,-16.0 4.2,-16.0h4.2c1.4,0 2.8,16.0 4.2,16.0h4.2c1.4,0 2.8,-16.0 4.2,-16.0c1.4,0 2.8,16.0 4.2,16.0c1.4,0 2.8,-16.0 4.2,-16.0h4.2c1.4,0 2.8,16.0 4.2,16.0h12.6c1.4,0 2.8,-16.0 4.2,-16.0c1.4,0 2.8,16.0 4.2,16.0h8.4c1.4,0 2.8,-16.0 4.2,-16.0h12.6c1.4,0 2.8,16.0 4.2,16.0h4.2c1.4,0 2.8,-16.0 4.2,-16.0c1.4,0 2.8,16.0 4.2,16.0h8.4c1.4,0 2.8,-16.0 4.2,-16.0h8.4c1.4,0 2.8,16.0 4.2,16.0c1.4,0 2.8,-16.0 4.2,-16.0c1.4,0 2.8,16.0 4.2,16.0c1.4,0 2.8,-16.0 4.2,-16.0c1.4,0 2.8,16.0 4.2,16.0h8.4c1.4,0 2.8,-16.0 4.2,-16.0c1.4,0 2.8,16.0 4.2,16.0h8.4c1.4,0 2.8,-16.0 4.2,-16.0c1.4,0 2.8,16.0 4.2,16.0h8.4c1.4,0 2.8,-16.0 4.2,-16.0c1.4,0 2.8,16.0 4.2,16.0c1.4,0 2.8,-16.0 4.2,-16.0h4.2c1.4,0 2.8,16.0 4.2,16.0h8.4c1.4,0 2.8,-16.0 4.2,-16.0h71.5c1.4,0 2.8,16.0 4.2,16.0c1.4,0 2.8,-16.0 4.2,-16.0c1.4,0 2.8,16.0 4.2,16.0h4.2c1.4,0 2.8,-16.0 4.2,-16.0c1.4,0 2.8,16.0 4.2,16.0h12.6c1.4,0 2.8,-16.0 4.2,-16.0h8.4c1.4,0 2.8,16.0 4.2,16.0c1.4,0 2.8,-16.0 4.2,-16.0c1.4,0 2.8,16.0 4.2,16.0c1.4,0 2.8,-16.0 4.2,-16.0c1.4,0 2.8,16.0 4.2,16.0h16.8c1.4,0 2.8,-16.0 4.2,-16.0c1.4,0 2.8,16.0 4.2,16.0c1.4,0 2.8,-16.0 4.2,-16.0h8.4c1.4,0 2.8,16.0 4.2,16.0h21.0c1.4,0 2.8,-16.0 4.2,-16.0h4.2c1.4,0 2.8,16.0 4.2,16.0h12.6c1.4,0 2.8,-16.0 4.2,-16.0h12.6c1.4,0 2.8,16.0 4.2,16.0h4.2c1.4,0 2.8,-16.0 4.2,-16.0h4.2c1.4,0 2.8,16.0 4.2,16.0h12.6c1.4,0 2.8,-16.0 4.2,-16.0h12.6c1.4,0 2.8,16.0 4.2,16.0h29.5c1.4,0 2.8,-16.0 4.2,-16.0h8.4c1.4,0 2.8,16.0 4.2,16.0h4.2" fill="none" stroke="#f3cf1b" stroke-width="1.3"/><path d="M1352.9,1029.8c1.4,0 2.8,-16.0 4.2,-16.0c1.4,0 2.8,16.0 4.2,16.0c1.4,0 2.8,-16.0 4.2,-16.0h8.4c1.4,0 2.8,16.0 4.2,16.0c1.4,0 2.8,-16.0 4.2,-16.0h8.4c1.4,0 2.8,16.0 4.2,16.0c1.4,0 2.8,-16.0 4.2,-16.0h4.2c1.4,0 2.8,16.0 4.2,16.0h8.4c1.4,0 2.8,-16.0 4.2,-16.0h8.4c1.4,0 2.8,16.0 4.2,16.0h4.2c1.4,0 2.8,-16.0 4.2,-16.0c1.4,0 2.8,16.0 4.2,16.0c1.4,0 2.8,-16.0 4.2,-16.0h4.2c1.4,0 2.8,16.0 4.2,16.0h25.2c1.4,0 2.8,-16.0 4.2,-16.0h4.2c1.4,0 2.8,16.0 4.2,16.0h12.6c1.4,0 2.8,-16.0 4.2,-16.0h8.4c1.4,0 2.8,16.0 4.2,16.0h12.6c1.4,0 2.8,-16.0 4.2,-16.0h4.2c1.4,0 2.8,16.0 4.2,16.0h4.2c1.4,0 2.8,-16.0 4.2,-16.0c1.4,0 2.8,16.0 4.2,16.0h12.6c1.4,0 2.8,-16.0 4.2,-16.0c1.4,0 2.8,16.0 4.2,16.0h4.2c1.4,0 2.8,-16.0 4.2,-16.0h4.2c1.4,0 2.8,16.0 4.2,16.0h8.4c1.4,0 2.8,-16.0 4.2,-16.0h16.8c1.4,0 2.8,16.0 4.2,16.0h21.0c1.4,0 2.8,-16.0 4.2,-16.0c1.4,0 2.8,16.0 4.2,16.0c1.4,0 2.8,-16.0 4.2,-16.0h4.2c1.4,0 2.8,16.0 4.2,16.0h12.6c1.4,0 2.8,-16.0 4.2,-16.0c1.4,0 2.8,16.0 4.2,16.0c1.4,0 2.8,-16.0 4.2,-16.0h4.2c1.4,0 2.8,16.0 4.2,16.0h21.0c1.4,0 2.8,-16.0 4.2,-16.0h12.6c1.4,0 2.8,16.0 4.2,16.0h4.2c1.4,0 2.8,-16.0 4.2,-16.0h8.4c1.4,0 2.8,16.0 4.2,16.0c1.4,0 2.8,-16.0 4.2,-16.0h4.2c1.4,0 2.8,16.0 4.2,16.0c1.4,0 2.8,-16.0 4.2,-16.0h8.4c1.4,0 2.8,16.0 4.2,16.0h12.6c1.4,0 2.8,-16.0 4.2,-16.0h4.2c1.4,0 2.8,16.0 4.2,16.0c1.4,0 2.8,-16.0 4.2,-16.0h71.5c1.4,0 2.8,16.0 4.2,16.0h12.6c1.4,0 2.8,-16.0 4.2,-16.0c1.4,0 2.8,16.0 4.2,16.0h4.2c1.4,0 2.8,-16.0 4.2,-16.0h12.6c1.4,0 2.8,16.0 4.2,16.0h12.6c1.4,0 2.8,-16.0 4.2,-16.0h37.9c1.4,0 2.8,16.0 4.2,16.0h4.2c1.4,0 2.8,-16.0 4.2,-16.0h4.2c1.4,0 2.8,16.0 4.2,16.0h16.8c1.4,0 2.8,-16.0 4.2,-16.0c1.4,0 2.8,16.0 4.2,16.0c1.4,0 2.8,-16.0 4.2,-16.0h16.8c1.4,0 2.8,16.0 4.2,16.0h16.8c1.4,0 2.8,-16.0 4.2,-16.0h8.4c1.4,0 2.8,16.0 4.2,16.0c1.4,0 2.8,-16.0 4.2,-16.0c1.4,0 2.8,16.0 4.2,16.0h12.6c1.4,0 2.8,-16.0 4.2,-16.0c1.4,0 2.8,16.0 4.2,16.0h16.8c1.4,0 2.8,-16.0 4.2,-16.0h8.4" fill="none" stroke="#f35466" stroke-width="1.3"/><path d="M1352.9,981.8h8.4c1.4,0 2.8,16.0 4.2,16.0h4.2c1.4,0 2.8,-16.0 4.2,-16.0c1.4,0 2.8,16.0 4.2,16.0c1.4,0 2.8,-16.0 4.2,-16.0c1.4,0 2.8,16.0 4.2,16.0c1.4,0 2.8,-16.0 4.2,-16.0c1.4,0 2.8,16.0 4.2,16.0h4.2c1.4,0 2.8,-16.0 4.2,-16.0h12.6c1.4,0 2.8,16.0 4.2,16.0h4.2c1.4,0 2.8,-16.0 4.2,-16.0h12.6c1.4,0 2.8,16.0 4.2,16.0h33.7c1.4,0 2.8,-16.0 4.2,-16.0h8.4c1.4,0 2.8,16.0 4.2,16.0h8.4c1.4,0 2.8,-16.0 4.2,-16.0c1.4,0 2.8,16.0 4.2,16.0h12.6c1.4,0 2.8,-16.0 4.2,-16.0h8.4c1.4,0 2.8,16.0 4.2,16.0c1.4,0 2.8,-16.0 4.2,-16.0c1.4,0 2.8,16.0 4.2,16.0c1.4,0 2.8,-16.0 4.2,-16.0h4.2c1.4,0 2.8,16.0 4.2,16.0c1.4,0 2.8,-16.0 4.2,-16.0c1.4,0 2.8,16.0 4.2,16.0c1.4,0 2.8,-16.0 4.2,-16.0c1.4,0 2.8,16.0 4.2,16.0c1.4,0 2.8,-16.0 4.2,-16.0h42.1c1.4,0 2.8,16.0 4.2,16.0h4.2c1.4,0 2.8,-16.0 4.2,-16.0h4.2c1.4,0 2.8,16.0 4.2,16.0h4.2c1.4,0 2.8,-16.0 4.2,-16.0c1.4,0 2.8,16.0 4.2,16.0h8.4c1.4,0 2.8,-16.0 4.2,-16.0c1.4,0 2.8,16.0 4.2,16.0h4.2c1.4,0 2.8,-16.0 4.2,-16.0h16.8c1.4,0 2.8,16.0 4.2,16.0h25.2c1.4,0 2.8,-16.0 4.2,-16.0c1.4,0 2.8,16.0 4.2,16.0h29.5c1.4,0 2.8,-16.0 4.2,-16.0h16.8c1.4,0 2.8,16.0 4.2,16.0c1.4,0 2.8,-16.0 4.2,-16.0c1.4,0 2.8,16.0 4.2,16.0h88.4c1.4,0 2.8,-16.0 4.2,-16.0h4.2c1.4,0 2.8,16.0 4.2,16.0h8.4c1.4,0 2.8,-16.0 4.2,-16.0h4.2c1.4,0 2.8,16.0 4.2,16.0h4.2c1.4,0 2.8,-16.0 4.2,-16.0c1.4,0 2.8,16.0 4.2,16.0h21.0c1.4,0 2.8,-16.0 4.2,-16.0h4.2c1.4,0 2.8,16.0 4.2,16.0h4.2c1.4,0 2.8,-16.0 4.2,-16.0c1.4,0 2.8,16.0 4.2,16.0h16.8c1.4,0 2.8,-16.0 4.2,-16.0h4.2c1.4,0 2.8,16.0 4.2,16.0c1.4,0 2.8,-16.0 4.2,-16.0h16.8c1.4,0 2.8,16.0 4.2,16.0h25.2c1.4,0 2.8,-16.0 4.2,-16.0c1.4,0 2.8,16.0 4.2,16.0c1.4,0 2.8,-16.0 4.2,-16.0c1.4,0 2.8,16.0 4.2,16.0c1.4,0 2.8,-16.0 4.2,-16.0c1.4,0 2.8,16.0 4.2,16.0h16.8c1.4,0 2.8,-16.0 4.2,-16.0h12.6c1.4,0 2.8,16.0 4.2,16.0c1.4,0 2.8,-16.0 4.2,-16.0c1.4,0 2.8,16.0 4.2,16.0h4.2c1.4,0 2.8,-16.0 4.2,-16.0h12.6c1.4,0 2.8,16.0 4.2,16.0h12.6" fill="none" stroke="#f9dbf9" stroke-width="1.3"/><path d="M1352.9,933.7h16.8c1.4,0 2.8,-16.0 4.2,-16.0h4.2c1.4,0 2.8,16.0 4.2,16.0c1.4,0 2.8,-16.0 4.2,-16.0h4.2c1.4,0 2.8,16.0 4.2,16.0h8.4c1.4,0 2.8,-16.0 4.2,-16.0c1.4,0 2.8,16.0 4.2,16.0c1.4,0 2.8,-16.0 4.2,-16.0h8.4c1.4,0 2.8,16.0 4.2,16.0h4.2c1.4,0 2.8,-16.0 4.2,-16.0h21.0c1.4,0 2.8,16.0 4.2,16.0c1.4,0 2.8,-16.0 4.2,-16.0c1.4,0 2.8,16.0 4.2,16.0c1.4,0 2.8,-16.0 4.2,-16.0c1.4,0 2.8,16.0 4.2,16.0h29.5c1.4,0 2.8,-16.0 4.2,-16.0h8.4c1.4,0 2.8,16.0 4.2,16.0h8.4c1.4,0 2.8,-16.0 4.2,-16.0h4.2c1.4,0 2.8,16.0 4.2,16.0h12.6c1.4,0 2.8,-16.0 4.2,-16.0h12.6c1.4,0 2.8,16.0 4.2,16.0h4.2c1.4,0 2.8,-16.0 4.2,-16.0h4.2c1.4,0 2.8,16.0 4.2,16.0h4.2c1.4,0 2.8,-16.0 4.2,-16.0c1.4,0 2.8,16.0 4.2,16.0h4.2c1.4,0 2.8,-16.0 4.2,-16.0c1.4,0 2.8,16.0 4.2,16.0c1.4,0 2.8,-16.0 4.2,-16.0c1.4,0 2.8,16.0 4.2,16.0c1.4,0 2.8,-16.0 4.2,-16.0h4.2c1.4,0 2.8,16.0 4.2,16.0h4.2c1.4,0 2.8,-16.0 4.2,-16.0c1.4,0 2.8,16.0 4.2,16.0h8.4c1.4,0 2.8,-16.0 4.2,-16.0h4.2c1.4,0 2.8,16.0 4.2,16.0c1.4,0 2.8,-16.0 4.2,-16.0h8.4c1.4,0 2.8,16.0 4.2,16.0c1.4,0 2.8,-16.0 4.2,-16.0h4.2c1.4,0 2.8,16.0 4.2,16.0c1.4,0 2.8,-16.0 4.2,-16.0c1.4,0 2.8,16.0 4.2,16.0h4.2c1.4,0 2.8,-16.0 4.2,-16.0h12.6c1.4,0 2.8,16.0 4.2,16.0h4.2c1.4,0 2.8,-16.0 4.2,-16.0h29.5c1.4,0 2.8,16.0 4.2,16.0h4.2c1.4,0 2.8,-16.0 4.2,-16.0c1.4,0 2.8,16.0 4.2,16.0c1.4,0 2.8,-16.0 4.2,-16.0h4.2c1.4,0 2.8,16.0 4.2,16.0c1.4,0 2.8,-16.0 4.2,-16.0h8.4c1.4,0 2.8,16.0 4.2,16.0h67.3c1.4,0 2.8,-16.0 4.2,-16.0h4.2c1.4,0 2.8,16.0 4.2,16.0h12.6c1.4,0 2.8,-16.0 4.2,-16.0h4.2c1.4,0 2.8,16.0 4.2,16.0h8.4c1.4,0 2.8,-16.0 4.2,-16.0c1.4,0 2.8,16.0 4.2,16.0h25.2c1.4,0 2.8,-16.0 4.2,-16.0c1.4,0 2.8,16.0 4.2,16.0c1.4,0 2.8,-16.0 4.2,-16.0h4.2c1.4,0 2.8,16.0 4.2,16.0c1.4,0 2.8,-16.0 4.2,-16.0c1.4,0 2.8,16.0 4.2,16.0h4.2c1.4,0 2.8,-16.0 4.2,-16.0c1.4,0 2.8,16.0 4.2,16.0h8.4c1.4,0 2.8,-16.0 4.2,-16.0h29.5c1.4,0 2.8,16.0 4.2,16.0c1.4,0 2.8,-16.0 4.2,-16.0h4.2c1.4,0 2.8,16.0 4.2,16.0h25.2c1.4,0 2.8,-16.0 4.2,-16.0h8.4c1.4,0 2.8,16.0 4.2,16.0h12.6c1.4,0 2.8,-16.0 4.2,-16.0h29.5c1.4,0 2.8,16.0 4.2,16.0h8.4" fill="none" stroke="#91bcff" stroke-width="1.3"/><path d="M1352.9,933.7c1.4,0 2.8,-16.0 4.2,-16.0h4.2c1.4,0 2.8,16.0 4.2,16.0h12.6c1.4,0 2.8,-16.0 4.2,-16.0c1.4,0 2.8,16.0 4.2,16.0c1.4,0 2.8,-16.0 4.2,-16.0c1.4,0 2.8,16.0 4.2,16.0c1.4,0 2.8,-16.0 4.2,-16.0c1.4,0 2.8,16.0 4.2,16.0c1.4,0 2.8,-16.0 4.2,-16.0c1.4,0 2.8,16.0 4.2,16.0h8.4c1.4,0 2.8,-16.0 4.2,-16.0c1.4,0 2.8,16.0 4.2,16.0c1.4,0 2.8,-16.0 4.2,-16.0h4.2c1.4,0 2.8,16.0 4.2,16.0c1.4,0 2.8,-16.0 4.2,-16.0c1.4,0 2.8,16.0 4.2,16.0c1.4,0 2.8,-16.0 4.2,-16.0c1.4,0 2.8,16.0 4.2,16.0h4.2c1.4,0 2.8,-16.0 4.2,-16.0c1.4,0 2.8,16.0 4.2,16.0h12.6c1.4,0 2.8,-16.0 4.2,-16.0h4.2c1.4,0 2.8,16.0 4.2,16.0h4.2c1.4,0 2.8,-16.0 4.2,-16.0c1.4,0 2.8,16.0 4.2,16.0c1.4,0 2.8,-16.0 4.2,-16.0h16.8c1.4,0 2.8,16.0 4.2,16.0c1.4,0 2.8,-16.0 4.2,-16.0c1.4,0 2.8,16.0 4.2,16.0h8.4c1.4,0 2.8,-16.0 4.2,-16.0h8.4c1.4,0 2.8,16.0 4.2,16.0c1.4,0 2.8,-16.0 4.2,-16.0c1.4,0 2.8,16.0 4.2,16.0c1.4,0 2.8,-16.0 4.2,-16.0c1.4,0 2.8,16.0 4.2,16.0c1.4,0 2.8,-16.0 4.2,-16.0h4.2c1.4,0 2.8,16.0 4.2,16.0c1.4,0 2.8,-16.0 4.2,-16.0h4.2c1.4,0 2.8,16.0 4.2,16.0c1.4,0 2.8,-16.0 4.2,-16.0c1.4,0 2.8,16.0 4.2,16.0c1.4,0 2.8,-16.0 4.2,-16.0h8.4c1.4,0 2.8,16.0 4.2,16.0h8.4c1.4,0 2.8,-16.0 4.2,-16.0c1.4,0 2.8,16.0 4.2,16.0c1.4,0 2.8,-16.0 4.2,-16.0c1.4,0 2.8,16.0 4.2,16.0c1.4,0 2.8,-16.0 4.2,-16.0c1.4,0 2.8,16.0 4.2,16.0c1.4,0 2.8,-16.0 4.2,-16.0h4.2c1.4,0 2.8,16.0 4.2,16.0c1.4,0 2.8,-16.0 4.2,-16.0c1.4,0 2.8,16.0 4.2,16.0c1.4,0 2.8,-16.0 4.2,-16.0c1.4,0 2.8,16.0 4.2,16.0h4.2c1.4,0 2.8,-16.0 4.2,-16.0c1.4,0 2.8,16.0 4.2,16.0c1.4,0 2.8,-16.0 4.2,-16.0h8.4c1.4,0 2.8,16.0 4.2,16.0h4.2c1.4,0 2.8,-16.0 4.2,-16.0h12.6c1.4,0 2.8,16.0 4.2,16.0c1.4,0 2.8,-16.0 4.2,-16.0h8.4c1.4,0 2.8,16.0 4.2,16.0c1.4,0 2.8,-16.0 4.2,-16.0c1.4,0 2.8,16.0 4.2,16.0c1.4,0 2.8,-16.0 4.2,-16.0c1.4,0 2.8,16.0 4.2,16.0c1.4,0 2.8,-16.0 4.2,-16.0h8.4c1.4,0 2.8,16.0 4.2,16.0h4.2c1.4,0 2.8,-16.0 4.2,-16.0h8.4c1.4,0 2.8,16.0 4.2,16.0h4.2c1.4,0 2.8,-16.0 4.2,-16.0h58.9c1.4,0 2.8,16.0 4.2,16.0h16.8c1.4,0 2.8,-16.0 4.2,-16.0c1.4,0 2.8,16.0 4.2,16.0h12.6c1.4,0 2.8,-16.0 4.2,-16.0c1.4,0 2.8,16.0 4.2,16.0c1.4,0 2.8,-16.0 4.2,-16.0c1.4,0 2.8,16.0 4.2,16.0c1.4,0 2.8,-16.0 4.2,-16.0c1.4,0 2.8,16.0 4.2,16.0c1.4,0 2.8,-16.0 4.2,-16.0c1.4,0 2.8,16.0 4.2,16.0c1.4,0 2.8,-16.0 4.2,-16.0h16.8c1.4,0 2.8,16.0 4.2,16.0h4.2c1.4,0 2.8,-16.0 4.2,-16.0c1.4,0 2.8,16.0 4.2,16.0h12.6c1.4,0 2.8,-16.0 4.2,-16.0h4.2c1.4,0 2.8,16.0 4.2,16.0c1.4,0 2.8,-16.0 4.2,-16.0c1.4,0 2.8,16.0 4.2,16.0c1.4,0 2.8,-16.0 4.2,-16.0c1.4,0 2.8,16.0 4.2,16.0h8.4c1.4,0 2.8,-16.0 4.2,-16.0c1.4,0 2.8,16.0 4.2,16.0c1.4,0 2.8,-16.0 4.2,-16.0h4.2c1.4,0 2.8,16.0 4.2,16.0c1.4,0 2.8,-16.0 4.2,-16.0h8.4c1.4,0 2.8,16.0 4.2,16.0c1.4,0 2.8,-16.0 4.2,-16.0c1.4,0 2.8,16.0 4.2,16.0h4.2c1.4,0 2.8,-16.0 4.2,-16.0c1.4,0 2.8,16.0 4.2,16.0c1.4,0 2.8,-16.0 4.2,-16.0h4.2c1.4,0 2.8,16.0 4.2,16.0c1.4,0 2.8,-16.0 4.2,-16.0h4.2c1.4,0 2.8,16.0 4.2,16.0h4.2c1.4,0 2.8,-16.0 4.2,-16.0h25.2" fill="none" stroke="#438e3a" stroke-width="1.3"/><path d="M1352.9,917.6h4.2c1.4,0 2.8,-16.0 4.2,-16.0h8.4c1.4,0 2.8,16.0 4.2,16.0h21.0c1.4,0 2.8,-16.0 4.2,-16.0h4.2c1.4,0 2.8,16.0 4.2,16.0h4.2c1.4,0 2.8,-16.0 4.2,-16.0c1.4,0 2.8,16.0 4.2,16.0c1.4,0 2.8,-16.0 4.2,-16.0h37.9c1.4,0 2.8,16.0 4.2,16.0c1.4,0 2.8,-16.0 4.2,-16.0h4.2c1.4,0 2.8,16.0 4.2,16.0h21.0c1.4,0 2.8,-16.0 4.2,-16.0h8.4c1.4,0 2.8,16.0 4.2,16.0c1.4,0 2.8,-16.0 4.2,-16.0h8.4c1.4,0 2.8,16.0 4.2,16.0h4.2c1.4,0 2.8,-16.0 4.2,-16.0c1.4,0 2.8,16.0 4.2,16.0c1.4,0 2.8,-16.0 4.2,-16.0c1.4,0 2.8,16.0 4.2,16.0h4.2c1.4,0 2.8,-16.0 4.2,-16.0c1.4,0 2.8,16.0 4.2,16.0h8.4c1.4,0 2.8,-16.0 4.2,-16.0h16.8c1.4,0 2.8,16.0 4.2,16.0c1.4,0 2.8,-16.0 4.2,-16.0h12.6c1.4,0 2.8,16.0 4.2,16.0c1.4,0 2.8,-16.0 4.2,-16.0c1.4,0 2.8,16.0 4.2,16.0h8.4c1.4,0 2.8,-16.0 4.2,-16.0c1.4,0 2.8,16.0 4.2,16.0h12.6c1.4,0 2.8,-16.0 4.2,-16.0h4.2c1.4,0 2.8,16.0 4.2,16.0h12.6c1.4,0 2.8,-16.0 4.2,-16.0h4.2c1.4,0 2.8,16.0 4.2,16.0c1.4,0 2.8,-16.0 4.2,-16.0h4.2c1.4,0 2.8,16.0 4.2,16.0c1.4,0 2.8,-16.0 4.2,-16.0h16.8c1.4,0 2.8,16.0 4.2,16.0h8.4c1.4,0 2.8,-16.0 4.2,-16.0h4.2c1.4,0 2.8,16.0 4.2,16.0c1.4,0 2.8,-16.0 4.2,-16.0c1.4,0 2.8,16.0 4.2,16.0h16.8c1.4,0 2.8,-16.0 4.2,-16.0c1.4,0 2.8,16.0 4.2,16.0c1.4,0 2.8,-16.0 4.2,-16.0h4.2c1.4,0 2.8,16.0 4.2,16.0c1.4,0 2.8,-16.0 4.2,-16.0c1.4,0 2.8,16.0 4.2,16.0c1.4,0 2.8,-16.0 4.2,-16.0h12.6c1.4,0 2.8,16.0 4.2,16.0c19.6,0 39.3,-16.0 58.9,-16.0h21.0c1.4,0 2.8,16.0 4.2,16.0c1.4,0 2.8,-16.0 4.2,-16.0h33.7c1.4,0 2.8,16.0 4.2,16.0c1.4,0 2.8,-16.0 4.2,-16.0c1.4,0 2.8,16.0 4.2,16.0c1.4,0 2.8,-16.0 4.2,-16.0h4.2c1.4,0 2.8,16.0 4.2,16.0h12.6c1.4,0 2.8,-16.0 4.2,-16.0h4.2c1.4,0 2.8,16.0 4.2,16.0c1.4,0 2.8,-16.0 4.2,-16.0h12.6c1.4,0 2.8,16.0 4.2,16.0h16.8c1.4,0 2.8,-16.0 4.2,-16.0h4.2c1.4,0 2.8,16.0 4.2,16.0c1.4,0 2.8,-16.0 4.2,-16.0c1.4,0 2.8,16.0 4.2,16.0h12.6c1.4,0 2.8,-16.0 4.2,-16.0c1.4,0 2.8,16.0 4.2,16.0c1.4,0 2.8,-16.0 4.2,-16.0h16.8c1.4,0 2.8,16.0 4.2,16.0h4.2c1.4,0 2.8,-16.0 4.2,-16.0c1.4,0 2.8,16.0 4.2,16.0h4.2c1.4,0 2.8,-16.0 4.2,-16.0c1.4,0 2.8,16.0 4.2,16.0h16.8c1.4,0 2.8,-16.0 4.2,-16.0h4.2c1.4,0 2.8,16.0 4.2,16.0h4.2c1.4,0 2.8,-16.0 4.2,-16.0" fill="none" stroke="#619af3" stroke-width="1.3"/><path d="M1352.9,1013.8h8.4c1.4,0 2.8,-16.0 4.2,-16.0h4.2c1.4,0 2.8,16.0 4.2,16.0c1.4,0 2.8,-16.0 4.2,-16.0c1.4,0 2.8,16.0 4.2,16.0c1.4,0 2.8,-16.0 4.2,-16.0h4.2c1.4,0 2.8,16.0 4.2,16.0h8.4c1.4,0 2.8,-16.0 4.2,-16.0c1.4,0 2.8,16.0 4.2,16.0h8.4c1.4,0 2.8,-16.0 4.2,-16.0c1.4,0 2.8,16.0 4.2,16.0h8.4c1.4,0 2.8,-16.0 4.2,-16.0h12.6c1.4,0 2.8,16.0 4.2,16.0h16.8c1.4,0 2.8,-16.0 4.2,-16.0c1.4,0 2.8,16.0 4.2,16.0c1.4,0 2.8,-16.0 4.2,-16.0c1.4,0 2.8,16.0 4.2,16.0h8.4c1.4,0 2.8,-16.0 4.2,-16.0h4.2c1.4,0 2.8,16.0 4.2,16.0h4.2c1.4,0 2.8,-16.0 4.2,-16.0h8.4c1.4,0 2.8,16.0 4.2,16.0h8.4c1.4,0 2.8,-16.0 4.2,-16.0c1.4,0 2.8,16.0 4.2,16.0c1.4,0 2.8,-16.0 4.2,-16.0h4.2c1.4,0 2.8,16.0 4.2,16.0h8.4c1.4,0 2.8,-16.0 4.2,-16.0h16.8c1.4,0 2.8,16.0 4.2,16.0c1.4,0 2.8,-16.0 4.2,-16.0h8.4c1.4,0 2.8,16.0 4.2,16.0c1.4,0 2.8,-16.0 4.2,-16.0c1.4,0 2.8,16.0 4.2,16.0h8.4c1.4,0 2.8,-16.0 4.2,-16.0h4.2c1.4,0 2.8,16.0 4.2,16.0h4.2c1.4,0 2.8,-16.0 4.2,-16.0h4.2c1.4,0 2.8,16.0 4.2,16.0c1.4,0 2.8,-16.0 4.2,-16.0c1.4,0 2.8,16.0 4.2,16.0c1.4,0 2.8,-16.0 4.2,-16.0c1.4,0 2.8,16.0 4.2,16.0c1.4,0 2.8,-16.0 4.2,-16.0c1.4,0 2.8,16.0 4.2,16.0c1.4,0 2.8,-16.0 4.2,-16.0h12.6c1.4,0 2.8,16.0 4.2,16.0c1.4,0 2.8,-16.0 4.2,-16.0c1.4,0 2.8,16.0 4.2,16.0c1.4,0 2.8,-16.0 4.2,-16.0h4.2c1.4,0 2.8,16.0 4.2,16.0h4.2c1.4,0 2.8,-16.0 4.2,-16.0c1.4,0 2.8,16.0 4.2,16.0c1.4,0 2.8,-16.0 4.2,-16.0h8.4c1.4,0 2.8,16.0 4.2,16.0h4.2c1.4,0 2.8,-16.0 4.2,-16.0h4.2c1.4,0 2.8,16.0 4.2,16.0c1.4,0 2.8,-16.0 4.2,-16.0h4.2c1.4,0 2.8,16.0 4.2,16.0c1.4,0 2.8,-16.0 4.2,-16.0c1.4,0 2.8,16.0 4.2,16.0c1.4,0 2.8,-16.0 4.2,-16.0h8.4c1.4,0 2.8,16.0 4.2,16.0c1.4,0 2.8,-16.0 4.2,-16.0c1.4,0 2.8,16.0 4.2,16.0h4.2c1.4,0 2.8,-16.0 4.2,-16.0c1.4,0 2.8,16.0 4.2,16.0c19.6,0 39.3,-16.0 58.9,-16.0h16.8c1.4,0 2.8,16.0 4.2,16.0h12.6c1.4,0 2.8,-16.0 4.2,-16.0c1.4,0 2.8,16.0 4.2,16.0c1.4,0 2.8,-16.0 4.2,-16.0h16.8c1.4,0 2.8,16.0 4.2,16.0c1.4,0 2.8,-16.0 4.2,-16.0c1.4,0 2.8,16.0 4.2,16.0c1.4,0 2.8,-16.0 4.2,-16.0c1.4,0 2.8,16.0 4.2,16.0h4.2c1.4,0 2.8,-16.0 4.2,-16.0h4.2c1.4,0 2.8,16.0 4.2,16.0c1.4,0 2.8,-16.0 4.2,-16.0h8.4c1.4,0 2.8,16.0 4.2,16.0c1.4,0 2.8,-16.0 4.2,-16.0c1.4,0 2.8,16.0 4.2,16.0h21.0c1.4,0 2.8,-16.0 4.2,-16.0h4.2c1.4,0 2.8,16.0 4.2,16.0c1.4,0 2.8,-16.0 4.2,-16.0h21.0c1.4,0 2.8,16.0 4.2,16.0c1.4,0 2.8,-16.0 4.2,-16.0c1.4,0 2.8,16.0 4.2,16.0h8.4c1.4,0 2.8,-16.0 4.2,-16.0h12.6c1.4,0 2.8,16.0 4.2,16.0c1.4,0 2.8,-16.0 4.2,-16.0c1.4,0 2.8,16.0 4.2,16.0c1.4,0 2.8,-16.0 4.2,-16.0h8.4c1.4,0 2.8,16.0 4.2,16.0h4.2c1.4,0 2.8,-16.0 4.2,-16.0c1.4,0 2.8,16.0 4.2,16.0c1.4,0 2.8,-16.0 4.2,-16.0h12.6" fill="none" stroke="#f9be96" stroke-width="1.3"/><path d="M1352.9,933.7c1.4,0 2.8,16.0 4.2,16.0h8.4c1.4,0 2.8,-16.0 4.2,-16.0h12.6c1.4,0 2.8,16.0 4.2,16.0h16.8c1.4,0 2.8,-16.0 4.2,-16.0h46.3c1.4,0 2.8,16.0 4.2,16.0h4.2c1.4,0 2.8,-16.0 4.2,-16.0c1.4,0 2.8,16.0 4.2,16.0c1.4,0 2.8,-16.0 4.2,-16.0h25.2c1.4,0 2.8,16.0 4.2,16.0h12.6c1.4,0 2.8,-16.0 4.2,-16.0c1.4,0 2.8,16.0 4.2,16.0c1.4,0 2.8,-16.0 4.2,-16.0h16.8c1.4,0 2.8,16.0 4.2,16.0c1.4,0 2.8,-16.0 4.2,-16.0c1.4,0 2.8,16.0 4.2,16.0c1.4,0 2.8,-16.0 4.2,-16.0c1.4,0 2.8,16.0 4.2,16.0c1.4,0 2.8,-16.0 4.2,-16.0h16.8c1.4,0 2.8,16.0 4.2,16.0c1.4,0 2.8,-16.0 4.2,-16.0h4.2c1.4,0 2.8,16.0 4.2,16.0h4.2c1.4,0 2.8,-16.0 4.2,-16.0h12.6c1.4,0 2.8,16.0 4.2,16.0h12.6c1.4,0 2.8,-16.0 4.2,-16.0h4.2c1.4,0 2.8,16.0 4.2,16.0h16.8c1.4,0 2.8,-16.0 4.2,-16.0h16.8c1.4,0 2.8,16.0 4.2,16.0c1.4,0 2.8,-16.0 4.2,-16.0h8.4c1.4,0 2.8,16.0 4.2,16.0h16.8c1.4,0 2.8,-16.0 4.2,-16.0c1.4,0 2.8,16.0 4.2,16.0h21.0c1.4,0 2.8,-16.0 4.2,-16.0h8.4c1.4,0 2.8,16.0 4.2,16.0c1.4,0 2.8,-16.0 4.2,-16.0h8.4c1.4,0 2.8,16.0 4.2,16.0c1.4,0 2.8,-16.0 4.2,-16.0h4.2c1.4,0 2.8,16.0 4.2,16.0c1.4,0 2.8,-16.0 4.2,-16.0c1.4,0 2.8,16.0 4.2,16.0c1.4,0 2.8,-16.0 4.2,-16.0c1.4,0 2.8,16.0 4.2,16.0h8.4c19.6,0 39.3,-16.0 58.9,-16.0h4.2c1.4,0 2.8,16.0 4.2,16.0h16.8c1.4,0 2.8,-16.0 4.2,-16.0h4.2c1.4,0 2.8,16.0 4.2,16.0h4.2c1.4,0 2.8,-16.0 4.2,-16.0h4.2c1.4,0 2.8,16.0 4.2,16.0h8.4c1.4,0 2.8,-16.0 4.2,-16.0h8.4c1.4,0 2.8,16.0 4.2,16.0h21.0c1.4,0 2.8,-16.0 4.2,-16.0h4.2c1.4,0 2.8,16.0 4.2,16.0h4.2c1.4,0 2.8,-16.0 4.2,-16.0c1.4,0 2.8,16.0 4.2,16.0c1.4,0 2.8,-16.0 4.2,-16.0c1.4,0 2.8,16.0 4.2,16.0h4.2c1.4,0 2.8,-16.0 4.2,-16.0c1.4,0 2.8,16.0 4.2,16.0h8.4c1.4,0 2.8,-16.0 4.2,-16.0h29.5c1.4,0 2.8,16.0 4.2,16.0h25.2c1.4,0 2.8,-16.0 4.2,-16.0h4.2c1.4,0 2.8,16.0 4.2,16.0h8.4c1.4,0 2.8,-16.0 4.2,-16.0h8.4c1.4,0 2.8,16.0 4.2,16.0h21.0c1.4,0 2.8,-16.0 4.2,-16.0" fill="none" stroke="#f5d89e" stroke-width="1.3"/><path d="M1352.9,885.6h12.6c1.4,0 2.8,16.0 4.2,16.0h16.8c1.4,0 2.8,-16.0 4.2,-16.0c1.4,0 2.8,16.0 4.2,16.0c1.4,0 2.8,-16.0 4.2,-16.0h4.2c1.4,0 2.8,16.0 4.2,16.0h8.4c1.4,0 2.8,-16.0 4.2,-16.0c1.4,0 2.8,16.0 4.2,16.0c1.4,0 2.8,-16.0 4.2,-16.0c1.4,0 2.8,16.0 4.2,16.0c1.4,0 2.8,-16.0 4.2,-16.0c1.4,0 2.8,16.0 4.2,16.0c1.4,0 2.8,-16.0 4.2,-16.0c1.4,0 2.8,16.0 4.2,16.0c1.4,0 2.8,-16.0 4.2,-16.0c1.4,0 2.8,16.0 4.2,16.0c1.4,0 2.8,-16.0 4.2,-16.0h8.4c1.4,0 2.8,16.0 4.2,16.0h4.2c1.4,0 2.8,-16.0 4.2,-16.0c1.4,0 2.8,16.0 4.2,16.0c1.4,0 2.8,-16.0 4.2,-16.0c1.4,0 2.8,16.0 4.2,16.0c1.4,0 2.8,-16.0 4.2,-16.0h4.2c1.4,0 2.8,16.0 4.2,16.0c1.4,0 2.8,-16.0 4.2,-16.0h4.2c1.4,0 2.8,16.0 4.2,16.0h4.2c1.4,0 2.8,-16.0 4.2,-16.0h12.6c1.4,0 2.8,16.0 4.2,16.0h8.4c1.4,0 2.8,-16.0 4.2,-16.0c1.4,0 2.8,16.0 4.2,16.0h21.0c1.4,0 2.8,-16.0 4.2,-16.0h4.2c1.4,0 2.8,16.0 4.2,16.0c1.4,0 2.8,-16.0 4.2,-16.0h8.4c1.4,0 2.8,16.0 4.2,16.0h8.4c1.4,0 2.8,-16.0 4.2,-16.0c1.4,0 2.8,16.0 4.2,16.0c1.4,0 2.8,-16.0 4.2,-16.0c1.4,0 2.8,16.0 4.2,16.0h4.2c1.4,0 2.8,-16.0 4.2,-16.0h12.6c1.4,0 2.8,16.0 4.2,16.0h8.4c1.4,0 2.8,-16.0 4.2,-16.0c1.4,0 2.8,16.0 4.2,16.0h8.4c1.4,0 2.8,-16.0 4.2,-16.0c1.4,0 2.8,16.0 4.2,16.0c1.4,0 2.8,-16.0 4.2,-16.0h4.2c1.4,0 2.8,16.0 4.2,16.0c1.4,0 2.8,-16.0 4.2,-16.0h8.4c1.4,0 2.8,16.0 4.2,16.0h4.2c1.4,0 2.8,-16.0 4.2,-16.0h8.4c1.4,0 2.8,16.0 4.2,16.0c1.4,0 2.8,-16.0 4.2,-16.0c1.4,0 2.8,16.0 4.2,16.0h4.2c1.4,0 2.8,-16.0 4.2,-16.0h4.2c1.4,0 2.8,16.0 4.2,16.0h12.6c1.4,0 2.8,-16.0 4.2,-16.0h4.2c1.4,0 2.8,16.0 4.2,16.0h4.2c1.4,0 2.8,-16.0 4.2,-16.0c1.4,0 2.8,16.0 4.2,16.0h4.2c1.4,0 2.8,-16.0 4.2,-16.0c1.4,0 2.8,16.0 4.2,16.0h8.4c19.6,0 39.3,-16.0 58.9,-16.0c1.4,0 2.8,16.0 4.2,16.0c1.4,0 2.8,-16.0 4.2,-16.0h12.6c1.4,0 2.8,16.0 4.2,16.0h4.2c1.4,0 2.8,-16.0 4.2,-16.0h12.6c1.4,0 2.8,16.0 4.2,16.0h4.2c1.4,0 2.8,-16.0 4.2,-16.0c1.4,0 2.8,16.0 4.2,16.0h4.2c1.4,0 2.8,-16.0 4.2,-16.0c1.4,0 2.8,16.0 4.2,16.0h4.2c1.4,0 2.8,-16.0 4.2,-16.0h8.4c1.4,0 2.8,16.0 4.2,16.0c1.4,0 2.8,-16.0 4.2,-16.0h8.4c1.4,0 2.8,16.0 4.2,16.0c1.4,0 2.8,-16.0 4.2,-16.0h8.4c1.4,0 2.8,16.0 4.2,16.0c1.4,0 2.8,-16.0 4.2,-16.0h8.4c1.4,0 2.8,16.0 4.2,16.0c1.4,0 2.8,-16.0 4.2,-16.0h12.6c1.4,0 2.8,16.0 4.2,16.0h16.8c1.4,0 2.8,-16.0 4.2,-16.0h4.2c1.4,0 2.8,16.0 4.2,16.0h12.6c1.4,0 2.8,-16.0 4.2,-16.0c1.4,0 2.8,16.0 4.2,16.0h4.2c1.4,0 2.8,-16.0 4.2,-16.0h4.2c1.4,0 2.8,16.0 4.2,16.0c1.4,0 2.8,-16.0 4.2,-16.0h4.2c1.4,0 2.8,16.0 4.2,16.0c1.4,0 2.8,-16.0 4.2,-16.0c1.4,0 2.8,16.0 4.2,16.0c1.4,0 2.8,-16.0 4.2,-16.0c1.4,0 2.8,16.0 4.2,16.0h12.6c1.4,0 2.8,-16.0 4.2,-16.0" fill="none" stroke="#bc7fdb" stroke-width="1.3"/><path d="M1352.9,997.8c1.4,0 2.8,16.0 4.2,16.0h8.4c1.4,0 2.8,-16.0 4.2,-16.0c1.4,0 2.8,16.0 4.2,16.0h12.6c1.4,0 2.8,-16.0 4.2,-16.0h4.2c1.4,0 2.8,16.0 4.2,16.0c1.4,0 2.8,-16.0 4.2,-16.0c1.4,0 2.8,16.0 4.2,16.0h4.2c1.4,0 2.8,-16.0 4.2,-16.0c1.4,0 2.8,16.0 4.2,16.0c1.4,0 2.8,-16.0 4.2,-16.0c1.4,0 2.8,16.0 4.2,16.0c1.4,0 2.8,-16.0 4.2,-16.0h21.0c1.4,0 2.8,16.0 4.2,16.0c1.4,0 2.8,-16.0 4.2,-16.0h8.4c1.4,0 2.8,16.0 4.2,16.0h4.2c1.4,0 2.8,-16.0 4.2,-16.0c1.4,0 2.8,16.0 4.2,16.0c1.4,0 2.8,-16.0 4.2,-16.0c1.4,0 2.8,16.0 4.2,16.0h4.2c1.4,0 2.8,-16.0 4.2,-16.0c1.4,0 2.8,16.0 4.2,16.0h8.4c1.4,0 2.8,-16.0 4.2,-16.0h8.4c1.4,0 2.8,16.0 4.2,16.0c1.4,0 2.8,-16.0 4.2,-16.0c1.4,0 2.8,16.0 4.2,16.0c1.4,0 2.8,-16.0 4.2,-16.0c1.4,0 2.8,16.0 4.2,16.0h16.8c1.4,0 2.8,-16.0 4.2,-16.0h8.4c1.4,0 2.8,16.0 4.2,16.0c1.4,0 2.8,-16.0 4.2,-16.0h12.6c1.4,0 2.8,16.0 4.2,16.0h12.6c1.4,0 2.8,-16.0 4.2,-16.0c1.4,0 2.8,16.0 4.2,16.0h4.2c1.4,0 2.8,-16.0 4.2,-16.0c1.4,0 2.8,16.0 4.2,16.0c1.4,0 2.8,-16.0 4.2,-16.0c1.4,0 2.8,16.0 4.2,16.0h8.4c1.4,0 2.8,-16.0 4.2,-16.0c1.4,0 2.8,16.0 4.2,16.0h4.2c1.4,0 2.8,-16.0 4.2,-16.0h4.2c1.4,0 2.8,16.0 4.2,16.0h8.4c1.4,0 2.8,-16.0 4.2,-16.0c1.4,0 2.8,16.0 4.2,16.0h4.2c1.4,0 2.8,-16.0 4.2,-16.0c1.4,0 2.8,16.0 4.2,16.0c1.4,0 2.8,-16.0 4.2,-16.0c1.4,0 2.8,16.0 4.2,16.0c1.4,0 2.8,-16.0 4.2,-16.0c1.4,0 2.8,16.0 4.2,16.0c1.4,0 2.8,-16.0 4.2,-16.0h8.4c1.4,0 2.8,16.0 4.2,16.0h12.6c1.4,0 2.8,-16.0 4.2,-16.0h12.6c1.4,0 2.8,16.0 4.2,16.0h12.6c1.4,0 2.8,-16.0 4.2,-16.0c1.4,0 2.8,16.0 4.2,16.0c1.4,0 2.8,-16.0 4.2,-16.0h8.4c1.4,0 2.8,16.0 4.2,16.0h4.2c1.4,0 2.8,-16.0 4.2,-16.0c1.4,0 2.8,16.0 4.2,16.0h4.2c19.6,0 39.3,-16.0 58.9,-16.0c1.4,0 2.8,16.0 4.2,16.0c1.4,0 2.8,-16.0 4.2,-16.0h4.2c1.4,0 2.8,16.0 4.2,16.0c1.4,0 2.8,-16.0 4.2,-16.0c1.4,0 2.8,16.0 4.2,16.0h8.4c1.4,0 2.8,-16.0 4.2,-16.0c1.4,0 2.8,16.0 4.2,16.0c1.4,0 2.8,-16.0 4.2,-16.0h8.4c1.4,0 2.8,16.0 4.2,16.0h8.4c1.4,0 2.8,-16.0 4.2,-16.0h4.2c1.4,0 2.8,16.0 4.2,16.0c1.4,0 2.8,-16.0 4.2,-16.0c1.4,0 2.8,16.0 4.2,16.0h4.2c1.4,0 2.8,-16.0 4.2,-16.0h8.4c1.4,0 2.8,16.0 4.2,16.0c1.4,0 2.8,-16.0 4.2,-16.0c1.4,0 2.8,16.0 4.2,16.0c1.4,0 2.8,-16.0 4.2,-16.0c1.4,0 2.8,16.0 4.2,16.0c1.4,0 2.8,-16.0 4.2,-16.0h8.4c1.4,0 2.8,16.0 4.2,16.0h4.2c1.4,0 2.8,-16.0 4.2,-16.0h4.2c1.4,0 2.8,16.0 4.2,16.0c1.4,0 2.8,-16.0 4.2,-16.0c1.4,0 2.8,16.0 4.2,16.0c1.4,0 2.8,-16.0 4.2,-16.0c1.4,0 2.8,16.0 4.2,16.0c1.4,0 2.8,-16.0 4.2,-16.0h8.4c1.4,0 2.8,16.0 4.2,16.0h21.0c1.4,0 2.8,-16.0 4.2,-16.0h16.8c1.4,0 2.8,16.0 4.2,16.0h12.6c1.4,0 2.8,-16.0 4.2,-16.0c1.4,0 2.8,16.0 4.2,16.0h12.6c1.4,0 2.8,-16.0 4.2,-16.0c1.4,0 2.8,16.0 4.2,16.0" fill="none" stroke="#e2f9d9" stroke-width="1.3"/><path d="M1352.9,1029.8h8.4c1.4,0 2.8,-16.0 4.2,-16.0h25.2c1.4,0 2.8,16.0 4.2,16.0c1.4,0 2.8,-16.0 4.2,-16.0c1.4,0 2.8,16.0 4.2,16.0h16.8c1.4,0 2.8,-16.0 4.2,-16.0c1.4,0 2.8,16.0 4.2,16.0c1.4,0 2.8,-16.0 4.2,-16.0c1.4,0 2.8,16.0 4.2,16.0c1.4,0 2.8,-16.0 4.2,-16.0c1.4,0 2.8,16.0 4.2,16.0c1.4,0 2.8,-16.0 4.2,-16.0c1.4,0 2.8,16.0 4.2,16.0h4.2c1.4,0 2.8,-16.0 4.2,-16.0h4.2c1.4,0 2.8,16.0 4.2,16.0h4.2c1.4,0 2.8,-16.0 4.2,-16.0h4.2c1.4,0 2.8,16.0 4.2,16.0h4.2c1.4,0 2.8,-16.0 4.2,-16.0c1.4,0 2.8,16.0 4.2,16.0h12.6c1.4,0 2.8,-16.0 4.2,-16.0h21.0c1.4,0 2.8,16.0 4.2,16.0h4.2c1.4,0 2.8,-16.0 4.2,-16.0h4.2c1.4,0 2.8,16.0 4.2,16.0c1.4,0 2.8,-16.0 4.2,-16.0c1.4,0 2.8,16.0 4.2,16.0c1.4,0 2.8,-16.0 4.2,-16.0h8.4c1.4,0 2.8,16.0 4.2,16.0c1.4,0 2.8,-16.0 4.2,-16.0h4.2c1.4,0 2.8,16.0 4.2,16.0c1.4,0 2.8,-16.0 4.2,-16.0c1.4,0 2.8,16.0 4.2,16.0h33.7c1.4,0 2.8,-16.0 4.2,-16.0h8.4c1.4,0 2.8,16.0 4.2,16.0h8.4c1.4,0 2.8,-16.0 4.2,-16.0c1.4,0 2.8,16.0 4.2,16.0c1.4,0 2.8,-16.0 4.2,-16.0h12.6c1.4,0 2.8,16.0 4.2,16.0h16.8c1.4,0 2.8,-16.0 4.2,-16.0h4.2c1.4,0 2.8,16.0 4.2,16.0c1.4,0 2.8,-16.0 4.2,-16.0c1.4,0 2.8,16.0 4.2,16.0h8.4c1.4,0 2.8,-16.0 4.2,-16.0h8.4c1.4,0 2.8,16.0 4.2,16.0h4.2c1.4,0 2.8,-16.0 4.2,-16.0h16.8c1.4,0 2.8,16.0 4.2,16.0c1.4,0 2.8,-16.0 4.2,-16.0h12.6c1.4,0 2.8,16.0 4.2,16.0c1.4,0 2.8,-16.0 4.2,-16.0h8.4c1.4,0 2.8,16.0 4.2,16.0c1.4,0 2.8,-16.0 4.2,-16.0h4.2c19.6,0 39.3,16.0 58.9,16.0h8.4c1.4,0 2.8,-16.0 4.2,-16.0c1.4,0 2.8,16.0 4.2,16.0c1.4,0 2.8,-16.0 4.2,-16.0h8.4c1.4,0 2.8,16.0 4.2,16.0c1.4,0 2.8,-16.0 4.2,-16.0c1.4,0 2.8,16.0 4.2,16.0h8.4c1.4,0 2.8,-16.0 4.2,-16.0h4.2c1.4,0 2.8,16.0 4.2,16.0h25.2c1.4,0 2.8,-16.0 4.2,-16.0h12.6c1.4,0 2.8,16.0 4.2,16.0c1.4,0 2.8,-16.0 4.2,-16.0c1.4,0 2.8,16.0 4.2,16.0c1.4,0 2.8,-16.0 4.2,-16.0h4.2c1.4,0 2.8,16.0 4.2,16.0c1.4,0 2.8,-16.0 4.2,-16.0c1.4,0 2.8,16.0 4.2,16.0c1.4,0 2.8,-16.0 4.2,-16.0c1.4,0 2.8,16.0 4.2,16.0c1.4,0 2.8,-16.0 4.2,-16.0c1.4,0 2.8,16.0 4.2,16.0c1.4,0 2.8,-16.0 4.2,-16.0c1.4,0 2.8,16.0 4.2,16.0h21.0c1.4,0 2.8,-16.0 4.2,-16.0h8.4c1.4,0 2.8,16.0 4.2,16.0h12.6c1.4,0 2.8,-16.0 4.2,-16.0c1.4,0 2.8,16.0 4.2,16.0h8.4c1.4,0 2.8,-16.0 4.2,-16.0h8.4c1.4,0 2.8,16.0 4.2,16.0h8.4c1.4,0 2.8,-16.0 4.2,-16.0h4.2c1.4,0 2.8,16.0 4.2,16.0h8.4c1.4,0 2.8,-16.0 4.2,-16.0" fill="none" stroke="#619af3" stroke-width="1.3"/><path d="M1352.9,997.8c1.4,0 2.8,-16.0 4.2,-16.0c1.4,0 2.8,16.0 4.2,16.0c1.4,0 2.8,-16.0 4.2,-16.0c1.4,0 2.8,16.0 4.2,16.0h8.4c1.4,0 2.8,-16.0 4.2,-16.0c1.4,0 2.8,16.0 4.2,16.0c1.4,0 2.8,-16.0 4.2,-16.0h4.2c1.4,0 2.8,16.0 4.2,16.0c1.4,0 2.8,-16.0 4.2,-16.0c1.4,0 2.8,16.0 4.2,16.0h8.4c1.4,0 2.8,-16.0 4.2,-16.0c1.4,0 2.8,16.0 4.2,16.0h4.2c1.4,0 2.8,-16.0 4.2,-16.0h4.2c1.4,0 2.8,16.0 4.2,16.0h4.2c1.4,0 2.8,-16.0 4.2,-16.0h8.4c1.4,0 2.8,16.0 4.2,16.0c1.4,0 2.8,-16.0 4.2,-16.0h4.2c1.4,0 2.8,16.0 4.2,16.0h4.2c1.4,0 2.8,-16.0 4.2,-16.0h4.2c1.4,0 2.8,16.0 4.2,16.0h4.2c1.4,0 2.8,-16.0 4.2,-16.0h8.4c1.4,0 2.8,16.0 4.2,16.0c1.4,0 2.8,-16.0 4.2,-16.0h12.6c1.4,0 2.8,16.0 4.2,16.0c1.4,0 2.8,-16.0 4.2,-16.0c1.4,0 2.8,16.0 4.2,16.0h4.2c1.4,0 2.8,-16.0 4.2,-16.0c1.4,0 2.8,16.0 4.2,16.0c1.4,0 2.8,-16.0 4.2,-16.0c1.4,0 2.8,16.0 4.2,16.0c1.4,0 2.8,-16.0 4.2,-16.0c1.4,0 2.8,16.0 4.2,16.0h8.4c1.4,0 2.8,-16.0 4.2,-16.0c1.4,0 2.8,16.0 4.2,16.0h16.8c1.4,0 2.8,-16.0 4.2,-16.0c1.4,0 2.8,16.0 4.2,16.0c1.4,0 2.8,-16.0 4.2,-16.0h12.6c1.4,0 2.8,16.0 4.2,16.0c1.4,0 2.8,-16.0 4.2,-16.0h4.2c1.4,0 2.8,16.0 4.2,16.0h4.2c1.4,0 2.8,-16.0 4.2,-16.0h4.2c1.4,0 2.8,16.0 4.2,16.0h12.6c1.4,0 2.8,-16.0 4.2,-16.0h4.2c1.4,0 2.8,16.0 4.2,16.0h42.1c1.4,0 2.8,-16.0 4.2,-16.0c1.4,0 2.8,16.0 4.2,16.0h4.2c1.4,0 2.8,-16.0 4.2,-16.0h8.4c1.4,0 2.8,16.0 4.2,16.0h8.4c1.4,0 2.8,-16.0 4.2,-16.0c1.4,0 2.8,16.0 4.2,16.0h16.8c1.4,0 2.8,-16.0 4.2,-16.0h12.6c1.4,0 2.8,16.0 4.2,16.0c1.4,0 2.8,-16.0 4.2,-16.0c1.4,0 2.8,16.0 4.2,16.0c1.4,0 2.8,-16.0 4.2,-16.0h4.2c19.6,0 39.3,16.0 58.9,16.0c1.4,0 2.8,-16.0 4.2,-16.0c1.4,0 2.8,16.0 4.2,16.0c1.4,0 2.8,-16.0 4.2,-16.0c1.4,0 2.8,16.0 4.2,16.0c1.4,0 2.8,-16.0 4.2,-16.0h4.2c1.4,0 2.8,16.0 4.2,16.0h4.2c1.4,0 2.8,-16.0 4.2,-16.0h4.2c1.4,0 2.8,16.0 4.2,16.0c1.4,0 2.8,-16.0 4.2,-16.0c1.4,0 2.8,16.0 4.2,16.0h12.6c1.4,0 2.8,-16.0 4.2,-16.0h4.2c1.4,0 2.8,16.0 4.2,16.0h4.2c1.4,0 2.8,-16.0 4.2,-16.0c1.4,0 2.8,16.0 4.2,16.0h4.2c1.4,0 2.8,-16.0 4.2,-16.0h8.4c1.4,0 2.8,16.0 4.2,16.0c1.4,0 2.8,-16.0 4.2,-16.0h8.4c1.4,0 2.8,16.0 4.2,16.0h4.2c1.4,0 2.8,-16.0 4.2,-16.0h4.2c1.4,0 2.8,16.0 4.2,16.0h4.2c1.4,0 2.8,-16.0 4.2,-16.0h4.2c1.4,0 2.8,16.0 4.2,16.0c1.4,0 2.8,-16.0 4.2,-16.0c1.4,0 2.8,16.0 4.2,16.0c1.4,0 2.8,-16.0 4.2,-16.0c1.4,0 2.8,16.0 4.2,16.0c1.4,0 2.8,-16.0 4.2,-16.0c1.4,0 2.8,16.0 4.2,16.0c1.4,0 2.8,-16.0 4.2,-16.0c1.4,0 2.8,16.0 4.2,16.0h8.4c1.4,0 2.8,-16.0 4.2,-16.0c1.4,0 2.8,16.0 4.2,16.0c1.4,0 2.8,-16.0 4.2,-16.0h8.4c1.4,0 2.8,16.0 4.2,16.0c1.4,0 2.8,-16.0 4.2,-16.0h4.2c1.4,0 2.8,16.0 4.2,16.0h8.4c1.4,0 2.8,-16.0 4.2,-16.0c1.4,0 2.8,16.0 4.2,16.0h21.0" fill="none" stroke="#79ddee" stroke-width="1.3"/></svg>
<div class="t" style="left:1272.10px;top:839.86px;font-size:17.05px;color:#ccccdc;letter-spacing:0.220px;-webkit-text-stroke:0.2px #ccccdc">6500 rpm</div>
<div class="t" style="left:1272.10px;top:893.28px;font-size:17.05px;color:#ccccdc;letter-spacing:0.220px;-webkit-text-stroke:0.2px #ccccdc">6000 rpm</div>
<div class="t" style="left:1272.10px;top:946.70px;font-size:17.05px;color:#ccccdc;letter-spacing:0.220px;-webkit-text-stroke:0.2px #ccccdc">5500 rpm</div>
<div class="t" style="left:1272.10px;top:1000.12px;font-size:17.05px;color:#ccccdc;letter-spacing:0.220px;-webkit-text-stroke:0.2px #ccccdc">5000 rpm</div>
<div class="t" style="left:1272.10px;top:1053.54px;font-size:17.05px;color:#ccccdc;letter-spacing:0.220px;-webkit-text-stroke:0.2px #ccccdc">4500 rpm</div>
<div class="t" style="left:1272.10px;top:1106.96px;font-size:17.05px;color:#ccccdc;letter-spacing:0.220px;-webkit-text-stroke:0.2px #ccccdc">4000 rpm</div>
<div class="t" style="left:1272.10px;top:1160.38px;font-size:17.05px;color:#ccccdc;letter-spacing:0.220px;-webkit-text-stroke:0.2px #ccccdc">3500 rpm</div>
<div class="t" style="left:1272.10px;top:1213.80px;font-size:17.05px;color:#ccccdc;letter-spacing:0.220px;-webkit-text-stroke:0.2px #ccccdc">3000 rpm</div>
<div class="t" style="left:1272.10px;top:1267.22px;font-size:17.05px;color:#ccccdc;letter-spacing:0.220px;-webkit-text-stroke:0.2px #ccccdc">2500 rpm</div>
<div class="t" style="left:1272.10px;top:1320.64px;font-size:17.05px;color:#ccccdc;letter-spacing:0.220px;-webkit-text-stroke:0.2px #ccccdc">2000 rpm</div>
<div class="t" style="left:1272.10px;top:1374.06px;font-size:17.05px;color:#ccccdc;letter-spacing:0.220px;-webkit-text-stroke:0.2px #ccccdc">1500 rpm</div>
<div style="position:absolute;left:2196px;top:811.6px;width:19px;height:5.5px;border-radius:3px;background:#93beff"></div>
<div style="position:absolute;left:2186px;top:829px;width:280px;height:1px;background:#26272c;"></div>
<div class="t" style="left:2224.36px;top:806.15px;font-size:17.30px;color:#ccccdc;transform:scaleX(0.9449);transform-origin:0 0;-webkit-text-stroke:0.2px #ccccdc">Fan Tray 0 Fan 10</div>
<div class="t" style="left:2385.00px;top:806.36px;font-size:17.05px;color:#ccccdc;transform:scaleX(0.9685);transform-origin:0 0;-webkit-text-stroke:0.2px #ccccdc">5100 rpm</div>
<div style="position:absolute;left:2196px;top:842.0px;width:19px;height:5.5px;border-radius:3px;background:#ff831e"></div>
<div style="position:absolute;left:2186px;top:859px;width:280px;height:1px;background:#26272c;"></div>
<div class="t" style="left:2224.36px;top:836.52px;font-size:17.30px;color:#ccccdc;transform:scaleX(0.9444);transform-origin:0 0;-webkit-text-stroke:0.2px #ccccdc">Fan Tray 0 Fan 11</div>
<div class="t" style="left:2385.00px;top:836.73px;font-size:17.05px;color:#ccccdc;transform:scaleX(0.9685);transform-origin:0 0;-webkit-text-stroke:0.2px #ccccdc">6000 rpm</div>
<div style="position:absolute;left:2196px;top:872.4px;width:19px;height:5.5px;border-radius:3px;background:#f35869"></div>
<div style="position:absolute;left:2186px;top:890px;width:280px;height:1px;background:#26272c;"></div>
<div class="t" style="left:2224.36px;top:866.89px;font-size:17.30px;color:#ccccdc;transform:scaleX(0.9449);transform-origin:0 0;-webkit-text-stroke:0.2px #ccccdc">Fan Tray 0 Fan 12</div>
<div class="t" style="left:2385.00px;top:867.10px;font-size:17.05px;color:#ccccdc;transform:scaleX(0.9685);transform-origin:0 0;-webkit-text-stroke:0.2px #ccccdc">4950 rpm</div>
<div style="position:absolute;left:2196px;top:902.8px;width:19px;height:5.5px;border-radius:3px;background:#649df3"></div>
<div style="position:absolute;left:2186px;top:920px;width:280px;height:1px;background:#26272c;"></div>
<div class="t" style="left:2224.36px;top:897.26px;font-size:17.30px;color:#ccccdc;transform:scaleX(0.9449);transform-origin:0 0;-webkit-text-stroke:0.2px #ccccdc">Fan Tray 0 Fan 13</div>
<div class="t" style="left:2385.00px;top:897.47px;font-size:17.05px;color:#ccccdc;transform:scaleX(0.9685);transform-origin:0 0;-webkit-text-stroke:0.2px #ccccdc">5850 rpm</div>
<div style="position:absolute;left:2196px;top:933.1px;width:19px;height:5.5px;border-radius:3px;background:#be82dc"></div>
<div style="position:absolute;left:2186px;top:950px;width:280px;height:1px;background:#26272c;"></div>
<div class="t" style="left:2224.35px;top:927.63px;font-size:17.30px;color:#ccccdc;transform:scaleX(0.9453);transform-origin:0 0;-webkit-text-stroke:0.2px #ccccdc">Fan Tray 0 Fan 14</div>
<div class="t" style="left:2385.00px;top:927.84px;font-size:17.05px;color:#ccccdc;transform:scaleX(0.9685);transform-origin:0 0;-webkit-text-stroke:0.2px #ccccdc">5100 rpm</div>
<div style="position:absolute;left:2196px;top:963.5px;width:19px;height:5.5px;border-radius:3px;background:#7b6aa8"></div>
<div style="position:absolute;left:2186px;top:981px;width:280px;height:1px;background:#26272c;"></div>
<div class="t" style="left:2224.36px;top:958.00px;font-size:17.30px;color:#ccccdc;transform:scaleX(0.9449);transform-origin:0 0;-webkit-text-stroke:0.2px #ccccdc">Fan Tray 0 Fan 15</div>
<div class="t" style="left:2385.00px;top:958.21px;font-size:17.05px;color:#ccccdc;transform:scaleX(0.9685);transform-origin:0 0;-webkit-text-stroke:0.2px #ccccdc">6000 rpm</div>
<div style="position:absolute;left:2196px;top:993.9px;width:19px;height:5.5px;border-radius:3px;background:#47913e"></div>
<div style="position:absolute;left:2186px;top:1011px;width:280px;height:1px;background:#26272c;"></div>
<div class="t" style="left:2224.36px;top:988.37px;font-size:17.30px;color:#ccccdc;transform:scaleX(0.9449);transform-origin:0 0;-webkit-text-stroke:0.2px #ccccdc">Fan Tray 0 Fan 16</div>
<div class="t" style="left:2385.00px;top:988.58px;font-size:17.05px;color:#ccccdc;transform:scaleX(0.9685);transform-origin:0 0;-webkit-text-stroke:0.2px #ccccdc">5100 rpm</div>
<div style="position:absolute;left:2196px;top:1024.2px;width:19px;height:5.5px;border-radius:3px;background:#fae13b"></div>
<div style="position:absolute;left:2186px;top:1042px;width:280px;height:1px;background:#26272c;"></div>
<div class="t" style="left:2224.36px;top:1018.74px;font-size:17.30px;color:#ccccdc;transform:scaleX(0.9449);transform-origin:0 0;-webkit-text-stroke:0.2px #ccccdc">Fan Tray 0 Fan 17</div>
<div class="t" style="left:2385.00px;top:1018.95px;font-size:17.05px;color:#ccccdc;transform:scaleX(0.9685);transform-origin:0 0;-webkit-text-stroke:0.2px #ccccdc">6000 rpm</div>
<div style="position:absolute;left:2196px;top:1054.6px;width:19px;height:5.5px;border-radius:3px;background:#5388c1"></div>
<div style="position:absolute;left:2186px;top:1072px;width:280px;height:1px;background:#26272c;"></div>
<div class="t" style="left:2224.36px;top:1049.11px;font-size:17.30px;color:#ccccdc;transform:scaleX(0.9449);transform-origin:0 0;-webkit-text-stroke:0.2px #ccccdc">Fan Tray 0 Fan 18</div>
<div class="t" style="left:2385.00px;top:1049.32px;font-size:17.05px;color:#ccccdc;transform:scaleX(0.9685);transform-origin:0 0;-webkit-text-stroke:0.2px #ccccdc">5100 rpm</div>
<div style="position:absolute;left:2196px;top:1085.0px;width:19px;height:5.5px;border-radius:3px;background:#c6692a"></div>
<div style="position:absolute;left:2186px;top:1102px;width:280px;height:1px;background:#26272c;"></div>
<div class="t" style="left:2224.36px;top:1079.48px;font-size:17.30px;color:#ccccdc;transform:scaleX(0.9449);transform-origin:0 0;-webkit-text-stroke:0.2px #ccccdc">Fan Tray 0 Fan 19</div>
<div class="t" style="left:2385.00px;top:1079.69px;font-size:17.05px;color:#ccccdc;transform:scaleX(0.9685);transform-origin:0 0;-webkit-text-stroke:0.2px #ccccdc">5850 rpm</div>
<div style="position:absolute;left:2196px;top:1115.3px;width:19px;height:5.5px;border-radius:3px;background:#922216"></div>
<div style="position:absolute;left:2186px;top:1133px;width:280px;height:1px;background:#26272c;"></div>
<div class="t" style="left:2224.36px;top:1109.85px;font-size:17.30px;color:#ccccdc;transform:scaleX(0.9446);transform-origin:0 0;-webkit-text-stroke:0.2px #ccccdc">Fan Tray 0 Fan 2</div>
<div class="t" style="left:2385.00px;top:1110.06px;font-size:17.05px;color:#ccccdc;transform:scaleX(0.9685);transform-origin:0 0;-webkit-text-stroke:0.2px #ccccdc">5100 rpm</div>
<div style="position:absolute;left:2196px;top:1145.7px;width:19px;height:5.5px;border-radius:3px;background:#1e5286"></div>
<div style="position:absolute;left:2186px;top:1163px;width:280px;height:1px;background:#26272c;"></div>
<div class="t" style="left:2224.36px;top:1140.22px;font-size:17.30px;color:#ccccdc;transform:scaleX(0.9449);transform-origin:0 0;-webkit-text-stroke:0.2px #ccccdc">Fan Tray 0 Fan 20</div>
<div class="t" style="left:2385.00px;top:1140.43px;font-size:17.05px;color:#ccccdc;transform:scaleX(0.9685);transform-origin:0 0;-webkit-text-stroke:0.2px #ccccdc">4950 rpm</div>
<div style="position:absolute;left:2196px;top:1176.1px;width:19px;height:5.5px;border-radius:3px;background:#79316f"></div>
<div style="position:absolute;left:2186px;top:1193px;width:280px;height:1px;background:#26272c;"></div>
<div class="t" style="left:2224.36px;top:1170.59px;font-size:17.30px;color:#ccccdc;transform:scaleX(0.9449);transform-origin:0 0;-webkit-text-stroke:0.2px #ccccdc">Fan Tray 0 Fan 21</div>
<div class="t" style="left:2385.00px;top:1170.80px;font-size:17.05px;color:#ccccdc;transform:scaleX(0.9685);transform-origin:0 0;-webkit-text-stroke:0.2px #ccccdc">5850 rpm</div>
<div style="position:absolute;left:2196px;top:1206.5px;width:19px;height:5.5px;border-radius:3px;background:#655382"></div>
<div style="position:absolute;left:2186px;top:1224px;width:280px;height:1px;background:#26272c;"></div>
<div class="t" style="left:2224.36px;top:1200.96px;font-size:17.30px;color:#ccccdc;transform:scaleX(0.9449);transform-origin:0 0;-webkit-text-stroke:0.2px #ccccdc">Fan Tray 0 Fan 22</div>
<div class="t" style="left:2385.00px;top:1201.17px;font-size:17.05px;color:#ccccdc;transform:scaleX(0.9685);transform-origin:0 0;-webkit-text-stroke:0.2px #ccccdc">5100 rpm</div>
<div style="position:absolute;left:2196px;top:1236.8px;width:19px;height:5.5px;border-radius:3px;background:#bddeb2"></div>
<div style="position:absolute;left:2186px;top:1254px;width:280px;height:1px;background:#26272c;"></div>
<div class="t" style="left:2224.36px;top:1231.33px;font-size:17.30px;color:#ccccdc;transform:scaleX(0.9449);transform-origin:0 0;-webkit-text-stroke:0.2px #ccccdc">Fan Tray 0 Fan 23</div>
<div class="t" style="left:2385.00px;top:1231.54px;font-size:17.05px;color:#ccccdc;transform:scaleX(0.9685);transform-origin:0 0;-webkit-text-stroke:0.2px #ccccdc">5850 rpm</div>
<div style="position:absolute;left:2196px;top:1267.2px;width:19px;height:5.5px;border-radius:3px;background:#f5d8a0"></div>
<div style="position:absolute;left:2186px;top:1285px;width:280px;height:1px;background:#26272c;"></div>
<div class="t" style="left:2224.35px;top:1261.70px;font-size:17.30px;color:#ccccdc;transform:scaleX(0.9453);transform-origin:0 0;-webkit-text-stroke:0.2px #ccccdc">Fan Tray 0 Fan 24</div>
<div class="t" style="left:2385.00px;top:1261.91px;font-size:17.05px;color:#ccccdc;transform:scaleX(0.9685);transform-origin:0 0;-webkit-text-stroke:0.2px #ccccdc">4800 rpm</div>
<div style="position:absolute;left:2196px;top:1297.6px;width:19px;height:5.5px;border-radius:3px;background:#7bdeee"></div>
<div style="position:absolute;left:2186px;top:1315px;width:280px;height:1px;background:#26272c;"></div>
<div class="t" style="left:2224.36px;top:1292.07px;font-size:17.30px;color:#ccccdc;transform:scaleX(0.9449);transform-origin:0 0;-webkit-text-stroke:0.2px #ccccdc">Fan Tray 0 Fan 25</div>
<div class="t" style="left:2385.00px;top:1292.28px;font-size:17.05px;color:#ccccdc;transform:scaleX(0.9685);transform-origin:0 0;-webkit-text-stroke:0.2px #ccccdc">5850 rpm</div>
<div style="position:absolute;left:2196px;top:1327.9px;width:19px;height:5.5px;border-radius:3px;background:#f9c098"></div>
<div style="position:absolute;left:2186px;top:1345px;width:280px;height:1px;background:#26272c;"></div>
<div class="t" style="left:2224.36px;top:1322.44px;font-size:17.30px;color:#ccccdc;transform:scaleX(0.9449);transform-origin:0 0;-webkit-text-stroke:0.2px #ccccdc">Fan Tray 0 Fan 26</div>
<div class="t" style="left:2385.00px;top:1322.65px;font-size:17.05px;color:#ccccdc;transform:scaleX(0.9685);transform-origin:0 0;-webkit-text-stroke:0.2px #ccccdc">4950 rpm</div>
<div style="position:absolute;left:2196px;top:1358.3px;width:19px;height:5.5px;border-radius:3px;background:#f39a9a"></div>
<div style="position:absolute;left:2186px;top:1376px;width:280px;height:1px;background:#26272c;"></div>
<div class="t" style="left:2224.36px;top:1352.81px;font-size:17.30px;color:#ccccdc;transform:scaleX(0.9449);transform-origin:0 0;-webkit-text-stroke:0.2px #ccccdc">Fan Tray 0 Fan 27</div>
<div class="t" style="left:2385.00px;top:1353.02px;font-size:17.05px;color:#ccccdc;transform:scaleX(0.9685);transform-origin:0 0;-webkit-text-stroke:0.2px #ccccdc">5850 rpm</div>
<div style="position:absolute;left:2455.5px;top:836.6px;width:10.5px;height:226px;background:#323338;border-radius:5px"></div>
<div style="position:absolute;left:2489px;top:851.7px;width:7px;height:243px;background:#2c2d32;border-radius:3px"></div>
<div style="position:absolute;left:2446.6px;top:753.6px;width:31px;height:41px;background:#222328;border-radius:3px"></div>
<div style="position:absolute;left:2460.0px;top:766.3px;width:3.4px;height:3.4px;border-radius:50%;background:#a0a1a8"></div>
<div style="position:absolute;left:2460.0px;top:772.7px;width:3.4px;height:3.4px;border-radius:50%;background:#a0a1a8"></div>
<div style="position:absolute;left:2460.0px;top:778.8px;width:3.4px;height:3.4px;border-radius:50%;background:#a0a1a8"></div>
<svg style="left:0;top:0" width="2507" height="120" viewBox="0 0 2507 120" fill="none" stroke-linecap="round" stroke-linejoin="round"><defs><linearGradient id="lg" x1="0" y1="0" x2="0" y2="1"><stop offset="0" stop-color="#e9623a"/><stop offset="0.55" stop-color="#ec9a3e"/><stop offset="1" stop-color="#f5cf3a"/></linearGradient></defs><path d="M43.3,11.8 L47.7,15.3 L53.2,15.0 L53.4,21.3 L56.3,25.6 L54.7,29.9 L56.2,34.4 L51.2,37.4 L48.2,42.8 L41.8,40.7 L35.0,41.8 L32.9,35.4 L27.8,30.8 L31.1,24.5 L31.0,17.0 L37.9,16.2Z" fill="url(#lg)" stroke="url(#lg)" stroke-width="0.8"/><circle cx="45.4" cy="27.9" r="9.1" fill="#1b1c20"/><path d="M54.6,27.2 L57.5,26.4 L57.5,31.2 L54.2,31.0Z" fill="#1b1c20"/><path d="M46.4,33.6 A4.9,4.9 0 1 1 51.2,27.6" stroke="#f08a3a" stroke-width="2.5" stroke-linecap="round"/><path d="M51.2,27.6 A4.9,4.9 0 0 1 50.4,31.6" stroke="#ee9a3c" stroke-width="2.3" stroke-linecap="butt"/><path d="M49.6,19.2 A9.2,9.2 0 0 1 55.4,25.2" stroke="#e86a34" stroke-width="2.6" stroke-linecap="round"/><line x1="30.2" y1="73.6" x2="53.8" y2="73.6" stroke="#ccccdc" stroke-width="2.6"/><line x1="30.2" y1="79.6" x2="53.8" y2="79.6" stroke="#ccccdc" stroke-width="2.6"/><line x1="30.2" y1="85.6" x2="53.8" y2="85.6" stroke="#ccccdc" stroke-width="2.6"/><path d="M143,76.8 L147.6,80.7 L143,84.6" stroke="#9b9ca6" stroke-width="1.5"/><path d="M279.3,76.8 L283.90000000000003,80.7 L279.3,84.6" stroke="#9b9ca6" stroke-width="1.5"/><g stroke="#ccccdc" stroke-width="1.9"><circle cx="673.6" cy="73.4" r="2.7"/><circle cx="661.2" cy="80" r="2.7"/><circle cx="673.6" cy="86.2" r="2.7"/><path d="M663.6,78.7 L671.2,74.7 M663.6,81.3 L671.2,84.9"/></g><g stroke="#9b9ca6" stroke-width="1.7"><circle cx="972.3" cy="25.9" r="6.9"/><path d="M977.3,30.9 L981,34.8"/></g><g stroke="#9b9ca6" stroke-width="1.5"><rect x="1475.9" y="21.9" width="17.5" height="10.6" rx="2.2"/></g><g fill="#9b9ca6"><rect x="1478.2" y="24.6" width="2" height="1.4"/><rect x="1481.6" y="24.6" width="2" height="1.4"/><rect x="1485" y="24.6" width="2" height="1.4"/><rect x="1488.5" y="24.6" width="2" height="1.4"/><rect x="1478.2" y="28.2" width="1.4" height="1.4"/><rect x="1482" y="28.2" width="5.4" height="1.6"/><rect x="1489.3" y="28.2" width="1.4" height="1.4"/></g><path d="M2262.3,19.8 V34.3 M2255,27 H2269.6" stroke="#9b9ca6" stroke-width="1.8"/><path d="M2280.3,25.1 L2284.3,29.2 L2288.3,25.1" stroke="#9b9ca6" stroke-width="1.5"/><line x1="2311.5" y1="12.3" x2="2311.5" y2="42.3" stroke="#34353a" stroke-width="1"/><g stroke="#9b9ca6" stroke-width="1.8"><circle cx="2340.3" cy="27" r="8.8"/><path d="M2337.5,24.8 A2.9,2.9 0 1 1 2341.2,27.5 C2340.4,27.9 2340.3,28.5 2340.3,29.4"/></g><circle cx="2340.3" cy="32.4" r="1.1" fill="#9b9ca6"/><g stroke="#9b9ca6" stroke-width="1.8"><circle cx="2383.6" cy="33.8" r="1.9"/><path d="M2382.4,27.6 A7,7 0 0 1 2390,35.2 M2382.4,21.6 A13,13 0 0 1 2396.2,35.6"/></g><g fill="#6e9fff"><rect x="1508.8" y="79.5" width="3" height="6.5"/><rect x="1512.8" y="76.3" width="3" height="9.7"/><rect x="1516.8" y="80.8" width="3" height="5.2"/><rect x="1520.8" y="73.5" width="3" height="12.5"/></g><path d="M1528,74.3 V83.2 M1523.6,78.8 H1532.4" stroke="#f5a524" stroke-width="2.4" stroke-linecap="butt"/><path d="M1581.6,77.4 L1586.3,82 L1591,77.4" stroke="#6e9fff" stroke-width="1.8"/><g stroke="#9b9ca6" stroke-width="1.7"><path d="M1630,73.6 Q1630,72.2 1631.4,72.2 H1640.8 L1645.2,76.6 V86 Q1645.2,87.4 1643.8,87.4 H1631.4 Q1630,87.4 1630,86 Z"/><path d="M1633.3,72.4 V76.2 H1640 V72.4 M1633,87.2 V81.8 H1642.2 V87.2"/></g><path d="M1699.57,77.16 L1699.96,77.99 L1702.06,78.24 L1702.06,81.36 L1699.96,81.61 L1699.57,82.44 L1699.26,83.30 L1700.57,84.96 L1698.36,87.17 L1696.70,85.86 L1695.84,86.17 L1695.01,86.56 L1694.76,88.66 L1691.64,88.66 L1691.39,86.56 L1690.56,86.17 L1689.70,85.86 L1688.04,87.17 L1685.83,84.96 L1687.14,83.30 L1686.83,82.44 L1686.44,81.61 L1684.34,81.36 L1684.34,78.24 L1686.44,77.99 L1686.83,77.16 L1687.14,76.30 L1685.83,74.64 L1688.04,72.43 L1689.70,73.74 L1690.56,73.43 L1691.39,73.04 L1691.64,70.94 L1694.76,70.94 L1695.01,73.04 L1695.84,73.43 L1696.70,73.74 L1698.36,72.43 L1700.57,74.64 L1699.26,76.30Z" stroke="#9b9ca6" stroke-width="1.6"/><circle cx="1693.2" cy="79.8" r="3" stroke="#9b9ca6" stroke-width="1.7"/><path d="M1747.8,75.6 L1742,79.8 L1747.8,84" stroke="#9b9ca6" stroke-width="1.7"/><g stroke="#9b9ca6" stroke-width="1.8"><circle cx="1784.1" cy="79.8" r="9.2"/><path d="M1784.1,74.5 V80.3 H1780.3"/></g><path d="M2231,77.6 L2235.2,81.8 L2239.4,77.6" stroke="#9b9ca6" stroke-width="1.5"/><path d="M2270.2,75.2 L2276,79.8 L2270.2,84.4" stroke="#9b9ca6" stroke-width="1.7"/><g stroke="#9b9ca6" stroke-width="1.8"><circle cx="2311.2" cy="78.4" r="7.9"/><path d="M2307.4,78.4 H2315 M2317,84.2 L2321.8,89"/></g><g stroke="#9b9ca6" stroke-width="1.8"><path d="M2361.3,76.6 A8.6,8.6 0 0 1 2377.4,76.8 M2377.2,82.8 A8.6,8.6 0 0 1 2361.1,82.6"/><path d="M2360.7,71.2 V77.2 H2366.4 M2378,88.4 V82.4 H2372.3"/></g><path d="M2408.2,77.4 L2412.4,81.8 L2416.6,77.4" stroke="#9b9ca6" stroke-width="1.5"/><line x1="2439.7" y1="64" x2="2439.7" y2="95.4" stroke="#34353a" stroke-width="1"/><path d="M2461,84.6 L2466.9,78.4 L2472.8,84.6" stroke="#9b9ca6" stroke-width="2.3"/></svg>
<div style="position:absolute;left:839.5px;top:1030.9px;width:71px;height:71px;box-sizing:border-box;border:3px solid #fff;border-radius:50%;background:#7dac58"></div>
<div style="position:absolute;left:1768.0px;top:1173.0px;width:72px;height:72px;box-sizing:border-box;border:3px solid #fff;border-radius:50%;background:#7dac58"></div>
<div class="t" style="left:864.60px;top:1051.77px;font-size:36.72px;color:#ffffff;font-family:'Liberation Mono';-webkit-text-stroke:0.9px #fff">1</div>
<div class="t" style="left:1794.60px;top:1190.85px;font-size:36.42px;color:#ffffff;-webkit-text-stroke:0.7px #fff">2</div>
</div></div>
<div style="position:absolute;left:10px;top:6px;width:2486px;height:1378px;border-radius:0 0 12px 9px;box-shadow:inset 0 0 0 1px rgba(0,0,0,0.85)"></div>
</body></html>
